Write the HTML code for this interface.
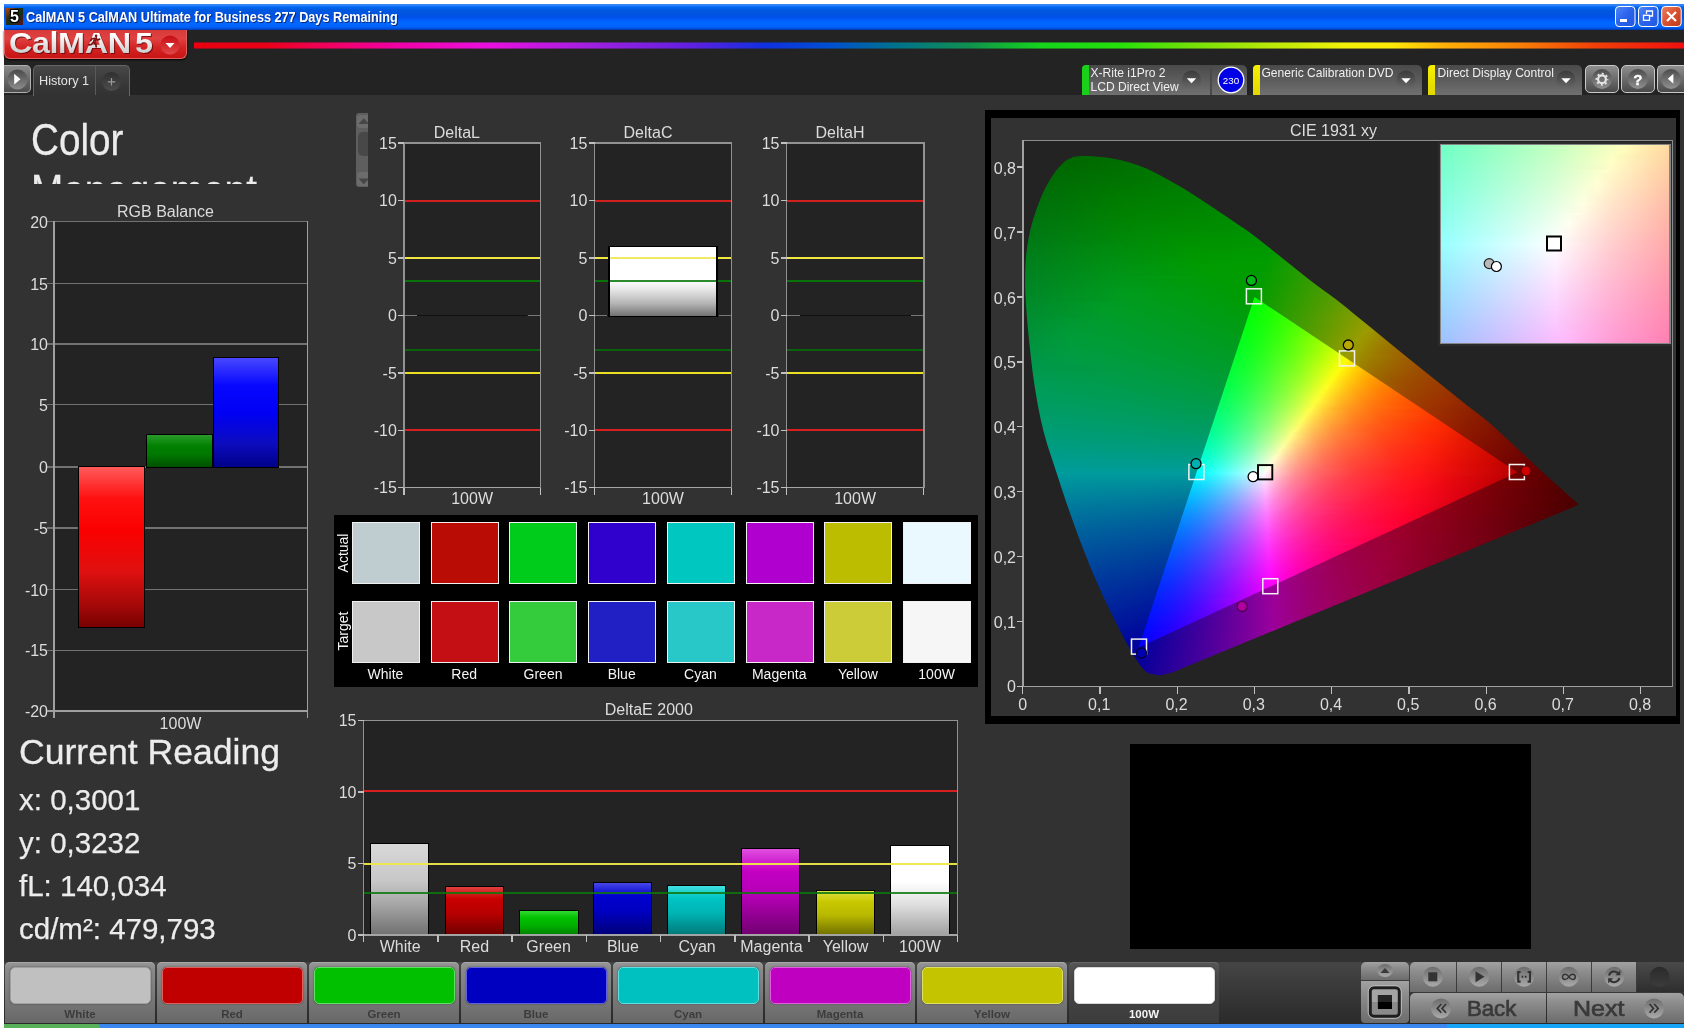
<!DOCTYPE html>
<html><head><meta charset="utf-8"><title>CalMAN 5</title>
<style>
*{box-sizing:border-box;margin:0;padding:0}
html,body{width:1688px;height:1028px;overflow:hidden;background:#fff}
body{font-family:"Liberation Sans",sans-serif;color:#e6e6e6;position:relative}
.a{position:absolute}
#win{position:absolute;left:4px;top:4px;width:1680px;height:1020px;background:#323232;overflow:hidden}
/* coordinates inside #page are page coordinates */
#page{position:absolute;left:0;top:0;width:1688px;height:1028px;overflow:hidden;will-change:transform}
#titlebar{left:4px;top:4px;width:1680px;height:26.3px;background:linear-gradient(180deg,#3a88f0 0,#2a80f8 1.5px,#0068f0 3px,#0058e0 6px,#0054e0 10px,#0050e8 13px,#005cf8 16px,#0068ff 19px,#0062f8 23px,#0048d0 25.2px,#0c2c80 26.3px)}
#titletext{left:25.5px;top:9px;font-weight:bold;font-size:14px;transform:scaleX(0.905);color:#fff;white-space:nowrap;text-shadow:1px 1px 0 #0a2a80;transform-origin:0 0;letter-spacing:0}
#hdr{left:4px;top:30px;width:1680px;height:65px;background:#232323}
#rainbow{left:194px;top:41.5px;width:1490px;height:7px;background:linear-gradient(90deg,#e80010 0,#e80018 4.8%,#f00050 8.1%,#f000a0 13.2%,#e810e0 19.9%,#a020e0 26.6%,#6020e0 33.3%,#1030e0 38.3%,#0050d0 42.7%,#007090 46.8%,#109050 51.9%,#14d41c 56.8%,#26e00a 62.1%,#76e008 67.1%,#b8e808 72.1%,#f0f008 77.2%,#ffe808 80.5%,#ffb008 83.9%,#f88008 88.9%,#f04008 94%,#f01010 100%)}
#rainbow:after{content:"";position:absolute;left:0;top:0;right:0;bottom:0;background:linear-gradient(180deg,rgba(35,35,35,.75) 0,rgba(35,35,35,0) 1.3px,rgba(35,35,35,0) 5.7px,rgba(35,35,35,.75) 7px)}
.tabr{top:65px;height:30px;border-radius:5px 5px 0 0;background:linear-gradient(180deg,#4a4a4a 0,#5c5c5c 50%,#707070 100%)}
.tabt{font-size:12.05px;color:#f0f0f0;white-space:nowrap;line-height:14px}
.tbtn{top:65px;height:28px;width:33.5px;border-radius:5px;border:1px solid #c8c8c8;background:linear-gradient(180deg,#8e8e8e 0,#6c6c6c 50%,#4a4a4a 100%)}
.t16{font-size:16px;color:#dcdcdc;white-space:nowrap}
.ctr{transform:translateX(-50%)}
.rt{transform:translateX(-100%)}
.plot{background:#232323;border:1.5px solid #8a8a8a}
.hl{position:absolute;height:2px}
.cie i{position:absolute;display:block;height:2px}
</style></head>
<body>
<div id="page">
<div class="a" id="win" style="left:4px;top:4px"></div>
<div class="a" id="titlebar"></div>
<div class="a" style="left:6px;top:8px;width:17px;height:17px;background:linear-gradient(135deg,#c04010 0,#303010 35%,#103018 60%,#601020 100%)"></div>
<div class="a" style="left:6px;top:6.5px;width:17px;height:19px;font-weight:bold;font-size:16px;line-height:20px;text-align:center;color:#fff;text-shadow:0 0 1px #000,1px 1px 0 #000,-1px -1px 0 #000,1px -1px 0 #000,-1px 1px 0 #000">5</div>
<div class="a" id="titletext">CalMAN 5 CalMAN Ultimate for Business 277 Days Remaining</div>
<svg class="a" style="left:1610px;top:4px" width="78" height="26" viewBox="0 0 78 26">
<defs>
<linearGradient id="wb" x1="0" y1="0" x2="1" y2="1"><stop offset="0" stop-color="#5088f8"/><stop offset=".5" stop-color="#2a62ec"/><stop offset="1" stop-color="#2458e0"/></linearGradient>
<linearGradient id="wr" x1="0" y1="0" x2="1" y2="1"><stop offset="0" stop-color="#f08060"/><stop offset=".5" stop-color="#d85030"/><stop offset="1" stop-color="#c03c18"/></linearGradient>
</defs>
<rect x="5.5" y="2.5" width="19.5" height="20" rx="3.5" fill="url(#wb)" stroke="#fff" stroke-width="1"/>
<rect x="10" y="15" width="7" height="3" fill="#fff"/>
<rect x="28.5" y="2.5" width="19.5" height="20" rx="3.5" fill="url(#wb)" stroke="#fff" stroke-width="1"/>
<path d="M36.5 10v-3h6v5h-2.5" fill="none" stroke="#fff" stroke-width="1.3"/><rect x="33.5" y="11.3" width="6" height="5" fill="none" stroke="#fff" stroke-width="1.3"/>
<rect x="51.7" y="2.5" width="19.5" height="20" rx="3.5" fill="url(#wr)" stroke="#fff" stroke-width="1"/>
<path d="M57 8l9 9M66 8l-9 9" stroke="#fff" stroke-width="2.2"/>
</svg>

<div class="a" id="hdr"></div>
<div class="a" id="rainbow"></div>
<!-- logo -->
<div class="a" style="left:4px;top:30px;width:183px;height:28.5px;border-radius:0 0 6px 6px;background:linear-gradient(180deg,#d83a3a 0,#e04242 30%,#d42626 60%,#c81414 100%);border:1px solid #e06060;border-top:0;box-shadow:0 1px 2px #000"></div>
<div class="a" style="left:8.8px;top:25.8px;filter:drop-shadow(1px 1px 0.6px rgba(90,0,0,.7))"><div id="logotext" style="font-size:30px;font-weight:bold;white-space:nowrap;line-height:34px;transform:scaleX(1.08);transform-origin:0 0;letter-spacing:-0.4px;background:linear-gradient(180deg,#ffffff 25%,#e4e4e4 55%,#c4c4c4 90%);-webkit-background-clip:text;background-clip:text;color:transparent">CalMAN<span style="margin-left:4px">5</span></div></div>
<svg class="a" style="left:85.5px;top:33px" width="17.5" height="17.5" viewBox="0 0 16 16"><g fill="none" stroke="#7c1414" stroke-width="1.6" stroke-linecap="round"><circle cx="9.2" cy="2.6" r="1.2" fill="#7c1414" stroke="none"/><path d="M8.3 4.6L6.8 8.4M8.3 4.8L5.4 5.2L4.3 7M8.5 4.9L10.8 6.4L12.4 5.6M6.8 8.4L9 10L9.3 12.6M6.8 8.4L5 10.4L2.6 10.8"/></g></svg>
<svg class="a" style="left:158px;top:32.6px" width="24" height="24" viewBox="0 0 24 24"><defs><linearGradient id="lg1" x1="0" y1="0" x2="0" y2="1"><stop offset="0" stop-color="#c80c14"/><stop offset="1" stop-color="#e04848"/></linearGradient></defs><circle cx="12" cy="12" r="9.5" fill="url(#lg1)"/><path d="M7.5 10h9l-4.5 5z" fill="#fff"/></svg>
<!-- play button -->
<div class="a" style="left:4px;top:65px;width:27px;height:28px;border-radius:0 5px 5px 0;background:linear-gradient(180deg,#8a8a8a 0,#6a6a6a 50%,#4e4e4e 100%);border:1px solid #b0b0b0;border-left:0"></div>
<svg class="a" style="left:7px;top:69px" width="22" height="22" viewBox="0 0 22 22"><defs><linearGradient id="lg2" x1="0" y1="0" x2="0" y2="1"><stop offset="0" stop-color="#4a4a4a"/><stop offset="1" stop-color="#8c8c8c"/></linearGradient></defs><circle cx="10.5" cy="10.5" r="10" fill="url(#lg2)"/><path d="M7.2 4.8l6.3 5.4-6.3 5.4z" fill="#fff"/></svg>
<!-- history tab -->
<div class="a" style="left:33px;top:65px;width:97px;height:31px;border-radius:5px 5px 0 0;background:linear-gradient(180deg,#484848 0,#383838 60%,#323232 100%);border:1px solid #666;border-bottom:0"></div>
<div class="a" style="left:95px;top:66px;width:1px;height:29px;background:#5a5a5a"></div>
<div class="a" style="left:39px;top:74.3px;font-size:12.7px;color:#e4e4e4;white-space:nowrap">History 1</div>
<svg class="a" style="left:101px;top:71px" width="22" height="22" viewBox="0 0 22 22"><defs><linearGradient id="lg3" x1="0" y1="0" x2="0" y2="1"><stop offset="0" stop-color="#303030"/><stop offset="1" stop-color="#4c4c4c"/></linearGradient></defs><circle cx="10.5" cy="10.5" r="9.5" fill="url(#lg3)"/><path d="M10.5 7v7.5M6.8 10.8h7.5" stroke="#9a9a9a" stroke-width="1.2"/></svg>
<!-- right tabs -->
<div class="a tabr" style="left:1082px;width:165px"></div>
<div class="a" style="left:1082px;top:65px;width:6.5px;height:30px;background:#1ad01a;border-radius:4px 0 0 0"></div>
<div class="a tabt" style="left:1090.5px;top:66px;line-height:14px">X-Rite i1Pro 2<br>LCD Direct View</div>
<div class="a" style="left:1210px;top:67px;width:1.5px;height:28px;background:#4a4a4a"></div>
<svg class="a" style="left:1217px;top:66px" width="28" height="28"><circle cx="14" cy="14" r="12.8" fill="#0000e6" stroke="#fff" stroke-width="1.3"/><text x="14" y="17.5" font-family="Liberation Sans, sans-serif" font-size="9.8" fill="#fff" text-anchor="middle">230</text></svg>
<div class="a tabr" style="left:1253px;width:169px"></div>
<div class="a" style="left:1253px;top:65px;width:6.5px;height:30px;background:linear-gradient(180deg,#f8f000,#e0d800);border-radius:4px 0 0 0"></div>
<div class="a tabt" style="left:1261.5px;top:66px">Generic Calibration DVD</div>
<div class="a tabr" style="left:1428px;width:154px"></div>
<div class="a" style="left:1428px;top:65px;width:6.5px;height:30px;background:linear-gradient(180deg,#f8f000,#e0d800);border-radius:4px 0 0 0"></div>
<div class="a tabt" style="left:1437.5px;top:66px">Direct Display Control</div>
<div class="a tbtn" style="left:1585px"></div><div class="a tbtn" style="left:1621px"></div><div class="a tbtn" style="left:1657px;width:27px;border-right:0;border-radius:5px 0 0 5px"></div>
<svg class="a" style="left:0;top:0" width="1688" height="100" viewBox="0 0 1688 100">
<defs><linearGradient id="dd" x1="0" y1="0" x2="0" y2="1"><stop offset="0" stop-color="#3a3a3a"/><stop offset="1" stop-color="#6a6a6a"/></linearGradient>
<linearGradient id="bb" x1="0" y1="0" x2="0" y2="1"><stop offset="0" stop-color="#4c4c4c"/><stop offset="1" stop-color="#909090"/></linearGradient></defs>
<g id="ddb"><circle cx="1191.5" cy="80" r="9.5" fill="url(#dd)"/><path d="M1186.8 78.2h9.4l-4.7 5z" fill="#fff"/></g>
<use href="#ddb" x="214.5"/><use href="#ddb" x="374.5"/>
<circle cx="1602" cy="79" r="10" fill="url(#bb)"/><circle cx="1637.8" cy="79" r="10" fill="url(#bb)"/><circle cx="1671" cy="79" r="10" fill="url(#bb)"/>
<g fill="none" stroke="#e6e6e6"><circle cx="1602" cy="79.3" r="3.9" stroke-width="2.2"/><circle cx="1602" cy="79.3" r="5.6" stroke-width="1.7" stroke-dasharray="2 2.398" stroke-dashoffset="1"/></g>
<text x="1637.8" y="85" font-family="Liberation Sans, sans-serif" font-weight="bold" font-size="15" fill="#fff" stroke="#fff" stroke-width="0.4" text-anchor="middle">?</text>
<path d="M1673.4 73.8v10l-5.6-5z" fill="#fff"/>
</svg>

<div class="a" style="left:20px;top:108px;width:320px;height:75.6px;overflow:hidden"><div id="cm" style="position:absolute;left:11px;top:5.5px;font-size:45px;line-height:51px;color:#ececec;-webkit-text-stroke:0.3px #ececec;transform-origin:0 0;transform:scaleX(0.86);white-space:nowrap">Color<br>Management</div></div>
<div class="a t16 ctr" style="left:165.5px;top:202.7px">RGB Balance</div>
<div class="a" style="left:54px;top:222px;width:254px;height:490px;background:#232323"></div>
<div class="a" style="left:47px;top:221.0px;width:261px;height:1.3px;background:#727272"></div>
<div class="a t16 rt" style="left:48px;top:213.8px">20</div>
<div class="a" style="left:47px;top:283.1px;width:261px;height:1.3px;background:#727272"></div>
<div class="a t16 rt" style="left:48px;top:275.9px">15</div>
<div class="a" style="left:47px;top:343.4px;width:261px;height:1.3px;background:#727272"></div>
<div class="a t16 rt" style="left:48px;top:336.2px">10</div>
<div class="a" style="left:47px;top:404.2px;width:261px;height:1.3px;background:#727272"></div>
<div class="a t16 rt" style="left:48px;top:397.0px">5</div>
<div class="a" style="left:47px;top:466.3px;width:261px;height:1.3px;background:#727272"></div>
<div class="a t16 rt" style="left:48px;top:459.1px">0</div>
<div class="a" style="left:47px;top:527.3px;width:261px;height:1.3px;background:#727272"></div>
<div class="a t16 rt" style="left:48px;top:520.1px">-5</div>
<div class="a" style="left:47px;top:588.7px;width:261px;height:1.3px;background:#727272"></div>
<div class="a t16 rt" style="left:48px;top:581.5px">-10</div>
<div class="a" style="left:47px;top:649.6px;width:261px;height:1.3px;background:#727272"></div>
<div class="a t16 rt" style="left:48px;top:642.4px">-15</div>
<div class="a" style="left:47px;top:710.2px;width:261px;height:1.3px;background:#727272"></div>
<div class="a t16 rt" style="left:48px;top:703.0px">-20</div>
<div class="a" style="left:53.2px;top:221px;width:1.6px;height:497px;background:#a0a0a0"></div>
<div class="a" style="left:306.8px;top:221px;width:1.6px;height:497px;background:#a0a0a0"></div>
<div class="a" style="left:47px;top:710.2px;width:261px;height:1.6px;background:#a0a0a0"></div>
<div class="a t16 ctr" style="left:180.5px;top:714.7px">100W</div>
<div class="a" style="left:78px;top:466.4px;width:67px;height:161.6px;border:1.3px solid #000;background:linear-gradient(180deg,#ff5a5a 0,#ff1010 20%,#fa0000 40%,#e01010 65%,#a00808 88%,#780000 100%)"></div>
<div class="a" style="left:145.5px;top:433.5px;width:67px;height:34px;border:1.3px solid #000;background:linear-gradient(180deg,#2a9a2a 0,#008000 35%,#007800 60%,#005000 100%)"></div>
<div class="a" style="left:212.5px;top:356.8px;width:66.4px;height:111px;border:1.3px solid #000;background:linear-gradient(180deg,#4848ff 0,#0808ff 25%,#0000f4 50%,#0c0cc0 78%,#000088 100%)"></div>
<div class="a" style="left:19px;top:732px;font-size:35.6px;line-height:40px;color:#ececec;-webkit-text-stroke:0.3px #ececec;white-space:nowrap" id="cr">Current Reading</div>
<div class="a rd" style="left:19px;top:783.0px;font-size:29.5px;line-height:34px;color:#ececec;-webkit-text-stroke:0.25px #ececec;white-space:nowrap">x: 0,3001</div>
<div class="a rd" style="left:19px;top:826.0px;font-size:29.5px;line-height:34px;color:#ececec;-webkit-text-stroke:0.25px #ececec;white-space:nowrap">y: 0,3232</div>
<div class="a rd" style="left:19px;top:869.0px;font-size:29.5px;line-height:34px;color:#ececec;-webkit-text-stroke:0.25px #ececec;white-space:nowrap">fL: 140,034</div>
<div class="a rd" style="left:19px;top:912.0px;font-size:29.5px;line-height:34px;color:#ececec;-webkit-text-stroke:0.25px #ececec;white-space:nowrap">cd/m²: 479,793</div>
<div class="a" style="left:356px;top:112.6px;width:12px;height:74.4px;border-radius:3px 0 0 3px;background:#5e5e5e"></div>
<div class="a" style="left:357px;top:114.6px;width:11px;height:13.6px;border-radius:3px 0 0 3px;background:#6c6c6c"></div>
<div class="a" style="left:357px;top:171.5px;width:11px;height:14px;border-radius:3px 0 0 3px;background:#6c6c6c"></div>
<div class="a" style="left:357.5px;top:132px;width:10.5px;height:24px;border-radius:5px 0 0 5px;background:#484848"></div>
<svg class="a" style="left:356px;top:112px" width="12" height="76"><path d="M2.5 12L7.8 6.3L12 10.8V12z" fill="#464646"/><path d="M2.5 66.5L7.8 72.2L12 67.7V66.5z" fill="#464646"/></svg>
<div class="a t16 ctr" style="left:456.8px;top:123.5px">DeltaL</div>
<div class="a" style="left:403.8px;top:143.1px;width:136.7px;height:344.5px;background:#232323"></div>
<div class="a" style="left:403.8px;top:199.5px;width:136.7px;height:2.0px;background:#d02020"></div>
<div class="a" style="left:403.8px;top:256.9px;width:136.7px;height:2.0px;background:#f0e840"></div>
<div class="a" style="left:403.8px;top:279.9px;width:136.7px;height:2.0px;background:#0a720a"></div>
<div class="a" style="left:403.8px;top:348.8px;width:136.7px;height:2.0px;background:#0a620a"></div>
<div class="a" style="left:403.8px;top:371.8px;width:136.7px;height:2.0px;background:#e8e020"></div>
<div class="a" style="left:403.8px;top:429.2px;width:136.7px;height:2.0px;background:#d82020"></div>
<div class="a" style="left:403.8px;top:314.7px;width:13px;height:1.4px;background:#787878"></div>
<div class="a" style="left:527.5px;top:314.7px;width:13px;height:1.4px;background:#787878"></div>
<div class="a" style="left:416.8px;top:314.7px;width:110.7px;height:1.4px;background:#111"></div>
<div class="a" style="left:403.1px;top:142.3px;width:138.2px;height:1.5px;background:#929292"></div>
<div class="a" style="left:403.1px;top:486.9px;width:138.2px;height:1.5px;background:#a4a4a4"></div>
<div class="a" style="left:403.1px;top:142.3px;width:1.5px;height:346.0px;background:#929292"></div>
<div class="a" style="left:539.8px;top:142.3px;width:1.5px;height:346.0px;background:#929292"></div>
<div class="a" style="left:403.1px;top:487.6px;width:1.5px;height:7px;background:#c0c0c0"></div>
<div class="a" style="left:539.7px;top:487.6px;width:1.5px;height:7px;background:#c0c0c0"></div>
<div class="a" style="left:398.3px;top:142.4px;width:6px;height:1.5px;background:#c0c0c0"></div>
<div class="a t16 rt" style="left:396.8px;top:134.8px">15</div>
<div class="a" style="left:398.3px;top:199.8px;width:6px;height:1.5px;background:#c0c0c0"></div>
<div class="a t16 rt" style="left:396.8px;top:192.2px">10</div>
<div class="a" style="left:398.3px;top:257.2px;width:6px;height:1.5px;background:#c0c0c0"></div>
<div class="a t16 rt" style="left:396.8px;top:249.6px">5</div>
<div class="a" style="left:398.3px;top:314.7px;width:6px;height:1.5px;background:#c0c0c0"></div>
<div class="a t16 rt" style="left:396.8px;top:307.1px">0</div>
<div class="a" style="left:398.3px;top:372.1px;width:6px;height:1.5px;background:#c0c0c0"></div>
<div class="a t16 rt" style="left:396.8px;top:364.5px">-5</div>
<div class="a" style="left:398.3px;top:429.5px;width:6px;height:1.5px;background:#c0c0c0"></div>
<div class="a t16 rt" style="left:396.8px;top:421.9px">-10</div>
<div class="a" style="left:398.3px;top:486.9px;width:6px;height:1.5px;background:#c0c0c0"></div>
<div class="a t16 rt" style="left:396.8px;top:479.3px">-15</div>
<div class="a t16 ctr" style="left:472.1px;top:490px">100W</div>
<div class="a t16 ctr" style="left:648.0px;top:123.5px">DeltaC</div>
<div class="a" style="left:594.4px;top:143.1px;width:137.1px;height:344.5px;background:#232323"></div>
<div class="a" style="left:594.4px;top:199.5px;width:137.1px;height:2.0px;background:#d02020"></div>
<div class="a" style="left:594.4px;top:256.9px;width:137.1px;height:2.0px;background:#f0e840"></div>
<div class="a" style="left:594.4px;top:279.9px;width:137.1px;height:2.0px;background:#0a720a"></div>
<div class="a" style="left:594.4px;top:348.8px;width:137.1px;height:2.0px;background:#0a620a"></div>
<div class="a" style="left:594.4px;top:371.8px;width:137.1px;height:2.0px;background:#e8e020"></div>
<div class="a" style="left:594.4px;top:429.2px;width:137.1px;height:2.0px;background:#d82020"></div>
<div class="a" style="left:594.4px;top:314.7px;width:13px;height:1.4px;background:#787878"></div>
<div class="a" style="left:718.5px;top:314.7px;width:13px;height:1.4px;background:#787878"></div>
<div class="a" style="left:607.4px;top:314.7px;width:111.1px;height:1.4px;background:#111"></div>
<div class="a" style="left:593.6px;top:142.3px;width:138.6px;height:1.5px;background:#929292"></div>
<div class="a" style="left:593.6px;top:486.9px;width:138.6px;height:1.5px;background:#a4a4a4"></div>
<div class="a" style="left:593.6px;top:142.3px;width:1.5px;height:346.0px;background:#929292"></div>
<div class="a" style="left:730.8px;top:142.3px;width:1.5px;height:346.0px;background:#929292"></div>
<div class="a" style="left:593.7px;top:487.6px;width:1.5px;height:7px;background:#c0c0c0"></div>
<div class="a" style="left:730.7px;top:487.6px;width:1.5px;height:7px;background:#c0c0c0"></div>
<div class="a" style="left:588.9px;top:142.4px;width:6px;height:1.5px;background:#c0c0c0"></div>
<div class="a t16 rt" style="left:587.4px;top:134.8px">15</div>
<div class="a" style="left:588.9px;top:199.8px;width:6px;height:1.5px;background:#c0c0c0"></div>
<div class="a t16 rt" style="left:587.4px;top:192.2px">10</div>
<div class="a" style="left:588.9px;top:257.2px;width:6px;height:1.5px;background:#c0c0c0"></div>
<div class="a t16 rt" style="left:587.4px;top:249.6px">5</div>
<div class="a" style="left:588.9px;top:314.7px;width:6px;height:1.5px;background:#c0c0c0"></div>
<div class="a t16 rt" style="left:587.4px;top:307.1px">0</div>
<div class="a" style="left:588.9px;top:372.1px;width:6px;height:1.5px;background:#c0c0c0"></div>
<div class="a t16 rt" style="left:587.4px;top:364.5px">-5</div>
<div class="a" style="left:588.9px;top:429.5px;width:6px;height:1.5px;background:#c0c0c0"></div>
<div class="a t16 rt" style="left:587.4px;top:421.9px">-10</div>
<div class="a" style="left:588.9px;top:486.9px;width:6px;height:1.5px;background:#c0c0c0"></div>
<div class="a t16 rt" style="left:587.4px;top:479.3px">-15</div>
<div class="a t16 ctr" style="left:663.0px;top:490px">100W</div>
<div class="a" style="left:607.8px;top:246px;width:110.4px;height:70.6px;border:solid #000;border-width:1.2px 2px 1.5px;background:linear-gradient(180deg,#fff 0,#fff 48%,#e6e6e6 62%,#b4b4b4 82%,#727272 100%)"></div>
<div class="a" style="left:609.8px;top:256.9px;width:106.4px;height:2px;background:rgba(238,228,60,.8)"></div>
<div class="a" style="left:609.8px;top:279.9px;width:106.4px;height:2px;background:rgba(20,125,20,.9)"></div>
<div class="a t16 ctr" style="left:840.0px;top:123.5px">DeltaH</div>
<div class="a" style="left:786.5px;top:143.1px;width:137.2px;height:344.5px;background:#232323"></div>
<div class="a" style="left:786.5px;top:199.5px;width:137.2px;height:2.0px;background:#d02020"></div>
<div class="a" style="left:786.5px;top:256.9px;width:137.2px;height:2.0px;background:#f0e840"></div>
<div class="a" style="left:786.5px;top:279.9px;width:137.2px;height:2.0px;background:#0a720a"></div>
<div class="a" style="left:786.5px;top:348.8px;width:137.2px;height:2.0px;background:#0a620a"></div>
<div class="a" style="left:786.5px;top:371.8px;width:137.2px;height:2.0px;background:#e8e020"></div>
<div class="a" style="left:786.5px;top:429.2px;width:137.2px;height:2.0px;background:#d82020"></div>
<div class="a" style="left:786.5px;top:314.7px;width:13px;height:1.4px;background:#787878"></div>
<div class="a" style="left:910.7px;top:314.7px;width:13px;height:1.4px;background:#787878"></div>
<div class="a" style="left:799.5px;top:314.7px;width:111.2px;height:1.4px;background:#111"></div>
<div class="a" style="left:785.8px;top:142.3px;width:138.7px;height:1.5px;background:#929292"></div>
<div class="a" style="left:785.8px;top:486.9px;width:138.7px;height:1.5px;background:#a4a4a4"></div>
<div class="a" style="left:785.8px;top:142.3px;width:1.5px;height:346.0px;background:#929292"></div>
<div class="a" style="left:923.0px;top:142.3px;width:1.5px;height:346.0px;background:#929292"></div>
<div class="a" style="left:785.8px;top:487.6px;width:1.5px;height:7px;background:#c0c0c0"></div>
<div class="a" style="left:922.9px;top:487.6px;width:1.5px;height:7px;background:#c0c0c0"></div>
<div class="a" style="left:781.0px;top:142.4px;width:6px;height:1.5px;background:#c0c0c0"></div>
<div class="a t16 rt" style="left:779.5px;top:134.8px">15</div>
<div class="a" style="left:781.0px;top:199.8px;width:6px;height:1.5px;background:#c0c0c0"></div>
<div class="a t16 rt" style="left:779.5px;top:192.2px">10</div>
<div class="a" style="left:781.0px;top:257.2px;width:6px;height:1.5px;background:#c0c0c0"></div>
<div class="a t16 rt" style="left:779.5px;top:249.6px">5</div>
<div class="a" style="left:781.0px;top:314.7px;width:6px;height:1.5px;background:#c0c0c0"></div>
<div class="a t16 rt" style="left:779.5px;top:307.1px">0</div>
<div class="a" style="left:781.0px;top:372.1px;width:6px;height:1.5px;background:#c0c0c0"></div>
<div class="a t16 rt" style="left:779.5px;top:364.5px">-5</div>
<div class="a" style="left:781.0px;top:429.5px;width:6px;height:1.5px;background:#c0c0c0"></div>
<div class="a t16 rt" style="left:779.5px;top:421.9px">-10</div>
<div class="a" style="left:781.0px;top:486.9px;width:6px;height:1.5px;background:#c0c0c0"></div>
<div class="a t16 rt" style="left:779.5px;top:479.3px">-15</div>
<div class="a t16 ctr" style="left:855.1px;top:490px">100W</div>
<div class="a" style="left:334px;top:514.5px;width:644.2px;height:172.8px;background:#000"></div>
<div class="a" style="left:351.8px;top:522px;width:68px;height:61.5px;background:#bfccd0;border:1.3px solid #f0f0f0"></div>
<div class="a" style="left:351.8px;top:601px;width:68px;height:61.5px;background:#c8c8c8;border:1.3px solid #f0f0f0"></div>
<div class="a ctr" style="left:385.5px;top:666px;font-size:14px;color:#f4f4f4;white-space:nowrap">White</div>
<div class="a" style="left:430.5px;top:522px;width:68px;height:61.5px;background:#b80c04;border:1.3px solid #f0f0f0"></div>
<div class="a" style="left:430.5px;top:601px;width:68px;height:61.5px;background:#c41014;border:1.3px solid #f0f0f0"></div>
<div class="a ctr" style="left:464.2px;top:666px;font-size:14px;color:#f4f4f4;white-space:nowrap">Red</div>
<div class="a" style="left:509.3px;top:522px;width:68px;height:61.5px;background:#00cc1c;border:1.3px solid #f0f0f0"></div>
<div class="a" style="left:509.3px;top:601px;width:68px;height:61.5px;background:#34cc3c;border:1.3px solid #f0f0f0"></div>
<div class="a ctr" style="left:543.0px;top:666px;font-size:14px;color:#f4f4f4;white-space:nowrap">Green</div>
<div class="a" style="left:588.0px;top:522px;width:68px;height:61.5px;background:#3000cc;border:1.3px solid #f0f0f0"></div>
<div class="a" style="left:588.0px;top:601px;width:68px;height:61.5px;background:#2020c4;border:1.3px solid #f0f0f0"></div>
<div class="a ctr" style="left:621.7px;top:666px;font-size:14px;color:#f4f4f4;white-space:nowrap">Blue</div>
<div class="a" style="left:666.7px;top:522px;width:68px;height:61.5px;background:#00c8c0;border:1.3px solid #f0f0f0"></div>
<div class="a" style="left:666.7px;top:601px;width:68px;height:61.5px;background:#28c8c8;border:1.3px solid #f0f0f0"></div>
<div class="a ctr" style="left:700.4px;top:666px;font-size:14px;color:#f4f4f4;white-space:nowrap">Cyan</div>
<div class="a" style="left:745.5px;top:522px;width:68px;height:61.5px;background:#b000d0;border:1.3px solid #f0f0f0"></div>
<div class="a" style="left:745.5px;top:601px;width:68px;height:61.5px;background:#c828c8;border:1.3px solid #f0f0f0"></div>
<div class="a ctr" style="left:779.2px;top:666px;font-size:14px;color:#f4f4f4;white-space:nowrap">Magenta</div>
<div class="a" style="left:824.2px;top:522px;width:68px;height:61.5px;background:#bcbc00;border:1.3px solid #f0f0f0"></div>
<div class="a" style="left:824.2px;top:601px;width:68px;height:61.5px;background:#cccc38;border:1.3px solid #f0f0f0"></div>
<div class="a ctr" style="left:857.9px;top:666px;font-size:14px;color:#f4f4f4;white-space:nowrap">Yellow</div>
<div class="a" style="left:902.9px;top:522px;width:68px;height:61.5px;background:#eaf8ff;border:1.3px solid #f0f0f0"></div>
<div class="a" style="left:902.9px;top:601px;width:68px;height:61.5px;background:#f6f6f6;border:1.3px solid #f0f0f0"></div>
<div class="a ctr" style="left:936.6px;top:666px;font-size:14px;color:#f4f4f4;white-space:nowrap">100W</div>
<div class="a" style="left:342.5px;top:552.5px;font-size:14px;color:#f4f4f4;white-space:nowrap;transform:translate(-50%,-50%) rotate(-90deg)">Actual</div>
<div class="a" style="left:342.5px;top:631px;font-size:14px;color:#f4f4f4;white-space:nowrap;transform:translate(-50%,-50%) rotate(-90deg)">Target</div>
<div class="a t16 ctr" style="left:648.8px;top:700.8px">DeltaE 2000</div>
<div class="a" style="left:363.5px;top:720.4px;width:594.0px;height:214.5px;background:#232323"></div>
<div class="a" style="left:369.6px;top:843.0px;width:59.4px;height:91.9px;border:1.6px solid #000;border-bottom:0;background:linear-gradient(180deg,#d8d8d8 0,#c8c8c8 40%,#a8a8a8 65%,#707070 100%)"></div>
<div class="a" style="left:444.7px;top:886.4px;width:59.4px;height:48.5px;border:1.6px solid #000;border-bottom:0;background:linear-gradient(180deg,#e04040 0,#c80000 25%,#b80000 55%,#700000 100%)"></div>
<div class="a" style="left:519.4px;top:909.6px;width:59.4px;height:25.3px;border:1.6px solid #000;border-bottom:0;background:linear-gradient(180deg,#30d830 0,#00c000 30%,#00b000 60%,#008000 100%)"></div>
<div class="a" style="left:593.0px;top:881.9px;width:59.4px;height:53.0px;border:1.6px solid #000;border-bottom:0;background:linear-gradient(180deg,#4848e8 0,#0000d0 25%,#0000c0 55%,#000078 100%)"></div>
<div class="a" style="left:666.9px;top:885.4px;width:59.4px;height:49.5px;border:1.6px solid #000;border-bottom:0;background:linear-gradient(180deg,#40e0e0 0,#00c4c4 25%,#00b4b4 55%,#007878 100%)"></div>
<div class="a" style="left:740.8px;top:847.7px;width:59.4px;height:87.2px;border:1.6px solid #000;border-bottom:0;background:linear-gradient(180deg,#e050e0 0,#c400c4 25%,#b400b4 55%,#700070 100%)"></div>
<div class="a" style="left:815.9px;top:890.0px;width:59.4px;height:44.9px;border:1.6px solid #000;border-bottom:0;background:linear-gradient(180deg,#e0e040 0,#c8c800 25%,#b8b800 55%,#707000 100%)"></div>
<div class="a" style="left:890.2px;top:844.6px;width:59.4px;height:90.3px;border:1.6px solid #000;border-bottom:0;background:linear-gradient(180deg,#fff 0,#fff 40%,#e0e0e0 65%,#a0a0a0 100%)"></div>
<div class="a" style="left:363.5px;top:790.0px;width:594.0px;height:2.1px;background:#d82020"></div>
<div class="a" style="left:363.5px;top:862.8px;width:594.0px;height:2.1px;background:rgba(240,232,70,.95)"></div>
<div class="a" style="left:363.5px;top:891.6px;width:594.0px;height:2.1px;background:rgba(10,120,10,.85)"></div>
<div class="a" style="left:362.8px;top:719.6px;width:595.5px;height:1.5px;background:#929292"></div>
<div class="a" style="left:362.8px;top:934.1px;width:595.5px;height:1.5px;background:#a4a4a4"></div>
<div class="a" style="left:362.8px;top:719.6px;width:1.5px;height:216.0px;background:#929292"></div>
<div class="a" style="left:956.8px;top:719.6px;width:1.5px;height:216.0px;background:#929292"></div>
<div class="a" style="left:358.0px;top:719.7px;width:6px;height:1.5px;background:#c0c0c0"></div>
<div class="a t16 rt" style="left:356.5px;top:712.1px">15</div>
<div class="a" style="left:358.0px;top:791.2px;width:6px;height:1.5px;background:#c0c0c0"></div>
<div class="a t16 rt" style="left:356.5px;top:783.6px">10</div>
<div class="a" style="left:358.0px;top:862.7px;width:6px;height:1.5px;background:#c0c0c0"></div>
<div class="a t16 rt" style="left:356.5px;top:855.1px">5</div>
<div class="a" style="left:358.0px;top:934.2px;width:6px;height:1.5px;background:#c0c0c0"></div>
<div class="a t16 rt" style="left:356.5px;top:926.6px">0</div>
<div class="a" style="left:362.8px;top:934.9px;width:1.5px;height:7px;background:#c0c0c0"></div>
<div class="a t16 ctr" style="left:400.1px;top:937.5px">White</div>
<div class="a" style="left:437.1px;top:934.9px;width:1.5px;height:7px;background:#c0c0c0"></div>
<div class="a t16 ctr" style="left:474.4px;top:937.5px">Red</div>
<div class="a" style="left:511.3px;top:934.9px;width:1.5px;height:7px;background:#c0c0c0"></div>
<div class="a t16 ctr" style="left:548.6px;top:937.5px">Green</div>
<div class="a" style="left:585.5px;top:934.9px;width:1.5px;height:7px;background:#c0c0c0"></div>
<div class="a t16 ctr" style="left:622.9px;top:937.5px">Blue</div>
<div class="a" style="left:659.8px;top:934.9px;width:1.5px;height:7px;background:#c0c0c0"></div>
<div class="a t16 ctr" style="left:697.1px;top:937.5px">Cyan</div>
<div class="a" style="left:734.0px;top:934.9px;width:1.5px;height:7px;background:#c0c0c0"></div>
<div class="a t16 ctr" style="left:771.4px;top:937.5px">Magenta</div>
<div class="a" style="left:808.3px;top:934.9px;width:1.5px;height:7px;background:#c0c0c0"></div>
<div class="a t16 ctr" style="left:845.6px;top:937.5px">Yellow</div>
<div class="a" style="left:882.5px;top:934.9px;width:1.5px;height:7px;background:#c0c0c0"></div>
<div class="a t16 ctr" style="left:919.9px;top:937.5px">100W</div>
<div class="a" style="left:956.8px;top:934.9px;width:1.5px;height:7px;background:#c0c0c0"></div>
<div class="a" style="left:1130px;top:744px;width:401px;height:205px;background:#000"></div>
<div class="a" style="left:984.5px;top:110.4px;width:695.5px;height:613.3px;background:#000"></div>
<div class="a" style="left:991.3px;top:117.6px;width:684.6px;height:598.8px;background:#323232"></div>
<div class="a t16 ctr" style="left:1333.5px;top:121.8px">CIE 1931 xy</div>
<div class="a" style="left:1022px;top:140px;width:651px;height:547px;background:#232323"></div>
<div class="a" style="left:1021.9px;top:139.8px;width:651.2px;height:1.7px;background:#8c8c8c"></div>
<div class="a" style="left:1021.9px;top:685.8px;width:651.2px;height:1.7px;background:#a0a0a0"></div>
<div class="a" style="left:1021.9px;top:139.8px;width:1.7px;height:547.6px;background:#a0a0a0"></div>
<div class="a" style="left:1671.5px;top:139.8px;width:1.7px;height:547.6px;background:#8c8c8c"></div>
<div class="a cie" style="left:1022px;top:140px;width:651px;height:548px;clip-path:polygon(137.9px 535.5px,135.0px 535.1px,130.8px 534.3px,127.2px 533.4px,124.8px 532.2px,123.0px 530.7px,121.3px 529.0px,119.9px 527.6px,118.7px 526.0px,116.5px 522.7px,113.1px 517.5px,108.8px 510.6px,103.6px 501.3px,97.0px 488.6px,89.5px 473.5px,82.2px 458.5px,75.8px 444.2px,69.6px 429.9px,63.8px 415.6px,58.2px 401.2px,52.9px 386.7px,47.9px 372.8px,43.5px 360.0px,39.4px 347.8px,35.3px 334.9px,30.6px 320.7px,25.7px 306.0px,21.5px 291.3px,18.2px 277.0px,15.4px 262.8px,13.0px 248.5px,10.9px 234.2px,9.2px 219.9px,7.6px 205.6px,6.1px 190.7px,4.8px 175.8px,3.9px 162.8px,3.3px 153.0px,3.1px 145.2px,3.1px 137.5px,3.3px 129.5px,3.6px 121.6px,4.3px 113.8px,5.3px 106.1px,6.6px 98.5px,8.1px 91.0px,9.9px 83.8px,12.0px 76.7px,14.4px 69.5px,17.1px 62.2px,20.1px 54.8px,23.3px 48.0px,26.6px 41.9px,30.1px 36.4px,33.4px 31.6px,36.5px 27.7px,39.5px 24.6px,42.2px 22.1px,44.4px 20.3px,46.3px 19.3px,48.3px 18.4px,50.0px 17.5px,51.7px 16.8px,54.9px 16.4px,60.1px 16.1px,66.6px 16.0px,73.9px 16.4px,81.8px 17.2px,90.5px 18.4px,99.1px 20.2px,107.6px 22.4px,116.0px 25.2px,124.4px 28.4px,132.8px 32.4px,141.2px 36.9px,149.7px 41.7px,157.8px 46.3px,166.0px 51.2px,175.0px 56.9px,185.7px 63.9px,197.2px 71.7px,208.0px 79.0px,216.0px 84.4px,223.3px 89.3px,233.8px 97.1px,251.1px 110.7px,271.7px 127.3px,289.0px 141.1px,299.7px 149.1px,307.1px 154.2px,314.8px 160.0px,323.7px 167.1px,333.0px 174.7px,343.9px 183.6px,356.7px 194.0px,371.0px 205.7px,387.0px 218.7px,406.6px 234.4px,427.8px 251.5px,445.1px 265.4px,454.4px 272.5px,459.8px 276.5px,468.7px 284.0px,485.6px 299.4px,505.9px 318.4px,523.2px 334.4px,535.2px 345.2px,544.1px 353.2px,550.5px 358.9px,553.8px 361.8px,554.7px 362.4px,555.1px 362.8px,555.7px 363.5px,556.0px 363.9px,555.9px 364.4px,555.4px 365.0px,554.5px 365.6px,553.9px 366.0px,434.4px 415.3px,270.1px 483.0px,150.7px 532.3px,146.9px 533.2px,141.7px 534.6px)"><i style="left:47px;top:16px;width:42px;background:linear-gradient(90deg,#006700 0px,#006c00 42px)"></i>
<i style="left:43px;top:18px;width:57px;background:linear-gradient(90deg,#006700 0px,#006e00 57px)"></i>
<i style="left:40px;top:20px;width:68px;background:linear-gradient(90deg,#006700 0px,#007000 68px)"></i>
<i style="left:38px;top:22px;width:76px;background:linear-gradient(90deg,#006700 0px,#007100 76px)"></i>
<i style="left:36px;top:24px;width:84px;background:linear-gradient(90deg,#006800 0px,#007200 84px)"></i>
<i style="left:34px;top:26px;width:91px;background:linear-gradient(90deg,#006801 0px,#007400 91px)"></i>
<i style="left:33px;top:28px;width:97px;background:linear-gradient(90deg,#006801 0px,#007500 97px)"></i>
<i style="left:31px;top:30px;width:103px;background:linear-gradient(90deg,#006902 0px,#007600 103px)"></i>
<i style="left:30px;top:32px;width:108px;background:linear-gradient(90deg,#006902 0px,#007700 108px)"></i>
<i style="left:28px;top:34px;width:113px;background:linear-gradient(90deg,#006a03 0px,#007800 113px)"></i>
<i style="left:27px;top:36px;width:118px;background:linear-gradient(90deg,#006a04 0px,#007900 118px)"></i>
<i style="left:26px;top:38px;width:123px;background:linear-gradient(90deg,#006b04 0px,#007a00 123px)"></i>
<i style="left:25px;top:40px;width:127px;background:linear-gradient(90deg,#006b05 0px,#007400 63.5px,#007b00 127px)"></i>
<i style="left:23px;top:42px;width:133px;background:linear-gradient(90deg,#006b05 0px,#007c00 133px)"></i>
<i style="left:22px;top:44px;width:137px;background:linear-gradient(90deg,#006c06 0px,#007600 68.5px,#007d00 137px)"></i>
<i style="left:21px;top:46px;width:142px;background:linear-gradient(90deg,#006c06 0px,#007e00 142px)"></i>
<i style="left:20px;top:48px;width:146px;background:linear-gradient(90deg,#006d07 0px,#007800 73px,#007f00 146px)"></i>
<i style="left:19px;top:50px;width:150px;background:linear-gradient(90deg,#006d07 0px,#007800 75px,#008000 150px)"></i>
<i style="left:18px;top:52px;width:154px;background:linear-gradient(90deg,#006e08 0px,#007900 77px,#008100 154px)"></i>
<i style="left:18px;top:54px;width:158px;background:linear-gradient(90deg,#006e08 0px,#007a00 79px,#008200 158px)"></i>
<i style="left:17px;top:56px;width:162px;background:linear-gradient(90deg,#006f09 0px,#007b00 81px,#008300 162px)"></i>
<i style="left:16px;top:58px;width:166px;background:linear-gradient(90deg,#006f09 0px,#007c00 83px,#008400 166px)"></i>
<i style="left:15px;top:60px;width:170px;background:linear-gradient(90deg,#006f0a 0px,#007d00 85px,#008400 170px)"></i>
<i style="left:14px;top:62px;width:174px;background:linear-gradient(90deg,#00700b 0px,#007d00 87px,#008500 174px)"></i>
<i style="left:14px;top:64px;width:177px;background:linear-gradient(90deg,#00710b 0px,#007e00 88.5px,#008600 177px)"></i>
<i style="left:13px;top:66px;width:181px;background:linear-gradient(90deg,#00710c 0px,#007f00 90.5px,#008700 181px)"></i>
<i style="left:12px;top:68px;width:185px;background:linear-gradient(90deg,#00710c 0px,#008000 92.5px,#008800 185px)"></i>
<i style="left:12px;top:70px;width:188px;background:linear-gradient(90deg,#00720d 0px,#008100 94px,#008900 188px)"></i>
<i style="left:11px;top:72px;width:192px;background:linear-gradient(90deg,#00720d 0px,#008200 96px,#008a00 192px)"></i>
<i style="left:10px;top:74px;width:196px;background:linear-gradient(90deg,#00730e 0px,#008200 98px,#008b00 196px)"></i>
<i style="left:10px;top:76px;width:198px;background:linear-gradient(90deg,#00730e 0px,#008301 99px,#008b00 198px)"></i>
<i style="left:9px;top:78px;width:202px;background:linear-gradient(90deg,#00740f 0px,#008401 101px,#008c00 202px)"></i>
<i style="left:8px;top:80px;width:206px;background:linear-gradient(90deg,#00740f 0px,#008502 103px,#008d00 206px)"></i>
<i style="left:8px;top:82px;width:209px;background:linear-gradient(90deg,#007510 0px,#008602 104.5px,#008e00 209px)"></i>
<i style="left:7px;top:84px;width:213px;background:linear-gradient(90deg,#007511 0px,#008703 106.5px,#008f00 213px)"></i>
<i style="left:7px;top:86px;width:216px;background:linear-gradient(90deg,#007611 0px,#008703 108px,#009000 216px)"></i>
<i style="left:6px;top:88px;width:220px;background:linear-gradient(90deg,#007612 0px,#008803 110px,#009000 220px)"></i>
<i style="left:6px;top:90px;width:223px;background:linear-gradient(90deg,#007712 0px,#008904 111.5px,#009100 223px)"></i>
<i style="left:6px;top:92px;width:226px;background:linear-gradient(90deg,#007713 0px,#008a04 113px,#009200 226px)"></i>
<i style="left:5px;top:94px;width:229px;background:linear-gradient(90deg,#007813 0px,#008b05 114.5px,#009000 171.8px,#009300 229px)"></i>
<i style="left:5px;top:96px;width:232px;background:linear-gradient(90deg,#007814 0px,#008c05 116px,#009100 174px,#009300 232px)"></i>
<i style="left:4px;top:98px;width:235px;background:linear-gradient(90deg,#007915 0px,#008c05 117.5px,#009200 176.2px,#009400 235px)"></i>
<i style="left:4px;top:100px;width:238px;background:linear-gradient(90deg,#007915 0px,#008d06 119px,#009300 178.5px,#009500 238px)"></i>
<i style="left:4px;top:102px;width:241px;background:linear-gradient(90deg,#007a16 0px,#00880d 80.3px,#009200 160.7px,#009600 241px)"></i>
<i style="left:3px;top:104px;width:244px;background:linear-gradient(90deg,#007a17 0px,#00890e 81.3px,#009300 162.7px,#009600 244px)"></i>
<i style="left:3px;top:106px;width:247px;background:linear-gradient(90deg,#007b17 0px,#008a0e 82.3px,#009400 164.7px,#019700 247px)"></i>
<i style="left:3px;top:108px;width:249px;background:linear-gradient(90deg,#007b18 0px,#008b0f 83px,#009500 166px,#049800 249px)"></i>
<i style="left:3px;top:110px;width:252px;background:linear-gradient(90deg,#007c18 0px,#008b0f 84px,#009600 168px,#009800 210px,#009900 231px,#009900 241.5px,#089900 252px)"></i>
<i style="left:2px;top:112px;width:255px;background:linear-gradient(90deg,#007c19 0px,#008c10 85px,#009700 170px,#009900 212.5px,#009900 233.8px,#009900 244.4px,#0b9900 255px)"></i>
<i style="left:2px;top:114px;width:258px;background:linear-gradient(90deg,#007d1a 0px,#008d10 86px,#009700 172px,#009a00 215px,#009a00 236.5px,#039a00 247.2px,#0e9a00 258px)"></i>
<i style="left:2px;top:116px;width:260px;background:linear-gradient(90deg,#007d1a 0px,#008e11 86.7px,#009800 173.3px,#009b00 216.7px,#009b00 238.3px,#069b00 249.2px,#119b00 260px)"></i>
<i style="left:2px;top:118px;width:263px;background:linear-gradient(90deg,#007e1b 0px,#008e12 87.7px,#009900 175.3px,#009b00 219.2px,#009c00 241.1px,#159b00 263px)"></i>
<i style="left:2px;top:120px;width:265px;background:linear-gradient(90deg,#007e1c 0px,#008f12 88.3px,#009a00 176.7px,#009c00 220.8px,#019c00 242.9px,#179c00 265px)"></i>
<i style="left:2px;top:122px;width:268px;background:linear-gradient(90deg,#007f1c 0px,#009013 89.3px,#009b00 178.7px,#009c00 223.3px,#009c00 234.5px,#059c00 245.7px,#1b9c00 268px)"></i>
<i style="left:1px;top:124px;width:271px;background:linear-gradient(90deg,#007f1d 0px,#009114 90.3px,#009c01 180.7px,#009c00 225.8px,#009c00 237.1px,#079c00 248.4px,#1e9c00 271px)"></i>
<i style="left:1px;top:126px;width:274px;background:linear-gradient(90deg,#00801e 0px,#009114 91.3px,#009c01 182.7px,#009c00 228.3px,#009c00 239.8px,#0b9c00 251.2px,#219c00 274px)"></i>
<i style="left:1px;top:128px;width:276px;background:linear-gradient(90deg,#00801e 0px,#009215 92px,#009c02 184px,#009c00 230px,#019c00 241.5px,#0e9c00 253px,#249c00 276px)"></i>
<i style="left:1px;top:130px;width:279px;background:linear-gradient(90deg,#00811f 0px,#009315 93px,#009c02 186px,#009c00 232.5px,#059c00 244.1px,#119c00 255.8px,#289c00 279px)"></i>
<i style="left:1px;top:132px;width:281px;background:linear-gradient(90deg,#008120 0px,#009416 93.7px,#009c03 187.3px,#009c00 234.2px,#2b9c00 281px)"></i>
<i style="left:1px;top:134px;width:284px;background:linear-gradient(90deg,#008220 0px,#009417 94.7px,#009c03 189.3px,#009c00 236.7px,#2f9c00 284px)"></i>
<i style="left:1px;top:136px;width:286px;background:linear-gradient(90deg,#008221 0px,#009518 95.3px,#009c0f 143px,#009c04 190.7px,#009c00 238.3px,#329c00 286px)"></i>
<i style="left:1px;top:138px;width:289px;background:linear-gradient(90deg,#008322 0px,#009618 96.3px,#009c04 192.7px,#049c00 240.8px,#369c00 289px)"></i>
<i style="left:1px;top:140px;width:291px;background:linear-gradient(90deg,#008323 0px,#009719 97px,#009c04 194px,#009c00 218.2px,#009c00 230.4px,#009c00 236.4px,#079c00 242.5px,#399c00 291px)"></i>
<i style="left:1px;top:142px;width:294px;background:linear-gradient(90deg,#008423 0px,#00981a 98px,#009c05 196px,#009c00 220.5px,#009c00 232.8px,#0a9c00 245px,#3d9c00 294px)"></i>
<i style="left:1px;top:144px;width:297px;background:linear-gradient(90deg,#008424 0px,#00981a 99px,#009c05 198px,#009c00 222.8px,#009c00 235.1px,#0e9c00 247.5px,#419c00 297px)"></i>
<i style="left:1px;top:146px;width:299px;background:linear-gradient(90deg,#008525 0px,#00991b 99.7px,#009c06 199.3px,#009c00 224.2px,#039c00 236.7px,#109c00 249.2px,#449c00 299px)"></i>
<i style="left:1px;top:148px;width:302px;background:linear-gradient(90deg,#008526 0px,#009a1c 100.7px,#009c06 201.3px,#009c00 226.5px,#069c00 239.1px,#149c00 251.7px,#489c00 302px)"></i>
<i style="left:1px;top:150px;width:305px;background:linear-gradient(90deg,#008626 0px,#009b1d 101.7px,#009c06 203.3px,#009c00 228.8px,#0a9c00 241.5px,#179c00 254.2px,#4d9c00 305px)"></i>
<i style="left:1px;top:152px;width:308px;background:linear-gradient(90deg,#008627 0px,#009c1d 102.7px,#009c07 205.3px,#009c00 231px,#1b9c00 256.7px,#519c00 308px)"></i>
<i style="left:1px;top:154px;width:310px;background:linear-gradient(90deg,#008728 0px,#009c1e 103.3px,#009c07 206.7px,#009c00 232.5px,#1d9c00 258.3px,#549c00 310px)"></i>
<i style="left:2px;top:156px;width:312px;background:linear-gradient(90deg,#008829 0px,#009c1e 104px,#009c07 208px,#009c03 221px,#009c01 227.5px,#059c00 234px,#219c00 260px,#599c00 312px)"></i>
<i style="left:2px;top:158px;width:315px;background:linear-gradient(90deg,#008829 0px,#009c1f 105px,#009c08 210px,#009c04 223.1px,#009c02 229.7px,#089c00 236.2px,#249c00 262.5px,#5e9c00 315px)"></i>
<i style="left:2px;top:160px;width:317px;background:linear-gradient(90deg,#00892a 0px,#009c20 105.7px,#009c08 211.3px,#009c04 224.5px,#0b9c00 237.8px,#279c00 264.2px,#619c00 317px)"></i>
<i style="left:2px;top:162px;width:320px;background:linear-gradient(90deg,#00892b 0px,#009b25 80px,#009c16 160px,#009c0c 200px,#009c07 220px,#029c04 230px,#0e9c00 240px,#669c00 320px)"></i>
<i style="left:2px;top:164px;width:322px;background:linear-gradient(90deg,#00892c 0px,#009b26 80.5px,#009c16 161px,#009c0d 201.2px,#009c07 221.4px,#059c04 231.4px,#109c01 241.5px,#6a9c00 322px)"></i>
<i style="left:2px;top:166px;width:325px;background:linear-gradient(90deg,#008a2d 0px,#009c26 81.2px,#009c17 162.5px,#009c0d 203.1px,#009c08 223.4px,#149c01 243.8px,#6f9c00 325px)"></i>
<i style="left:2px;top:168px;width:327px;background:linear-gradient(90deg,#008a2e 0px,#009c27 81.8px,#009c18 163.5px,#009c0e 204.4px,#009c08 224.8px,#169c01 245.2px,#739c00 327px)"></i>
<i style="left:2px;top:170px;width:330px;background:linear-gradient(90deg,#008b2e 0px,#009c28 82.5px,#009c18 165px,#009c0e 206.2px,#029c09 226.9px,#1a9c02 247.5px,#789c00 330px)"></i>
<i style="left:3px;top:172px;width:331px;background:linear-gradient(90deg,#008c2f 0px,#009c29 82.8px,#009c19 165.5px,#009c0f 206.9px,#009c0c 217.2px,#059c09 227.6px,#1c9c02 248.2px,#7d9c00 331px)"></i>
<i style="left:3px;top:174px;width:334px;background:linear-gradient(90deg,#008c30 0px,#009c29 83.5px,#009c19 167px,#009c0f 208.8px,#009c0c 219.2px,#089c09 229.6px,#209c03 250.5px,#829c00 334px)"></i>
<i style="left:3px;top:176px;width:336px;background:linear-gradient(90deg,#008d31 0px,#009c2a 84px,#009c1a 168px,#009c10 210px,#009c0d 220.5px,#0a9c0a 231px,#229c03 252px,#879c00 336px)"></i>
<i style="left:3px;top:178px;width:338px;background:linear-gradient(90deg,#008d32 0px,#009730 42.2px,#009c2b 84.5px,#009c1b 169px,#009c11 211.2px,#009c0e 221.8px,#0d9c0b 232.4px,#259c04 253.5px,#8b9c00 338px)"></i>
<i style="left:3px;top:180px;width:341px;background:linear-gradient(90deg,#008d33 0px,#009831 42.6px,#009c2c 85.2px,#009c1b 170.5px,#009c11 213.1px,#039c0e 223.8px,#109c0b 234.4px,#299c04 255.8px,#919c00 341px)"></i>
<i style="left:3px;top:182px;width:343px;background:linear-gradient(90deg,#008e34 0px,#009832 42.9px,#009c2c 85.8px,#009c1c 171.5px,#009c12 214.4px,#069c0f 225.1px,#139c0c 235.8px,#2b9c05 257.2px,#449c00 278.7px,#5e9c00 300.1px,#969c00 343px)"></i>
<i style="left:4px;top:184px;width:345px;background:linear-gradient(90deg,#008f35 0px,#009933 43.1px,#009c2d 86.2px,#009c1d 172.5px,#009c12 215.6px,#2f9c05 258.8px,#639c00 301.9px,#9c9b00 345px)"></i>
<i style="left:4px;top:186px;width:347px;background:linear-gradient(90deg,#008f36 0px,#009a34 43.4px,#009c2e 86.8px,#009c1d 173.5px,#009c13 216.9px,#329c05 260.2px,#669c00 303.6px,#839c00 325.3px,#919c00 336.2px,#9c9700 347px)"></i>
<i style="left:4px;top:188px;width:350px;background:linear-gradient(90deg,#008f37 0px,#009a35 43.8px,#009c2f 87.5px,#009c1e 175px,#019c13 218.8px,#369c06 262.5px,#6b9c00 306.2px,#889c00 328.1px,#979c00 339.1px,#9c9100 350px)"></i>
<i style="left:4px;top:190px;width:352px;background:linear-gradient(90deg,#009038 0px,#009b36 44px,#009c30 88px,#009c1f 176px,#049c14 220px,#389c06 264px,#6f9c00 308px,#8d9c00 330px,#9c9b00 341px,#9c8c00 352px)"></i>
<i style="left:4px;top:192px;width:355px;background:linear-gradient(90deg,#009039 0px,#009b37 44.4px,#009c30 88.8px,#009c1f 177.5px,#009c1a 199.7px,#009c17 210.8px,#009c16 216.3px,#079c15 221.9px,#3c9c07 266.2px,#579c00 288.4px,#749c00 310.6px,#939c00 332.8px,#9b9c00 338.4px,#9c9500 343.9px,#9c8700 355px)"></i>
<i style="left:4px;top:194px;width:357px;background:linear-gradient(90deg,#00913a 0px,#009c38 44.6px,#009c31 89.2px,#009c20 178.5px,#009c1b 200.8px,#009c18 212px,#0a9c15 223.1px,#3f9c07 267.8px,#5b9c00 290.1px,#789c00 312.4px,#979c00 334.7px,#9c9000 345.8px,#9c8300 357px)"></i>
<i style="left:5px;top:196px;width:359px;background:linear-gradient(90deg,#00913b 0px,#009c39 44.9px,#009c32 89.8px,#009c21 179.5px,#009c1c 201.9px,#009c19 213.2px,#0e9c16 224.4px,#449c08 269.2px,#609c00 291.7px,#7e9c00 314.1px,#9c9a00 336.6px,#9c7e00 359px)"></i>
<i style="left:5px;top:198px;width:361px;background:linear-gradient(90deg,#00923c 0px,#009c3a 45.1px,#009c33 90.2px,#009c22 180.5px,#009c1c 203.1px,#019c19 214.3px,#109c16 225.6px,#479c08 270.8px,#639c00 293.3px,#829c00 315.9px,#929c00 327.2px,#9a9c00 332.8px,#9c9500 338.4px,#9c7a00 361px)"></i>
<i style="left:5px;top:200px;width:363px;background:linear-gradient(90deg,#00923d 0px,#009c3b 45.4px,#009c34 90.8px,#009c22 181.5px,#009c1d 204.2px,#049c1a 215.5px,#129c17 226.9px,#4a9c09 272.2px,#679c00 294.9px,#869c00 317.6px,#979c00 329px,#9c9000 340.3px,#9c7700 363px)"></i>
<i style="left:5px;top:202px;width:366px;background:linear-gradient(90deg,#00933e 0px,#009c3b 45.8px,#009c35 91.5px,#009c23 183px,#009c1e 205.9px,#009c1c 211.6px,#079c1b 217.3px,#169c18 228.8px,#4e9c09 274.5px,#6c9c00 297.4px,#8c9c00 320.2px,#9c9a00 331.7px,#9c8b00 343.1px,#9c7200 366px)"></i>
<i style="left:5px;top:204px;width:368px;background:linear-gradient(90deg,#00933f 0px,#009c3c 46px,#009c35 92px,#009c24 184px,#009c1f 207px,#0a9c1c 218.5px,#189c19 230px,#519c0a 276px,#709c00 299px,#909c00 322px,#9c9600 333.5px,#9c8700 345px,#9c6f00 368px)"></i>
<i style="left:6px;top:206px;width:370px;background:linear-gradient(90deg,#009440 0px,#009c3d 46.2px,#009c36 92.5px,#009c25 185px,#009c1f 208.1px,#1c9c19 231.2px,#569c0a 277.5px,#759c01 300.6px,#979c00 323.8px,#9c9000 335.3px,#9c8100 346.9px,#9c6b00 370px)"></i>
<i style="left:6px;top:208px;width:372px;background:linear-gradient(90deg,#009441 0px,#009c3e 46.5px,#009c37 93px,#009c26 186px,#009c20 209.2px,#1f9c1a 232.5px,#599c0b 279px,#799c01 302.2px,#9b9c00 325.5px,#9c7e00 348.8px,#9c6800 372px)"></i>
<i style="left:6px;top:210px;width:375px;background:linear-gradient(90deg,#009542 0px,#009c3f 46.9px,#009c38 93.8px,#009c26 187.5px,#049c21 210.9px,#229c1b 234.4px,#5e9c0c 281.2px,#7f9c02 304.7px,#909c00 316.4px,#9c9600 328.1px,#9c7900 351.6px,#9c6400 375px)"></i>
<i style="left:6px;top:212px;width:377px;background:linear-gradient(90deg,#009543 0px,#009c40 47.1px,#009c39 94.2px,#009c27 188.5px,#009c25 200.3px,#069c22 212.1px,#249c1b 235.6px,#629c0c 282.8px,#839c02 306.3px,#949c00 318.1px,#9c9a00 324px,#9c9100 329.9px,#9c7500 353.4px,#9c6100 377px)"></i>
<i style="left:7px;top:214px;width:379px;background:linear-gradient(90deg,#009644 0px,#009c41 47.4px,#009c3a 94.8px,#009c28 189.5px,#009c25 201.3px,#0a9c22 213.2px,#289c1c 236.9px,#679c0d 284.2px,#899c03 307.9px,#9b9c00 319.8px,#9c8b00 331.6px,#9c5d00 379px)"></i>
<i style="left:7px;top:216px;width:381px;background:linear-gradient(90deg,#009645 0px,#009c42 47.6px,#009c3b 95.2px,#009c29 190.5px,#009c26 202.4px,#049c25 208.4px,#0d9c23 214.3px,#2b9c1d 238.1px,#6a9c0d 285.8px,#8d9c03 309.6px,#969c00 315.5px,#9c9700 321.5px,#9c8700 333.4px,#9c5b00 381px)"></i>
<i style="left:7px;top:218px;width:384px;background:linear-gradient(90deg,#009646 0px,#009c43 48px,#009c3c 96px,#009c2a 192px,#009c27 204px,#109c24 216px,#2f9c1e 240px,#6f9c0e 288px,#939c04 312px,#9c9b00 318px,#9c9200 324px,#9c8200 336px,#9c5700 384px)"></i>
<i style="left:7px;top:220px;width:386px;background:linear-gradient(90deg,#009748 0px,#009c44 48.2px,#009c3d 96.5px,#009c2b 193px,#019c28 205.1px,#129c25 217.1px,#319c1e 241.2px,#739c0f 289.5px,#989c04 313.6px,#9c7e00 337.8px,#9c5500 386px)"></i>
<i style="left:7px;top:222px;width:389px;background:linear-gradient(90deg,#009749 0px,#009c45 48.6px,#009c3e 97.2px,#009c2c 194.5px,#009c2a 200.6px,#059c29 206.7px,#159c26 218.8px,#359c1f 243.1px,#789c0f 291.8px,#9c9905 316.1px,#9c7900 340.4px,#9c5200 389px)"></i>
<i style="left:8px;top:224px;width:390px;background:linear-gradient(90deg,#00984a 0px,#009c3f 97.5px,#009c2c 195px,#009c2b 201.1px,#089c2a 207.2px,#189c27 219.4px,#389c20 243.8px,#7d9c10 292.5px,#909c0b 304.7px,#9a9c08 310.8px,#9c9405 316.9px,#9c7600 341.2px,#9c4f00 390px)"></i>
<i style="left:8px;top:226px;width:393px;background:linear-gradient(90deg,#00984b 0px,#009c40 98.2px,#009c2d 196.5px,#029c2c 202.6px,#0b9c2a 208.8px,#1c9c27 221.1px,#3c9c21 245.6px,#829c10 294.8px,#969c0b 307px,#9c9708 313.2px,#9c8e05 319.3px,#9c7100 343.9px,#9c4c00 393px)"></i>
<i style="left:8px;top:228px;width:395px;background:linear-gradient(90deg,#00984c 0px,#009c41 98.8px,#009c2e 197.5px,#3f9c22 246.9px,#879c11 296.2px,#9b9c0c 308.6px,#9c8a06 320.9px,#9c6e00 345.6px,#9c4a00 395px)"></i>
<i style="left:8px;top:230px;width:398px;background:linear-gradient(90deg,#00994e 0px,#009c42 99.5px,#009c2f 199px,#439c23 248.8px,#8d9c12 298.5px,#979c0f 304.7px,#9c960c 310.9px,#9c8506 323.4px,#9c6a00 348.2px,#9c4700 398px)"></i>
<i style="left:9px;top:232px;width:399px;background:linear-gradient(90deg,#00994f 0px,#009c43 99.8px,#029c30 199.5px,#929c13 299.2px,#9c9b10 305.5px,#9c910d 311.7px,#9c8106 324.2px,#9c6700 349.1px,#9c4500 399px)"></i>
<i style="left:9px;top:234px;width:402px;background:linear-gradient(90deg,#009a50 0px,#009c47 80.4px,#009c3a 160.8px,#009c36 180.9px,#009c34 191px,#059c31 201px,#3d9c27 241.2px,#779c1b 281.4px,#989c13 301.5px,#9c8209 321.6px,#9c6c00 341.7px,#9c5b00 361.8px,#9c4300 402px)"></i>
<i style="left:9px;top:236px;width:404px;background:linear-gradient(90deg,#009a51 0px,#009c48 80.8px,#009c3b 161.6px,#009c37 181.8px,#009c35 191.9px,#009c34 197px,#089c32 202px,#409c28 242.4px,#7c9c1c 282.8px,#9c9b14 303px,#9c7e09 323.2px,#9c6900 343.4px,#9c5800 363.6px,#9c4100 404px)"></i>
<i style="left:9px;top:238px;width:407px;background:linear-gradient(90deg,#009a53 0px,#009c49 81.4px,#009c3c 162.8px,#009c38 183.2px,#009c36 193.3px,#0b9c33 203.5px,#449c29 244.2px,#819c1c 284.9px,#929c19 295.1px,#9a9c17 300.2px,#9c9514 305.2px,#9c7909 325.6px,#9c6500 345.9px,#9c5500 366.3px,#9c3e00 407px)"></i>
<i style="left:10px;top:240px;width:408px;background:linear-gradient(90deg,#009b54 0px,#009c4a 81.6px,#009c3d 163.2px,#009c39 183.6px,#009c37 193.8px,#0e9c35 204px,#489c2a 244.8px,#869c1d 285.6px,#979c1a 295.8px,#9c9014 306px,#9c750a 326.4px,#9c6201 346.8px,#9c5200 367.2px,#9c3c00 408px)"></i>
<i style="left:10px;top:242px;width:410px;background:linear-gradient(90deg,#009b55 0px,#009c4c 82px,#009c3e 164px,#009c3a 184.5px,#019c38 194.8px,#119c36 205px,#4b9c2b 246px,#8a9c1e 287px,#9c9b1b 297.2px,#9c8b14 307.5px,#9c720a 328px,#9c5f01 348.5px,#9c5000 369px,#9c3a00 410px)"></i>
<i style="left:10px;top:244px;width:413px;background:linear-gradient(90deg,#009c57 0px,#009c4d 82.6px,#009c3f 165.2px,#009c3b 185.8px,#009c3a 191px,#059c39 196.2px,#149c37 206.5px,#4f9c2c 247.8px,#909c1f 289.1px,#999c1d 294.3px,#9c951a 299.4px,#9c8614 309.8px,#9c6e0a 330.4px,#9c4d00 371.7px,#9c3800 413px)"></i>
<i style="left:11px;top:246px;width:414px;background:linear-gradient(90deg,#009c58 0px,#009c4e 82.8px,#009c41 165.6px,#009c3c 186.3px,#009c3b 191.5px,#089c3a 196.7px,#179c38 207px,#539c2d 248.4px,#969c20 289.8px,#9c901a 300.2px,#9c8114 310.5px,#9c6a0a 331.2px,#9c4b00 372.6px,#9c3600 414px)"></i>
<i style="left:11px;top:248px;width:417px;background:linear-gradient(90deg,#009c59 0px,#009c4f 83.4px,#009c42 166.8px,#009c3e 187.7px,#0b9c3b 198.1px,#1b9c39 208.5px,#589c2f 250.2px,#9c9b21 291.9px,#9c7d14 312.8px,#9c660a 333.6px,#9c4800 375.3px,#9b3400 417px)"></i>
<i style="left:11px;top:250px;width:419px;background:linear-gradient(90deg,#009c5a 0px,#009c50 83.8px,#009c43 167.6px,#009c3f 188.5px,#1d9c3a 209.5px,#5b9c30 251.4px,#7d9c2a 272.4px,#8e9c26 282.8px,#989c24 288.1px,#9c9621 293.3px,#9c7914 314.2px,#9c630b 335.2px,#9c4600 377.1px,#9a3200 419px)"></i>
<i style="left:12px;top:252px;width:421px;background:linear-gradient(90deg,#009c5b 0px,#009c51 84.2px,#009c44 168.4px,#019c40 189.5px,#219c3b 210.5px,#609c31 252.6px,#839c2a 273.6px,#959c27 284.2px,#9c9924 289.4px,#9c9021 294.7px,#9c7414 315.8px,#9c5f0a 336.8px,#9c4300 378.9px,#982f00 421px)"></i>
<i style="left:12px;top:254px;width:423px;background:linear-gradient(90deg,#009c5c 0px,#009c53 84.6px,#009c45 169.2px,#049c41 190.3px,#249c3d 211.5px,#649c32 253.8px,#879c2c 274.9px,#9a9c28 285.5px,#9c8c21 296.1px,#9c7014 317.2px,#9c5c0b 338.4px,#9c4100 380.7px,#9c3700 401.8px,#972d00 423px)"></i>
<i style="left:12px;top:256px;width:426px;background:linear-gradient(90deg,#009c5e 0px,#009c54 85.2px,#009c47 170.4px,#009c45 181.1px,#009c44 186.4px,#079c43 191.7px,#279c3e 213px,#699c33 255.6px,#8d9c2d 276.9px,#969c2b 282.2px,#9c9728 287.5px,#9c8620 298.2px,#9c6c14 319.5px,#9c590b 340.8px,#9c3e00 383.4px,#9c3500 404.7px,#952b00 426px)"></i>
<i style="left:13px;top:258px;width:427px;background:linear-gradient(90deg,#009c5f 0px,#009c55 85.4px,#009c48 170.8px,#009c46 181.5px,#029c45 186.8px,#0b9c44 192.2px,#2b9c3f 213.5px,#6e9c35 256.2px,#929c2e 277.6px,#9c9b2c 282.9px,#9c9228 288.2px,#9c8220 298.9px,#9c560b 341.6px,#9c3c00 384.3px,#9c3300 405.7px,#942900 427px)"></i>
<i style="left:13px;top:260px;width:430px;background:linear-gradient(90deg,#009c60 0px,#009c57 86px,#009c49 172px,#009c47 182.8px,#0e9c45 193.5px,#2f9c41 215px,#739c36 258px,#999c2f 279.5px,#9c7d20 301px,#9c530b 344px,#9c3a00 387px,#9c3100 408.5px,#922700 430px)"></i>
<i style="left:13px;top:262px;width:432px;background:linear-gradient(90deg,#009c61 0px,#009c58 86.4px,#009c4b 172.8px,#009c49 183.6px,#119c47 194.4px,#319c42 216px,#779c37 259.2px,#9c9a30 280.8px,#9c7920 302.4px,#9c500b 345.6px,#9c3800 388.8px,#9b2f00 410.4px,#912500 432px)"></i>
<i style="left:14px;top:264px;width:434px;background:linear-gradient(90deg,#009c62 0px,#009c59 86.8px,#009c4c 173.6px,#039c4a 184.4px,#159c48 195.3px,#369c43 217px,#7d9c39 260.4px,#909c35 271.2px,#9a9c34 276.7px,#9c932f 282.1px,#9c7420 303.8px,#9c4d0b 347.2px,#9c3600 390.6px,#992c00 412.3px,#8f2300 434px)"></i>
<i style="left:14px;top:266px;width:437px;background:linear-gradient(90deg,#009c64 0px,#009c5b 87.4px,#009c4e 174.8px,#009c4d 180.3px,#079c4c 185.7px,#189c4a 196.7px,#3a9c45 218.5px,#829c3a 262.2px,#969c37 273.1px,#9c9633 278.6px,#9c8d2e 284.1px,#9c701f 305.9px,#9c4a0b 349.6px,#9c3400 393.3px,#982a00 415.2px,#8e2100 437px)"></i>
<i style="left:14px;top:268px;width:439px;background:linear-gradient(90deg,#009c65 0px,#009c5c 87.8px,#009c4f 175.6px,#009c4e 181.1px,#099c4d 186.6px,#1b9c4b 197.5px,#3d9c47 219.5px,#879c3c 263.4px,#9c9c38 274.4px,#9c892e 285.4px,#9c6c1f 307.3px,#9c480c 351.2px,#9c3200 395.1px,#8d1f00 439px)"></i>
<i style="left:15px;top:270px;width:441px;background:linear-gradient(90deg,#009c66 0px,#009c5d 88.2px,#009c51 176.4px,#049c50 181.9px,#0d9c4f 187.4px,#1f9c4c 198.5px,#429c48 220.5px,#8e9c3d 264.6px,#989c3b 270.1px,#9c9537 275.6px,#9c832e 286.6px,#9c681f 308.7px,#9c450b 352.8px,#9c3000 396.9px,#8b1d00 441px)"></i>
<i style="left:15px;top:272px;width:443px;background:linear-gradient(90deg,#009c68 0px,#009c5f 88.6px,#009c52 177.2px,#459c4a 221.5px,#929c3f 265.8px,#9c9a3c 271.3px,#9c9037 276.9px,#9c7f2d 287.9px,#9c651f 310.1px,#9c430c 354.4px,#9c2e00 398.7px,#8a1c00 443px)"></i>
<i style="left:16px;top:274px;width:445px;background:linear-gradient(90deg,#009c69 0px,#009c60 89px,#019c54 178px,#999c40 267px,#9c792d 289.2px,#9c601f 311.5px,#9c400c 356px,#9c2c00 400.5px,#881a00 445px)"></i>
<i style="left:16px;top:276px;width:448px;background:linear-gradient(90deg,#009c6a 0px,#009c62 89.6px,#009c5c 134.4px,#009c59 156.8px,#009c57 168px,#009c56 173.6px,#059c55 179.2px,#4e9c4d 224px,#759c48 246.4px,#8a9c45 257.6px,#959c43 263.2px,#9c9740 268.8px,#9c752c 291.2px,#9c5d1e 313.6px,#9c3e0c 358.4px,#9b2a00 403.2px,#861800 448px)"></i>
<i style="left:16px;top:278px;width:450px;background:linear-gradient(90deg,#009c6c 0px,#009c63 90px,#009c5e 135px,#009c5b 157.5px,#009c59 168.8px,#009c58 174.4px,#079c57 180px,#529c4f 225px,#7a9c49 247.5px,#8f9c47 258.8px,#9a9c45 264.4px,#9c923f 270px,#9c712c 292.5px,#9c5a1e 315px,#9c3c0c 360px,#9a2800 405px,#851700 450px)"></i>
<i style="left:17px;top:280px;width:451px;background:linear-gradient(90deg,#009c6d 0px,#009c65 90.2px,#009c5f 135.3px,#009c5c 157.9px,#009c5b 169.1px,#019c5a 174.8px,#0b9c59 180.4px,#569c50 225.5px,#7f9c4b 248px,#959c48 259.3px,#9c9745 265px,#9c8d3f 270.6px,#9c6d2c 293.1px,#9c571e 315.7px,#9c3a0c 360.8px,#982600 405.9px,#841600 451px)"></i>
<i style="left:17px;top:282px;width:454px;background:linear-gradient(90deg,#009c6f 0px,#009c67 90.8px,#009c61 136.2px,#009c5e 158.9px,#009c5c 170.2px,#049c5b 175.9px,#0e9c5a 181.6px,#5b9c52 227px,#859c4d 249.7px,#9b9c4a 261.1px,#9c873e 272.4px,#9c692b 295.1px,#9c541e 317.8px,#9c370c 363.2px,#9c2d05 385.9px,#972400 408.6px,#821400 454px)"></i>
<i style="left:18px;top:284px;width:455px;background:linear-gradient(90deg,#009c70 0px,#009c68 91px,#009c63 136.5px,#009c60 159.2px,#009c5e 170.6px,#129c5c 182px,#5f9c54 227.5px,#8a9c4f 250.2px,#969c4d 255.9px,#9c9649 261.6px,#9c823d 273px,#9c652b 295.8px,#9c511e 318.5px,#9c350c 364px,#9c2b06 386.8px,#962200 409.5px,#811300 455px)"></i>
<i style="left:18px;top:286px;width:457px;background:linear-gradient(90deg,#009c72 0px,#009c6a 91.4px,#009c65 137.1px,#009c62 159.9px,#009c60 171.4px,#159c5e 182.8px,#639c56 228.5px,#8f9c51 251.3px,#9b9c50 257.1px,#9c9149 262.8px,#9c7e3d 274.2px,#9c622b 297.1px,#9c4e1e 319.9px,#9c330c 365.6px,#9c2a06 388.4px,#952000 411.3px,#801200 457px)"></i>
<i style="left:19px;top:288px;width:458px;background:linear-gradient(90deg,#009c73 0px,#009c6b 91.6px,#009c66 137.4px,#009c63 160.3px,#049c62 171.8px,#189c60 183.2px,#689c58 229px,#959c53 251.9px,#9c964f 257.6px,#9c8c48 263.3px,#9c7a3c 274.8px,#9c5f2b 297.7px,#9c4b1e 320.6px,#9c310d 366.4px,#9c2806 389.3px,#931f00 412.2px,#7f1100 458px)"></i>
<i style="left:19px;top:290px;width:460px;background:linear-gradient(90deg,#009c75 0px,#009c6d 92px,#009c68 138px,#009c65 161px,#009c65 166.8px,#079c64 172.5px,#1b9c62 184px,#6c9c5a 230px,#9a9c55 253px,#9c763c 276px,#9c5c2b 299px,#9c491e 322px,#9c300d 368px,#9c2706 391px,#921d00 414px,#7e1000 460px)"></i>
<i style="left:20px;top:292px;width:462px;background:linear-gradient(90deg,#009c76 0px,#009c6f 92.4px,#009c6a 138.6px,#009c67 161.7px,#009c66 167.5px,#0b9c66 173.2px,#209c64 184.8px,#739c5c 231px,#8a9c5a 242.5px,#969c58 248.3px,#9c9554 254.1px,#9c703b 277.2px,#9c461e 323.4px,#9c2d0d 369.6px,#9b2506 392.7px,#911b00 415.8px,#7c0e00 462px)"></i>
<i style="left:20px;top:294px;width:464px;background:linear-gradient(90deg,#009c78 0px,#009c71 92.8px,#009c6c 139.2px,#009c69 162.4px,#039c68 168.2px,#0e9c68 174px,#229c66 185.6px,#779c5e 232px,#8f9c5c 243.6px,#9b9c5b 249.4px,#9c9053 255.2px,#9c6d3b 278.4px,#9c431e 324.8px,#9c2c0d 371.2px,#9a2306 394.4px,#901a01 417.6px,#7b0d00 464px)"></i>
<i style="left:21px;top:296px;width:465px;background:linear-gradient(90deg,#009c79 0px,#009c72 93px,#009c6e 139.5px,#009c6b 162.8px,#269c68 186px,#7d9c61 232.5px,#959c5e 244.1px,#9c965a 249.9px,#9c8b52 255.8px,#9c693a 279px,#9c411e 325.5px,#9c2a0d 372px,#992107 395.2px,#8e1801 418.5px,#790c00 465px)"></i>
<i style="left:21px;top:298px;width:467px;background:linear-gradient(90deg,#009c7b 0px,#009c74 93.4px,#009c70 140.1px,#009c6d 163.4px,#299c6a 186.8px,#819c63 233.5px,#9a9c61 245.2px,#9c8651 256.8px,#9c653a 280.2px,#9c3f1e 326.9px,#9c280d 373.6px,#981f07 396.9px,#8d1701 420.3px,#780b00 467px)"></i>
<i style="left:22px;top:300px;width:468px;background:linear-gradient(90deg,#009c7d 0px,#009c76 93.6px,#009c72 140.4px,#029c6f 163.8px,#2d9c6d 187.2px,#879c65 234px,#949c64 239.8px,#9c9660 245.7px,#9c8150 257.4px,#9c6239 280.8px,#9c3c1e 327.6px,#9c270d 374.4px,#971e07 397.8px,#8c1601 421.2px,#770a00 468px)"></i>
<i style="left:23px;top:302px;width:469px;background:linear-gradient(90deg,#009c7e 0px,#009c78 93.8px,#009c74 140.7px,#009c73 152.4px,#009c72 158.3px,#069c72 164.1px,#319c6f 187.6px,#8d9c68 234.5px,#9a9c67 240.4px,#9c905e 246.2px,#9c7c4f 258px,#9c5e39 281.4px,#9c3a1e 328.3px,#9c250e 375.2px,#961c07 398.7px,#8b1401 422.1px,#760900 469px)"></i>
<i style="left:23px;top:304px;width:472px;background:linear-gradient(90deg,#009c80 0px,#009c7a 94.4px,#009c76 141.6px,#009c75 153.4px,#009c74 159.3px,#0a9c74 165.2px,#359c71 188.8px,#949c6a 236px,#9c9666 241.9px,#9c8a5d 247.8px,#9c774e 259.6px,#9c5a38 283.2px,#9c381e 330.4px,#9c230e 377.6px,#8a1302 424.8px,#740800 472px)"></i>
<i style="left:24px;top:306px;width:473px;background:linear-gradient(90deg,#009c82 0px,#009c7c 94.6px,#009c78 141.9px,#009c77 153.7px,#029c77 159.6px,#0e9c76 165.6px,#3a9c74 189.2px,#9a9c6d 236.5px,#9c724d 260.2px,#9c5738 283.8px,#9c361e 331.1px,#9c220e 378.4px,#881102 425.7px,#730700 473px)"></i>
<i style="left:24px;top:308px;width:475px;background:linear-gradient(90deg,#009c83 0px,#009c7e 95px,#009c7b 142.5px,#009c7a 154.4px,#059c79 160.3px,#119c79 166.2px,#3d9c76 190px,#6c9c73 213.8px,#859c72 225.6px,#929c71 231.6px,#9c976d 237.5px,#9c6e4d 261.2px,#9c5438 285px,#9c341e 332.5px,#9c200e 380px,#871002 427.5px,#710600 475px)"></i>
<i style="left:25px;top:310px;width:476px;background:linear-gradient(90deg,#009c85 0px,#009c80 95.2px,#009c7d 142.8px,#009c7c 154.7px,#159c7b 166.6px,#429c79 190.4px,#729c76 214.2px,#8b9c74 226.1px,#999c74 232px,#9c916b 238px,#9c6a4c 261.8px,#9c5137 285.6px,#9c311e 333.2px,#9c1e0e 380.8px,#860f02 428.4px,#6f0500 476px)"></i>
<i style="left:26px;top:312px;width:477px;background:linear-gradient(90deg,#009c87 0px,#009c82 95.4px,#009c7f 143.1px,#009c7e 155px,#199c7d 166.9px,#469c7b 190.8px,#779c79 214.7px,#929c77 226.6px,#9c9773 232.5px,#9c8b69 238.5px,#9c664b 262.3px,#9c4e37 286.2px,#9c2f1e 333.9px,#9b1d0e 381.6px,#850e02 429.3px,#6e0400 477px)"></i>
<i style="left:26px;top:314px;width:479px;background:linear-gradient(90deg,#009c89 0px,#009c85 95.8px,#009c82 143.7px,#039c81 155.7px,#1b9c80 167.6px,#4a9c7e 191.6px,#7c9c7c 215.5px,#979c7a 227.5px,#9c9272 233.5px,#9c8668 239.5px,#9c634b 263.5px,#9c4b37 287.4px,#9c2e1e 335.3px,#9a1b0e 383.2px,#840d02 431.1px,#6c0400 479px)"></i>
<i style="left:27px;top:316px;width:481px;background:linear-gradient(90deg,#009c8b 0px,#009c88 80.2px,#009c86 120.2px,#009c85 140.3px,#009c84 150.3px,#069c84 155.3px,#119c83 160.3px,#609c80 200.4px,#8d9c7e 220.5px,#989c7e 225.5px,#9c9377 230.5px,#9c8066 240.5px,#9c634d 260.5px,#9c4e3c 280.6px,#9c3324 320.7px,#9c2215 360.8px,#9a1b0f 380.8px,#911409 400.8px,#7f0a01 440.9px,#6a0300 481px)"></i>
<i style="left:28px;top:318px;width:482px;background:linear-gradient(90deg,#009c8d 0px,#009c8a 80.3px,#009c88 120.5px,#009c87 140.6px,#009c87 150.6px,#159c86 160.7px,#669c83 200.8px,#939c82 220.9px,#9c987e 225.9px,#9c8d74 231px,#9c7a64 241px,#9c5f4c 261.1px,#9c4b3b 281.2px,#9c3124 321.3px,#9c2015 361.5px,#901209 401.7px,#7d0901 441.8px,#680200 482px)"></i>
<i style="left:28px;top:320px;width:484px;background:linear-gradient(90deg,#009c8f 0px,#009c8c 80.7px,#009c8b 121px,#009c8a 141.2px,#029c89 151.2px,#189c89 161.3px,#6a9c86 201.7px,#999c85 221.8px,#9c7664 242px,#9c5b4c 262.2px,#9c493b 282.3px,#9c2f24 322.7px,#9c1e15 363px,#98180f 383.2px,#8f110a 403.3px,#7c0801 443.7px,#670100 484px)"></i>
<i style="left:29px;top:322px;width:485px;background:linear-gradient(90deg,#009c91 0px,#009c8f 80.8px,#009c8d 121.2px,#009c8d 141.5px,#009c8c 146.5px,#079c8c 151.6px,#1c9c8c 161.7px,#709c8a 202.1px,#879c89 212.2px,#949c89 217.2px,#9c9785 222.3px,#9c7162 242.5px,#9c584b 262.7px,#9c463b 282.9px,#9c2d24 323.3px,#9c1d15 363.8px,#8d100a 404.2px,#7b0701 444.6px,#650000 485px)"></i>
<i style="left:30px;top:324px;width:486px;background:linear-gradient(90deg,#009c93 0px,#009c91 81px,#009c90 121.5px,#009c8f 141.8px,#009c8f 146.8px,#0b9c8f 151.9px,#209c8f 162px,#769c8d 202.5px,#8e9c8c 212.6px,#9b9c8c 217.7px,#9c9182 222.8px,#9c6c61 243px,#9c544a 263.2px,#9c433a 283.5px,#9c2b24 324px,#9c1b15 364.5px,#8c0e0a 405px,#640000 486px)"></i>
<i style="left:30px;top:326px;width:488px;background:linear-gradient(90deg,#009c95 0px,#009c93 81.3px,#009c93 122px,#009c92 142.3px,#039c92 147.4px,#0e9c92 152.5px,#239c92 162.7px,#7b9c90 203.3px,#949c90 213.5px,#9c978b 218.6px,#9c8b81 223.7px,#9c6960 244px,#9c514a 264.3px,#9c403a 284.7px,#9c2924 325.3px,#9c1a16 366px,#8b0d0a 406.7px,#790502 447.3px,#620000 488px)"></i>
<i style="left:31px;top:328px;width:489px;background:linear-gradient(90deg,#009c97 0px,#009c96 81.5px,#009c95 122.2px,#009c95 142.6px,#289c95 163px,#829c94 203.8px,#9b9c94 213.9px,#9c857e 224.1px,#9c645f 244.5px,#9c4e49 264.9px,#9c3e3a 285.2px,#9c2724 326px,#9c1816 366.8px,#8a0c0a 407.5px,#610000 489px)"></i>
<i style="left:32px;top:330px;width:491px;background:linear-gradient(90deg,#009c99 0px,#009c99 81.8px,#009c98 122.8px,#019c98 143.2px,#2d9c98 163.7px,#899c98 204.6px,#969c98 209.7px,#9c9490 214.8px,#9c7e7b 225px,#9c605d 245.5px,#9c4a48 266px,#9c3b39 286.4px,#9c2524 327.3px,#9b1715 368.2px,#890a0a 409.2px,#760302 450.1px,#5e0000 491px)"></i>
<i style="left:32px;top:332px;width:493px;background:linear-gradient(90deg,#009c9b 0px,#009c9b 82.2px,#009c9b 123.2px,#049c9b 143.8px,#309c9c 164.3px,#8f9b9c 205.4px,#9c9b9b 210.6px,#9c8e8f 215.7px,#9c7a7a 226px,#9c5c5c 246.5px,#9c3839 287.6px,#9c2324 328.7px,#9a1515 369.8px,#88090a 410.8px,#5d0000 493px)"></i>
<i style="left:33px;top:334px;width:494px;background:linear-gradient(90deg,#009a9c 0px,#00999c 82.3px,#00999c 123.5px,#00999c 133.8px,#00999c 138.9px,#08989c 144.1px,#34989c 164.7px,#92979c 205.8px,#9c9498 211px,#9c888c 216.1px,#9c7478 226.4px,#9c585b 247px,#9c3638 288.2px,#9c2224 329.3px,#991315 370.5px,#86080a 411.7px,#740102 452.8px,#5b0000 494px)"></i>
<i style="left:34px;top:336px;width:495px;background:linear-gradient(90deg,#00989c 0px,#00979c 82.5px,#00969c 123.8px,#00969c 134.1px,#01959c 139.2px,#0d959c 144.4px,#38959c 165px,#96949c 206.2px,#9c8d95 211.4px,#9c8289 216.6px,#9c6f76 226.9px,#9c545a 247.5px,#9c3438 288.8px,#9c2024 330px,#981215 371.2px,#85070a 412.5px,#730002 453.8px,#5a0000 495px)"></i>
<i style="left:34px;top:338px;width:497px;background:linear-gradient(90deg,#00959c 0px,#00949c 82.8px,#00939c 124.2px,#00929c 134.6px,#04929c 139.8px,#0f929c 145px,#3a919c 165.7px,#97909c 207.1px,#9c8793 212.3px,#9c7d88 217.4px,#9c6b75 227.8px,#9c515a 248.5px,#9c3138 289.9px,#9c1e24 331.3px,#9c171c 352px,#971015 372.8px,#84060a 414.2px,#720002 455.6px,#580000 497px)"></i>
<i style="left:35px;top:340px;width:499px;background:linear-gradient(90deg,#00939c 0px,#00919c 83.2px,#00909c 124.8px,#008f9c 135.1px,#148f9c 145.5px,#3e8e9c 166.3px,#9c8c9b 207.9px,#9c6673 228.7px,#9c4d58 249.5px,#9c2f37 291.1px,#9c1c23 332.7px,#960f15 374.2px,#83050a 415.8px,#700002 457.4px,#560000 499px)"></i>
<i style="left:36px;top:342px;width:500px;background:linear-gradient(90deg,#00919c 0px,#008f9c 83.3px,#008d9c 125px,#018c9c 135.4px,#178c9c 145.8px,#418b9c 166.7px,#9c8598 208.3px,#9c6171 229.2px,#9c4a57 250px,#9c2d37 291.7px,#9c1b23 333.3px,#9c141c 354.2px,#950d15 375px,#82040a 416.7px,#6f0002 458.3px,#550000 500px)"></i>
<i style="left:36px;top:344px;width:502px;background:linear-gradient(90deg,#008f9c 0px,#008c9c 83.7px,#008a9c 125.5px,#048a9c 136px,#1a899c 146.4px,#43889c 167.3px,#70869c 188.2px,#88859c 198.7px,#94859c 203.9px,#9c8097 209.2px,#9c5e70 230.1px,#9c4757 251px,#9c2b37 292.8px,#9c1923 334.7px,#9c121c 355.6px,#940c15 376.5px,#81030a 418.3px,#6e0002 460.2px,#530000 502px)"></i>
<i style="left:37px;top:346px;width:503px;background:linear-gradient(90deg,#008d9c 0px,#008a9c 83.8px,#00879c 125.8px,#00879c 131px,#08879c 136.2px,#1d869c 146.7px,#47849c 167.7px,#73839c 188.6px,#8b829c 199.1px,#97819c 204.3px,#9c7a94 209.6px,#9c5a6f 230.5px,#9c4456 251.5px,#9c2836 293.4px,#9c1723 335.3px,#9c111c 356.3px,#920b15 377.2px,#7f010a 419.2px,#6c0003 461.1px,#520000 503px)"></i>
<i style="left:38px;top:348px;width:505px;background:linear-gradient(90deg,#008b9c 0px,#00879c 84.2px,#00849c 126.2px,#01849c 131.5px,#0d849c 136.8px,#21839c 147.3px,#4b819c 168.3px,#777f9c 189.4px,#8f7e9c 199.9px,#9b7d9c 205.2px,#9c7390 210.4px,#9c556c 231.5px,#9c4054 252.5px,#9c2636 294.6px,#9c1623 336.7px,#9b0f1c 357.7px,#910914 378.8px,#7e000a 420.8px,#500000 505px)"></i>
<i style="left:38px;top:350px;width:507px;background:linear-gradient(90deg,#00899c 0px,#00849c 84.5px,#00829c 126.8px,#04819c 132px,#0f819c 137.3px,#23809c 147.9px,#4d7e9c 169px,#797c9c 190.1px,#917a9c 200.7px,#9c799a 206px,#9c6f8f 211.2px,#9c526c 232.4px,#9c3e54 253.5px,#9c2436 295.8px,#9c1423 338px,#9a0e1b 359.1px,#900814 380.2px,#7d000a 422.5px,#4e0000 507px)"></i>
<i style="left:39px;top:352px;width:508px;background:linear-gradient(90deg,#00879c 0px,#00829c 84.7px,#007f9c 127px,#507b9c 169.3px,#7c789c 190.5px,#94779c 201.1px,#9c7397 206.4px,#9c6a8c 211.7px,#9c4e6a 232.8px,#9c3b53 254px,#9c2235 296.3px,#9c1223 338.7px,#990c1b 359.8px,#8f0714 381px,#7c000a 423.3px,#4d0000 508px)"></i>
<i style="left:40px;top:354px;width:509px;background:linear-gradient(90deg,#00859c 0px,#00809c 84.8px,#007c9c 127.2px,#53789c 169.7px,#7f759c 190.9px,#97739c 201.5px,#9c6d94 206.8px,#9c658a 212.1px,#9c4a69 233.3px,#9c3852 254.5px,#9c2035 296.9px,#9c1123 339.3px,#970b1b 360.5px,#8e0514 381.8px,#7b000a 424.2px,#4d0000 509px)"></i>
<i style="left:40px;top:356px;width:512px;background:linear-gradient(90deg,#00839c 0px,#007d9c 85.3px,#04799c 128px,#55759c 170.7px,#81729c 192px,#99709c 202.7px,#9c6088 213.3px,#9c4768 234.7px,#9c3552 256px,#9c1e35 298.7px,#9c0f23 341.3px,#8d0414 384px,#790009 426.7px,#4c0000 512px)"></i>
<i style="left:41px;top:358px;width:513px;background:linear-gradient(90deg,#00819c 0px,#007b9c 85.5px,#00799c 106.9px,#00789c 117.6px,#00779c 122.9px,#08779c 128.2px,#58719c 171px,#846e9c 192.4px,#9c6c9b 203.1px,#9c5c86 213.8px,#9c4366 235.1px,#9c3351 256.5px,#9c1c35 299.2px,#9c0e23 342px,#8b0314 384.8px,#780009 427.5px,#4c0000 513px)"></i>
<i style="left:41px;top:360px;width:515px;background:linear-gradient(90deg,#007f9c 0px,#00789c 85.8px,#00769c 107.3px,#00759c 118px,#00759c 123.4px,#0a749c 128.8px,#5a6e9c 171.7px,#866b9c 193.1px,#9c689a 203.9px,#9c5885 214.6px,#9c4166 236px,#9c3051 257.5px,#9c1b34 300.4px,#9c0c23 343.3px,#8a0114 386.2px,#770009 429.2px,#4b0000 515px)"></i>
<i style="left:42px;top:362px;width:516px;background:linear-gradient(90deg,#007d9c 0px,#00769c 86px,#00749c 107.5px,#00739c 118.2px,#03729c 123.6px,#0d719c 129px,#5d6b9c 172px,#89689c 193.5px,#95679c 198.9px,#9c6397 204.2px,#9c5482 215px,#9c3d65 236.5px,#9c2e50 258px,#9c1934 301px,#9c0b23 344px,#890013 387px,#760009 430px,#5e0003 473px,#510000 494.5px,#4b0000 516px)"></i>
<i style="left:43px;top:364px;width:515px;background:linear-gradient(90deg,#007b9c 0px,#00749c 85.8px,#00719c 107.3px,#00709c 118px,#066f9c 123.4px,#106f9c 128.8px,#5f689c 171.7px,#8a659c 193.1px,#96649c 198.5px,#9c5f96 203.9px,#9c5182 214.6px,#9c3b65 236px,#9c2c50 257.5px,#9c1735 300.4px,#9c0a23 343.3px,#890014 386.2px,#76000a 429.2px,#5e0003 472.1px,#510001 493.5px,#4b0000 515px)"></i>
<i style="left:44px;top:366px;width:512px;background:linear-gradient(90deg,#00799c 0px,#00719c 85.3px,#006f9c 106.7px,#006e9c 117.3px,#116c9c 128px,#5f669c 170.7px,#8a629c 192px,#95619c 197.3px,#9c5d96 202.7px,#9c4e83 213.3px,#9c3a66 234.7px,#9c2b51 256px,#9c1735 298.7px,#9c0924 341.3px,#890014 384px,#76000a 426.7px,#5f0004 469.3px,#4b0000 512px)"></i>
<i style="left:44px;top:368px;width:507px;background:linear-gradient(90deg,#00779c 0px,#006f9c 84.5px,#006d9c 105.6px,#006b9c 116.2px,#106a9c 126.8px,#5c639c 169px,#865f9c 190.1px,#9c5d9b 200.7px,#9c4f87 211.2px,#9c3a69 232.4px,#9c2b54 253.5px,#9c1637 295.8px,#9c0925 338px,#8b0016 380.2px,#77000b 422.5px,#4c0000 507px)"></i>
<i style="left:45px;top:370px;width:501px;background:linear-gradient(90deg,#00759c 0px,#006d9c 83.5px,#006a9c 104.4px,#00699c 114.8px,#10689c 125.2px,#5b619c 167px,#835d9c 187.9px,#995b9c 198.3px,#9c4e8a 208.8px,#9c396b 229.6px,#9c2a56 250.5px,#9c1639 292.2px,#9c0927 334px,#8c0017 375.8px,#79000d 417.5px,#4d0001 501px)"></i>
<i style="left:46px;top:372px;width:495px;background:linear-gradient(90deg,#00739c 0px,#006b9c 82.5px,#00689c 103.1px,#00679c 113.4px,#11659c 123.8px,#595e9c 165px,#815a9c 185.6px,#96589c 195.9px,#9c5496 201.1px,#9c4d8d 206.2px,#9c396e 226.9px,#9c2a58 247.5px,#9c163b 288.8px,#9c0829 330px,#8d0019 371.2px,#7b000e 412.5px,#4e0001 495px)"></i>
<i style="left:46px;top:374px;width:491px;background:linear-gradient(90deg,#00719c 0px,#00699c 81.8px,#00669c 102.3px,#00659c 112.5px,#10639c 122.8px,#575c9c 163.7px,#7e589c 184.1px,#92569c 194.4px,#9c539a 199.5px,#9c4d90 204.6px,#9c3871 225px,#9c295a 245.5px,#9c163d 286.4px,#9c082a 327.3px,#980322 347.8px,#8e001a 368.2px,#7c000f 409.2px,#4f0002 491px)"></i>
<i style="left:47px;top:376px;width:485px;background:linear-gradient(90deg,#006f9c 0px,#00679c 80.8px,#00649c 101px,#00629c 111.1px,#10619c 121.2px,#565a9c 161.7px,#7b559c 181.9px,#8f539c 192px,#9a529c 197px,#9c4c93 202.1px,#9c3873 222.3px,#9c295d 242.5px,#9c153f 282.9px,#9c082c 323.3px,#90001c 363.8px,#7d0010 404.2px,#6b0008 444.6px,#520003 485px)"></i>
<i style="left:48px;top:378px;width:479px;background:linear-gradient(90deg,#006d9c 0px,#00629c 95.8px,#00609c 107.8px,#05609c 113.8px,#105f9c 119.8px,#395a9c 143.7px,#91509c 191.6px,#9c4e9a 197.6px,#9c478f 203.6px,#9c3b7c 215.5px,#9c295f 239.5px,#9c123c 287.4px,#9c0327 335.3px,#860016 383.2px,#540003 479px)"></i>
<i style="left:48px;top:380px;width:474px;background:linear-gradient(90deg,#006c9c 0px,#00609c 94.8px,#005e9c 106.7px,#045d9c 112.6px,#0f5d9c 118.5px,#37589c 142.2px,#8d4e9c 189.6px,#984d9c 195.5px,#9c4793 201.4px,#9c3b7f 213.3px,#9c2962 237px,#9c123f 284.4px,#9c0329 331.8px,#870017 379.2px,#570004 474px)"></i>
<i style="left:49px;top:382px;width:468px;background:linear-gradient(90deg,#006a9c 0px,#005e9c 93.6px,#005c9c 105.3px,#055b9c 111.2px,#0f5a9c 117px,#36569c 140.4px,#8a4c9c 187.2px,#954a9c 193.1px,#9c4696 198.9px,#9c3a82 210.6px,#9c2865 234px,#9c1141 280.8px,#9c032b 327.6px,#890019 374.4px,#5a0005 468px)"></i>
<i style="left:50px;top:384px;width:462px;background:linear-gradient(90deg,#00689c 0px,#005c9c 92.4px,#005a9c 104px,#05599c 109.7px,#0f589c 115.5px,#35549c 138.6px,#874a9c 184.8px,#9c4699 196.3px,#9c3a85 207.9px,#9c2867 231px,#9c1143 277.2px,#9c022c 323.4px,#8a001a 369.6px,#75000e 415.8px,#5c0006 462px)"></i>
<i style="left:51px;top:386px;width:456px;background:linear-gradient(90deg,#00669c 0px,#005a9c 91.2px,#00589c 102.6px,#06579c 108.3px,#0f569c 114px,#35529c 136.8px,#84489c 182.4px,#9a449c 193.8px,#9c3988 205.2px,#9c276a 228px,#9c1145 273.6px,#9c022e 319.2px,#8c001c 364.8px,#5f0007 456px)"></i>
<i style="left:51px;top:388px;width:452px;background:linear-gradient(90deg,#00649c 0px,#00589c 90.4px,#00569c 101.7px,#05559c 107.3px,#0f549c 113px,#33509c 135.6px,#81459c 180.8px,#97429c 192.1px,#9c3e95 197.8px,#9c398b 203.4px,#9c276d 226px,#9c1047 271.2px,#9c0230 316.4px,#970026 339px,#8d001d 361.6px,#610008 452px)"></i>
<i style="left:52px;top:390px;width:446px;background:linear-gradient(90deg,#00629c 0px,#00569c 89.2px,#00549c 100.3px,#05539c 105.9px,#0f529c 111.5px,#334e9c 133.8px,#7f439c 178.4px,#94409c 189.6px,#9c3d99 195.1px,#9c388f 200.7px,#9c266f 223px,#9c1049 267.6px,#9c0132 312.2px,#980028 334.5px,#8e001f 356.8px,#640009 446px)"></i>
<i style="left:53px;top:392px;width:440px;background:linear-gradient(90deg,#00619c 0px,#00549c 88px,#00529c 99px,#0f509c 110px,#324c9c 132px,#7c419c 176px,#913e9c 187px,#9b3d9c 192.5px,#9c3792 198px,#9c2672 220px,#9c104b 264px,#9c0133 308px,#9a002a 330px,#900021 352px,#67000a 440px)"></i>
<i style="left:54px;top:394px;width:434px;background:linear-gradient(90deg,#005f9c 0px,#00529c 86.8px,#00509c 97.7px,#0f4e9c 108.5px,#314a9c 130.2px,#7a3f9c 173.6px,#8e3c9c 184.4px,#983b9c 189.9px,#9c3795 195.3px,#9c2575 217px,#9c0f4d 260.4px,#9c0135 303.8px,#9b002c 325.5px,#910023 347.2px,#6a000b 434px)"></i>
<i style="left:54px;top:396px;width:429px;background:linear-gradient(90deg,#005d9c 0px,#00519c 85.8px,#004f9c 96.5px,#054e9c 101.9px,#0e4d9c 107.2px,#30489c 128.7px,#763e9c 171.6px,#9c3799 193px,#9c2578 214.5px,#9c0f50 257.4px,#9c0037 300.3px,#9c002e 321.8px,#930025 343.2px,#6c000c 429px)"></i>
<i style="left:55px;top:398px;width:423px;background:linear-gradient(90deg,#005b9c 0px,#004f9c 84.6px,#004d9c 95.2px,#0e4b9c 105.8px,#2f469c 126.9px,#743c9c 169.2px,#9a359c 190.3px,#9c257b 211.5px,#9c0f52 253.8px,#9c0039 296.1px,#9c0030 317.2px,#940027 338.4px,#6e000d 423px)"></i>
<i style="left:56px;top:400px;width:417px;background:linear-gradient(90deg,#005a9c 0px,#004d9c 83.4px,#004b9c 93.8px,#0e499c 104.2px,#2f449c 125.1px,#723a9c 166.8px,#97349c 187.7px,#9c3097 192.9px,#9c2c8e 198.1px,#9c247e 208.5px,#9c0e54 250.2px,#9c003b 291.9px,#960029 333.6px,#70000f 417px)"></i>
<i style="left:56px;top:402px;width:413px;background:linear-gradient(90deg,#00589c 0px,#004b9c 82.6px,#00499c 92.9px,#0e479c 103.2px,#2d439c 123.9px,#6f389c 165.2px,#93329c 185.8px,#9c309a 191px,#9c2b91 196.2px,#9c2481 206.5px,#9c0e57 247.8px,#9c003d 289.1px,#97002a 330.4px,#710010 413px)"></i>
<i style="left:57px;top:404px;width:407px;background:linear-gradient(90deg,#00569c 0px,#00499c 81.4px,#00479c 91.6px,#0e459c 101.8px,#2d419c 122.1px,#6d369c 162.8px,#90309c 183.2px,#992e9c 188.2px,#9c2b95 193.3px,#9c2385 203.5px,#9c0e59 244.2px,#9c003f 284.9px,#98002d 325.6px,#730011 407px)"></i>
<i style="left:58px;top:406px;width:401px;background:linear-gradient(90deg,#00549c 0px,#00479c 80.2px,#00459c 90.2px,#0e439c 100.2px,#2c3f9c 120.3px,#6b359c 160.4px,#8d2e9c 180.5px,#9c2a98 190.5px,#9c2288 200.5px,#9c0d5c 240.6px,#9c0041 280.7px,#9a002f 320.8px,#750012 401px)"></i>
<i style="left:59px;top:408px;width:395px;background:linear-gradient(90deg,#00539c 0px,#004b9c 49.4px,#00479c 74.1px,#00449c 86.4px,#04439c 92.6px,#0e429c 98.8px,#59369c 148.1px,#812e9c 172.8px,#972a9c 185.2px,#9c2695 191.3px,#9c228b 197.5px,#9c136c 222.2px,#9c0956 246.9px,#9c0046 271.6px,#9c003a 296.2px,#99002f 320.9px,#8e0024 345.6px,#770014 395px)"></i>
<i style="left:60px;top:410px;width:389px;background:linear-gradient(90deg,#00519c 0px,#00499c 48.6px,#00459c 72.9px,#00429c 85.1px,#05419c 91.2px,#0e409c 97.2px,#57349c 145.9px,#7f2d9c 170.2px,#94299c 182.3px,#9c2699 188.4px,#9c218e 194.5px,#9c136f 218.8px,#9c0859 243.1px,#9c0048 267.4px,#9c003c 291.8px,#9a0031 316.1px,#8f0026 340.4px,#790015 389px)"></i>
<i style="left:60px;top:412px;width:384px;background:linear-gradient(90deg,#004f9c 0px,#00489c 48px,#00439c 72px,#00419c 84px,#04409c 90px,#0d3e9c 96px,#55329c 144px,#7b2b9c 168px,#8f279c 180px,#9a259c 186px,#9c2193 192px,#9c1372 216px,#9c085c 240px,#9c004b 264px,#9c003e 288px,#9c0033 312px,#910028 336px,#7b0017 384px)"></i>
<i style="left:61px;top:414px;width:379px;background:linear-gradient(90deg,#004e9c 0px,#00469c 47.4px,#00419c 71.1px,#003f9c 82.9px,#053e9c 88.8px,#0e3d9c 94.8px,#54319c 142.1px,#792a9c 165.8px,#8d269c 177.7px,#97249c 183.6px,#9c2095 189.5px,#9c1275 213.2px,#9c075e 236.9px,#9c004d 260.6px,#9c0040 284.2px,#9c0035 307.9px,#92002a 331.6px,#7d0018 379px)"></i>
<i style="left:62px;top:416px;width:373px;background:linear-gradient(90deg,#004c9c 0px,#00449c 46.6px,#00409c 69.9px,#003d9c 81.6px,#053c9c 87.4px,#0e3b9c 93.2px,#9c1f99 186.5px,#9c1178 209.8px,#9c0761 233.1px,#9c004f 256.4px,#9c0042 279.8px,#9c0037 303.1px,#94002c 326.4px,#7f001a 373px)"></i>
<i style="left:63px;top:418px;width:367px;background:linear-gradient(90deg,#004a9c 0px,#00439c 45.9px,#003e9c 68.8px,#003c9c 80.3px,#053a9c 86px,#0e399c 91.8px,#502d9c 137.6px,#9a1f9c 183.5px,#9c117b 206.4px,#9c0663 229.4px,#9c0044 275.2px,#9c0039 298.2px,#95002e 321.1px,#81001c 367px)"></i>
<i style="left:64px;top:420px;width:361px;background:linear-gradient(90deg,#00499c 0px,#00419c 45.1px,#003c9c 67.7px,#003a9c 79px,#0e379c 90.2px,#4f2c9c 135.4px,#971d9c 180.5px,#9c1a97 186.1px,#9c178e 191.8px,#9c107e 203.1px,#9c0666 225.6px,#9c0054 248.2px,#9c0046 270.8px,#9c003b 293.3px,#970031 315.9px,#83001e 361px)"></i>
<i style="left:64px;top:422px;width:356px;background:linear-gradient(90deg,#00479c 0px,#003f9c 44.5px,#003b9c 66.8px,#00399c 77.9px,#05379c 83.4px,#0d369c 89px,#921c9c 178px,#9c1a9b 183.6px,#9c1692 189.1px,#9c1082 200.2px,#9c066a 222.5px,#9c0057 244.8px,#9c0049 267px,#990033 311.5px,#840020 356px)"></i>
<i style="left:65px;top:424px;width:350px;background:linear-gradient(90deg,#00459c 0px,#003e9c 43.8px,#00399c 65.6px,#00379c 76.6px,#0e349c 87.5px,#4b299c 131.2px,#8f1b9c 175px,#98199c 180.5px,#9c1696 185.9px,#9c0f86 196.9px,#9c056d 218.8px,#9c005a 240.6px,#9c004b 262.5px,#9a0036 306.2px,#860022 350px)"></i>
<i style="left:66px;top:426px;width:344px;background:linear-gradient(90deg,#00449c 0px,#003c9c 43px,#00389c 64.5px,#00359c 75.2px,#0e339c 86px,#8b199c 172px,#9c159a 182.8px,#9c0f89 193.5px,#9c0470 215px,#9c004e 258px,#9c0038 301px,#880024 344px)"></i>
<i style="left:67px;top:428px;width:339px;background:linear-gradient(90deg,#00429c 0px,#003a9c 42.4px,#00369c 63.6px,#00349c 74.2px,#0e319c 84.8px,#89189c 169.5px,#9a149c 180.1px,#9c0e8c 190.7px,#9c0472 211.9px,#9c0050 254.2px,#9c003a 296.6px,#8a0026 339px)"></i>
<i style="left:68px;top:430px;width:333px;background:linear-gradient(90deg,#00409c 0px,#00399c 41.6px,#00349c 62.4px,#00329c 72.8px,#0e309c 83.2px,#86179c 166.5px,#97139c 176.9px,#9c0d90 187.3px,#9c0376 208.1px,#9c0053 249.8px,#9c003c 291.4px,#8c0028 333px)"></i>
<i style="left:69px;top:432px;width:327px;background:linear-gradient(90deg,#003f9c 0px,#00379c 40.9px,#00339c 61.3px,#00309c 71.5px,#0e2e9c 81.8px,#83159c 163.5px,#93119c 173.7px,#9b0f9c 178.8px,#9c0c94 183.9px,#9c0279 204.4px,#9c0055 245.2px,#9c003f 286.1px,#970035 306.6px,#8e002b 327px)"></i>
<i style="left:69px;top:434px;width:322px;background:linear-gradient(90deg,#003d9c 0px,#00369c 40.2px,#00319c 60.4px,#002f9c 70.4px,#0d2d9c 80.5px,#7f149c 161px,#9c0c98 181.1px,#9c027d 201.2px,#9c0058 241.5px,#9c0041 281.8px,#90002d 322px)"></i>
<i style="left:70px;top:436px;width:316px;background:linear-gradient(90deg,#003c9c 0px,#00319c 52.7px,#002e9c 65.8px,#042d9c 72.4px,#0e2b9c 79px,#31249c 105.3px,#7c139c 158px,#900e9c 171.2px,#9b0b9c 177.8px,#9c0892 184.3px,#9c0072 210.7px,#9c005b 237px,#9c004b 263.3px,#9c003d 289.7px,#920030 316px)"></i>
<i style="left:71px;top:438px;width:310px;background:linear-gradient(90deg,#003a9c 0px,#00309c 51.7px,#002d9c 64.6px,#052b9c 71px,#0e2a9c 77.5px,#30239c 103.3px,#79129c 155px,#8d0d9c 167.9px,#970a9c 174.4px,#9c0796 180.8px,#9c0084 193.8px,#9c0075 206.7px,#9c004d 258.3px,#9c0040 284.2px,#940033 310px)"></i>
<i style="left:72px;top:440px;width:304px;background:linear-gradient(90deg,#00389c 0px,#002e9c 50.7px,#002b9c 63.3px,#052a9c 69.7px,#0e289c 76px,#2f219c 101.3px,#76119c 152px,#9c069a 177.3px,#9c0079 202.7px,#9c0061 228px,#9c0050 253.3px,#9c0042 278.7px,#960035 304px)"></i>
<i style="left:73px;top:442px;width:299px;background:linear-gradient(90deg,#00379c 0px,#002d9c 49.8px,#002a9c 62.3px,#0e279c 74.8px,#2f209c 99.7px,#74109c 149.5px,#9a059c 174.4px,#9c007c 199.3px,#9c0052 249.2px,#9c0045 274.1px,#970038 299px)"></i>
<i style="left:74px;top:444px;width:293px;background:linear-gradient(90deg,#00359c 0px,#002b9c 48.8px,#00289c 61px,#0e259c 73.2px,#2e1f9c 97.7px,#710e9c 146.5px,#96049c 170.9px,#9c0198 177px,#9c008f 183.1px,#9c007f 195.3px,#9c0055 244.2px,#99003b 293px)"></i>
<i style="left:75px;top:446px;width:287px;background:linear-gradient(90deg,#00349c 0px,#002a9c 47.8px,#00279c 59.8px,#0f249c 71.8px,#2e1d9c 95.7px,#6e0d9c 143.5px,#92039c 167.4px,#9b009c 173.4px,#9c0093 179.4px,#9c0083 191.3px,#9c0058 239.2px,#9b003e 287px)"></i>
<i style="left:75px;top:448px;width:282px;background:linear-gradient(90deg,#00329c 0px,#00289c 47px,#00259c 58.8px,#0e239c 70.5px,#2c1c9c 94px,#6b0c9c 141px,#8d029c 164.5px,#9c0098 176.2px,#9c0088 188px,#9c006e 211.5px,#9c005b 235px,#9c0041 282px)"></i>
<i style="left:76px;top:450px;width:276px;background:linear-gradient(90deg,#00319c 0px,#00279c 46px,#00249c 57.5px,#0e219c 69px,#2b1b9c 92px,#680b9c 138px,#89019c 161px,#9b009c 172.5px,#9c008c 184px,#9c0072 207px,#9c005f 230px,#9c0044 276px)"></i>
<i style="left:77px;top:452px;width:270px;background:linear-gradient(90deg,#002f9c 0px,#00259c 45px,#00239c 56.2px,#0e209c 67.5px,#2b199c 90px,#650a9c 135px,#85009c 157.5px,#96009c 168.8px,#9c0098 174.4px,#9c0090 180px,#9c0062 225px,#9c0047 270px)"></i>
<i style="left:78px;top:454px;width:265px;background:linear-gradient(90deg,#002e9c 0px,#00249c 44.2px,#00219c 55.2px,#0e1e9c 66.2px,#2a189c 88.3px,#64099c 132.5px,#83009c 154.6px,#93009c 165.6px,#9b009c 171.1px,#9c0093 176.7px,#9c0065 220.8px,#9c0049 265px)"></i>
<i style="left:79px;top:456px;width:259px;background:linear-gradient(90deg,#002c9c 0px,#00229c 43.2px,#00209c 54px,#0f1d9c 64.8px,#2a179c 86.3px,#61089c 129.5px,#7f009c 151.1px,#9c0098 172.7px,#9c0068 215.8px,#9c004c 259px)"></i>
<i style="left:80px;top:458px;width:253px;background:linear-gradient(90deg,#002a9c 0px,#00219c 42.2px,#001e9c 52.7px,#0f1b9c 63.2px,#29159c 84.3px,#5f079c 126.5px,#7c009c 147.6px,#9a009c 168.7px,#9c006c 210.8px,#9c004f 253px)"></i>
<i style="left:81px;top:460px;width:247px;background:linear-gradient(90deg,#00299c 0px,#001f9c 41.2px,#011d9c 51.5px,#0f1a9c 61.8px,#28149c 82.3px,#5c069c 123.5px,#78009c 144.1px,#96009c 164.7px,#9c0092 175px,#9c0085 185.2px,#9c0070 205.8px,#9c0052 247px)"></i>
<i style="left:82px;top:462px;width:241px;background:linear-gradient(90deg,#00279c 0px,#001e9c 40.2px,#011b9c 50.2px,#0f199c 60.2px,#28139c 80.3px,#5a059c 120.5px,#75009c 140.6px,#91009c 160.7px,#9c0097 170.7px,#9c008a 180.8px,#9c0074 200.8px,#9c0056 241px)"></i>
<i style="left:83px;top:464px;width:235px;background:linear-gradient(90deg,#00269c 0px,#001f9c 29.4px,#001b9c 44.1px,#06199c 51.4px,#0f179c 58.8px,#58049c 117.5px,#7f009c 146.9px,#94009c 161.6px,#9c0098 168.9px,#9c008e 176.2px,#9c006f 205.6px,#9c0059 235px)"></i>
<i style="left:84px;top:466px;width:229px;background:linear-gradient(90deg,#00249c 0px,#001e9c 28.6px,#001a9c 42.9px,#0f169c 57.2px,#55039c 114.5px,#7b009c 143.1px,#8f009c 157.4px,#9a009c 164.6px,#9c0093 171.8px,#9c0073 200.4px,#9c005d 229px)"></i>
<i style="left:85px;top:468px;width:224px;background:linear-gradient(90deg,#00239c 0px,#001c9c 28px,#00199c 42px,#10159c 56px,#54029c 112px,#78009c 140px,#8c009c 154px,#96009c 161px,#9c0097 168px,#9c0077 196px,#9c0060 224px)"></i>
<i style="left:86px;top:470px;width:218px;background:linear-gradient(90deg,#00219c 0px,#001b9c 27.2px,#00179c 40.9px,#10139c 54.5px,#51009c 109px,#9b009c 163.5px,#9c007b 190.8px,#9c0064 218px)"></i>
<i style="left:87px;top:472px;width:212px;background:linear-gradient(90deg,#00209c 0px,#00199c 26.5px,#00169c 39.8px,#10129c 53px,#4f009c 106px,#95009c 159px,#9c0098 165.6px,#9c008f 172.2px,#9c0080 185.5px,#9c0068 212px)"></i>
<i style="left:88px;top:474px;width:206px;background:linear-gradient(90deg,#001e9c 0px,#00189c 25.8px,#00149c 38.6px,#10119c 51.5px,#4d009c 103px,#90009c 154.5px,#9a009c 160.9px,#9c0094 167.4px,#9c0085 180.2px,#9c006c 206px)"></i>
<i style="left:89px;top:476px;width:200px;background:linear-gradient(90deg,#001c9c 0px,#00169c 25px,#00139c 37.5px,#100f9c 50px,#4b009c 100px,#8b009c 150px,#9c009a 162.5px,#9c008a 175px,#9c0071 200px)"></i>
<i style="left:90px;top:478px;width:194px;background:linear-gradient(90deg,#001b9c 0px,#00159c 24.2px,#00129c 36.4px,#100e9c 48.5px,#49009c 97px,#87009c 145.5px,#97009c 157.6px,#9c0097 163.7px,#9c008f 169.8px,#9c0075 194px)"></i>
<i style="left:91px;top:480px;width:188px;background:linear-gradient(90deg,#00199c 0px,#00139c 23.5px,#01109c 35.2px,#100d9c 47px,#2b059c 70.5px,#47009c 94px,#82009c 141px,#92009c 152.8px,#9a009c 158.6px,#9c0095 164.5px,#9c007a 188px)"></i>
<i style="left:92px;top:482px;width:183px;background:linear-gradient(90deg,#00189c 0px,#00129c 22.9px,#020f9c 34.3px,#110b9c 45.8px,#45009c 91.5px,#7e009c 137.2px,#9c009a 160.1px,#9c007f 183px)"></i>
<i style="left:93px;top:484px;width:177px;background:linear-gradient(90deg,#00169c 0px,#00119c 22.1px,#030d9c 33.2px,#110a9c 44.2px,#43009c 88.5px,#7a009c 132.8px,#97009c 154.9px,#9c0091 165.9px,#9c0084 177px)"></i>
<i style="left:94px;top:486px;width:171px;background:linear-gradient(90deg,#00159c 0px,#000f9c 21.4px,#040c9c 32.1px,#11099c 42.8px,#29019c 64.1px,#41009c 85.5px,#75009c 128.2px,#91009c 149.6px,#9c0097 160.3px,#9c008a 171px)"></i>
<i style="left:95px;top:488px;width:165px;background:linear-gradient(90deg,#00139c 0px,#000e9c 20.6px,#040b9c 30.9px,#11089c 41.2px,#28009c 61.9px,#40009c 82.5px,#71009c 123.8px,#8c009c 144.4px,#9a009c 154.7px,#9c0090 165px)"></i>
<i style="left:96px;top:490px;width:159px;background:linear-gradient(90deg,#00129c 0px,#000c9c 19.9px,#05099c 29.8px,#11069c 39.8px,#3e009c 79.5px,#6d009c 119.2px,#86009c 139.1px,#93009c 149.1px,#9c0096 159px)"></i>
<i style="left:97px;top:492px;width:153px;background:linear-gradient(90deg,#00109c 0px,#000b9c 19.1px,#06089c 28.7px,#11059c 38.2px,#3c009c 76.5px,#9a009c 153px)"></i>
<i style="left:98px;top:494px;width:147px;background:linear-gradient(90deg,#000f9c 0px,#00099c 18.4px,#06079c 27.6px,#11049c 36.8px,#3a009c 73.5px,#93009c 147px)"></i>
<i style="left:99px;top:496px;width:142px;background:linear-gradient(90deg,#000d9c 0px,#00089c 17.8px,#11029c 35.5px,#39009c 71px,#8e009c 142px)"></i>
<i style="left:100px;top:498px;width:136px;background:linear-gradient(90deg,#000b9c 0px,#00069c 17px,#12019c 34px,#37009c 68px,#87009c 136px)"></i>
<i style="left:101px;top:500px;width:130px;background:linear-gradient(90deg,#000a9c 0px,#00059c 16.2px,#12009c 32.5px,#35009c 65px,#81009c 130px)"></i>
<i style="left:102px;top:502px;width:124px;background:linear-gradient(90deg,#00089c 0px,#00039c 15.5px,#12009c 31px,#33009c 62px,#7a009c 124px)"></i>
<i style="left:103px;top:504px;width:118px;background:linear-gradient(90deg,#00079c 0px,#00029c 14.8px,#12009c 29.5px,#32009c 59px,#74009c 118px)"></i>
<i style="left:104px;top:506px;width:112px;background:linear-gradient(90deg,#00059c 0px,#02009c 14px,#12009c 28px,#30009c 56px,#6f009c 112px)"></i>
<i style="left:105px;top:508px;width:107px;background:linear-gradient(90deg,#00039c 0px,#03009c 13.4px,#12009c 26.8px,#2f009c 53.5px,#6a009c 107px)"></i>
<i style="left:107px;top:510px;width:100px;background:linear-gradient(90deg,#00019c 0px,#05009c 12.5px,#13009c 25px,#2e009c 50px,#64009c 100px)"></i>
<i style="left:108px;top:512px;width:94px;background:linear-gradient(90deg,#00009c 0px,#06009c 11.8px,#13009c 23.5px,#2c009c 47px,#5f009c 94px)"></i>
<i style="left:109px;top:514px;width:88px;background:linear-gradient(90deg,#00009c 0px,#00009c 5.5px,#07009c 11px,#13009c 22px,#2a009c 44px,#59009c 88px)"></i>
<i style="left:110px;top:516px;width:82px;background:linear-gradient(90deg,#00009b 0px,#54009c 82px)"></i>
<i style="left:111px;top:518px;width:76px;background:linear-gradient(90deg,#00009b 0px,#4f009c 76px)"></i>
<i style="left:113px;top:520px;width:69px;background:linear-gradient(90deg,#01009a 0px,#4a009c 69px)"></i>
<i style="left:114px;top:522px;width:64px;background:linear-gradient(90deg,#03009a 0px,#46009c 64px)"></i>
<i style="left:115px;top:524px;width:58px;background:linear-gradient(90deg,#050099 0px,#41009c 58px)"></i>
<i style="left:117px;top:526px;width:51px;background:linear-gradient(90deg,#080099 0px,#3c009c 51px)"></i>
<i style="left:118px;top:528px;width:45px;background:linear-gradient(90deg,#0a0099 0px,#37009c 45px)"></i>
<i style="left:120px;top:530px;width:38px;background:linear-gradient(90deg,#0c0098 0px,#33009c 38px)"></i>
<i style="left:123px;top:532px;width:30px;background:linear-gradient(90deg,#100098 0px,#2e009c 30px)"></i>
<i style="left:128px;top:534px;width:18px;background:linear-gradient(90deg,#150098 0px,#27009a 18px)"></i></div>
<div class="a cie" style="left:1022px;top:140px;width:651px;height:548px;clip-path:polygon(495.2px 332.3px,232.5px 157.0px,116.7px 507.5px)"><i style="left:230px;top:156px;width:6px;background:linear-gradient(90deg,#00ff01 0px,#03ff00 6px)"></i>
<i style="left:230px;top:158px;width:9px;background:linear-gradient(90deg,#00ff01 0px,#07ff00 9px)"></i>
<i style="left:229px;top:160px;width:13px;background:linear-gradient(90deg,#00ff02 0px,#0cff00 13px)"></i>
<i style="left:228px;top:162px;width:17px;background:linear-gradient(90deg,#00ff03 0px,#10ff00 17px)"></i>
<i style="left:228px;top:164px;width:20px;background:linear-gradient(90deg,#00ff04 0px,#16ff00 20px)"></i>
<i style="left:227px;top:166px;width:24px;background:linear-gradient(90deg,#00ff06 0px,#1bff00 24px)"></i>
<i style="left:226px;top:168px;width:28px;background:linear-gradient(90deg,#00ff07 0px,#20ff00 28px)"></i>
<i style="left:226px;top:170px;width:31px;background:linear-gradient(90deg,#00ff08 0px,#26ff00 31px)"></i>
<i style="left:225px;top:172px;width:35px;background:linear-gradient(90deg,#00ff09 0px,#2cff00 35px)"></i>
<i style="left:224px;top:174px;width:39px;background:linear-gradient(90deg,#00ff0a 0px,#15ff04 19.5px,#32ff00 39px)"></i>
<i style="left:224px;top:176px;width:42px;background:linear-gradient(90deg,#00ff0c 0px,#18ff05 21px,#39ff00 42px)"></i>
<i style="left:223px;top:178px;width:46px;background:linear-gradient(90deg,#00ff0d 0px,#1aff06 23px,#40ff00 46px)"></i>
<i style="left:222px;top:180px;width:50px;background:linear-gradient(90deg,#00ff0e 0px,#1dff06 25px,#47ff00 50px)"></i>
<i style="left:222px;top:182px;width:53px;background:linear-gradient(90deg,#00ff10 0px,#21ff07 26.5px,#4eff00 53px)"></i>
<i style="left:221px;top:184px;width:57px;background:linear-gradient(90deg,#00ff11 0px,#24ff08 28.5px,#56ff00 57px)"></i>
<i style="left:220px;top:186px;width:61px;background:linear-gradient(90deg,#00ff13 0px,#0fff0e 15.2px,#26ff08 30.5px,#5eff00 61px)"></i>
<i style="left:220px;top:188px;width:64px;background:linear-gradient(90deg,#00ff14 0px,#2aff09 32px,#66ff00 64px)"></i>
<i style="left:219px;top:190px;width:68px;background:linear-gradient(90deg,#00ff16 0px,#13ff10 17px,#2dff0a 34px,#6eff00 68px)"></i>
<i style="left:218px;top:192px;width:72px;background:linear-gradient(90deg,#00ff17 0px,#14ff11 18px,#31ff0b 36px,#77ff00 72px)"></i>
<i style="left:218px;top:194px;width:75px;background:linear-gradient(90deg,#00ff19 0px,#16ff12 18.8px,#35ff0c 37.5px,#80ff00 75px)"></i>
<i style="left:217px;top:196px;width:79px;background:linear-gradient(90deg,#00ff1a 0px,#17ff13 19.8px,#38ff0c 39.5px,#8aff00 79px)"></i>
<i style="left:216px;top:198px;width:83px;background:linear-gradient(90deg,#00ff1c 0px,#18ff15 20.8px,#3cff0d 41.5px,#94ff00 83px)"></i>
<i style="left:216px;top:200px;width:86px;background:linear-gradient(90deg,#00ff1d 0px,#1bff16 21.5px,#40ff0e 43px,#9eff00 86px)"></i>
<i style="left:215px;top:202px;width:90px;background:linear-gradient(90deg,#00ff1f 0px,#1cff17 22.5px,#44ff0f 45px,#a9ff00 90px)"></i>
<i style="left:214px;top:204px;width:94px;background:linear-gradient(90deg,#00ff21 0px,#0bff1d 11.8px,#1dff19 23.5px,#48ff10 47px,#b4ff00 94px)"></i>
<i style="left:214px;top:206px;width:97px;background:linear-gradient(90deg,#00ff23 0px,#20ff1a 24.2px,#4dff11 48.5px,#bfff00 97px)"></i>
<i style="left:213px;top:208px;width:101px;background:linear-gradient(90deg,#00ff24 0px,#0dff20 12.6px,#21ff1b 25.2px,#51ff12 50.5px,#89ff08 75.8px,#cbff00 101px)"></i>
<i style="left:212px;top:210px;width:105px;background:linear-gradient(90deg,#00ff26 0px,#0dff22 13.1px,#23ff1d 26.2px,#55ff13 52.5px,#91ff09 78.8px,#d7ff00 105px)"></i>
<i style="left:212px;top:212px;width:108px;background:linear-gradient(90deg,#00ff28 0px,#25ff1e 27px,#5aff14 54px,#99ff09 81px,#e4ff00 108px)"></i>
<i style="left:211px;top:214px;width:112px;background:linear-gradient(90deg,#00ff2a 0px,#10ff25 14px,#27ff20 28px,#5eff15 56px,#a2ff0a 84px,#f2ff00 112px)"></i>
<i style="left:210px;top:216px;width:116px;background:linear-gradient(90deg,#00ff2c 0px,#10ff27 14.5px,#28ff22 29px,#63ff16 58px,#aaff0a 87px,#fffe00 116px)"></i>
<i style="left:210px;top:218px;width:119px;background:linear-gradient(90deg,#00ff2e 0px,#2bff23 29.8px,#69ff17 59.5px,#b4ff0b 89.2px,#dfff04 104.1px,#f6ff01 111.6px,#fffc00 115.3px,#fff100 119px)"></i>
<i style="left:209px;top:220px;width:123px;background:linear-gradient(90deg,#00ff30 0px,#12ff2a 15.4px,#2dff25 30.8px,#6eff19 61.5px,#bdff0b 92.2px,#ebff05 107.6px,#fffb01 115.3px,#ffe400 123px)"></i>
<i style="left:208px;top:222px;width:127px;background:linear-gradient(90deg,#00ff32 0px,#12ff2c 15.9px,#2eff27 31.8px,#72ff1a 63.5px,#c7ff0c 95.2px,#f7ff05 111.1px,#fffa03 115.1px,#ffee01 119.1px,#ffd800 127px)"></i>
<i style="left:208px;top:224px;width:130px;background:linear-gradient(90deg,#00ff34 0px,#14ff2e 16.2px,#32ff28 32.5px,#79ff1b 65px,#d1ff0d 97.5px,#eaff09 105.6px,#f7ff07 109.7px,#fff905 113.8px,#ffcd00 130px)"></i>
<i style="left:207px;top:226px;width:134px;background:linear-gradient(90deg,#00ff36 0px,#15ff30 16.8px,#33ff2a 33.5px,#7eff1c 67px,#dbff0d 100.5px,#f6ff09 108.9px,#fffa07 113.1px,#ffed05 117.2px,#ffc200 134px)"></i>
<i style="left:206px;top:228px;width:138px;background:linear-gradient(90deg,#00ff38 0px,#15ff32 17.2px,#35ff2c 34.5px,#83ff1e 69px,#e6ff0e 103.5px,#fffc0a 112.1px,#ffe205 120.8px,#ffb800 138px)"></i>
<i style="left:206px;top:230px;width:141px;background:linear-gradient(90deg,#00ff3a 0px,#17ff34 17.6px,#38ff2d 35.2px,#8aff1f 70.5px,#f2ff0f 105.8px,#fffe0c 110.2px,#ffef0a 114.6px,#ffd705 123.4px,#ffaf00 141px)"></i>
<i style="left:205px;top:232px;width:145px;background:linear-gradient(90deg,#00ff3d 0px,#18ff36 18.1px,#3aff2f 36.2px,#90ff20 72.5px,#fdff0f 108.8px,#ffcc05 126.9px,#ffa600 145px)"></i>
<i style="left:204px;top:234px;width:149px;background:linear-gradient(90deg,#00ff3f 0px,#18ff38 18.6px,#3cff31 37.2px,#96ff22 74.5px,#ccff19 93.1px,#eaff15 102.4px,#f9ff13 107.1px,#fff510 111.8px,#ffc305 130.4px,#ff9e00 149px)"></i>
<i style="left:204px;top:236px;width:152px;background:linear-gradient(90deg,#00ff41 0px,#1aff3a 19px,#40ff33 38px,#9dff23 76px,#d6ff1a 95px,#f5ff16 104.5px,#fff913 109.2px,#ffea10 114px,#ffb905 133px,#ff9600 152px)"></i>
<i style="left:203px;top:238px;width:156px;background:linear-gradient(90deg,#00ff44 0px,#1bff3d 19.5px,#42ff35 39px,#a4ff25 78px,#dfff1c 97.5px,#fffe17 107.2px,#ffdf10 117px,#ffb105 136.5px,#ff8e00 156px)"></i>
<i style="left:202px;top:240px;width:160px;background:linear-gradient(90deg,#00ff46 0px,#1bff3f 20px,#44ff37 40px,#aaff26 80px,#e9ff1d 100px,#faff1a 105px,#fff317 110px,#ffd610 120px,#ffa805 140px,#ff8700 160px)"></i>
<i style="left:202px;top:242px;width:163px;background:linear-gradient(90deg,#00ff48 0px,#1dff41 20.4px,#47ff39 40.8px,#b2ff28 81.5px,#f4ff1e 101.9px,#fff91b 107px,#ffe817 112.1px,#ffcc10 122.2px,#ffa005 142.6px,#ff8100 163px)"></i>
<i style="left:201px;top:244px;width:167px;background:linear-gradient(90deg,#00ff4b 0px,#0bff47 10.4px,#1eff44 20.9px,#4aff3c 41.8px,#7dff33 62.6px,#b9ff2a 83.5px,#feff20 104.4px,#ffc310 125.2px,#ff9905 146.1px,#ff7a00 167px)"></i>
<i style="left:200px;top:246px;width:171px;background:linear-gradient(90deg,#00ff4e 0px,#0bff4a 10.7px,#1eff46 21.4px,#4cff3e 42.8px,#c0ff2b 85.5px,#e3ff26 96.2px,#f6ff24 101.5px,#ffff22 104.2px,#fff620 106.9px,#ffbb10 128.2px,#ff9205 149.6px,#ff7400 171px)"></i>
<i style="left:200px;top:248px;width:174px;background:linear-gradient(90deg,#00ff50 0px,#0dff4c 10.9px,#21ff48 21.8px,#50ff40 43.5px,#88ff37 65.2px,#c9ff2d 87px,#eeff28 97.9px,#fffd25 103.3px,#ffeb20 108.8px,#ffb210 130.5px,#ff8b05 152.2px,#ff6e00 174px)"></i>
<i style="left:199px;top:250px;width:178px;background:linear-gradient(90deg,#00ff53 0px,#0dff4f 11.1px,#21ff4b 22.2px,#52ff43 44.5px,#8cff39 66.8px,#d1ff2f 89px,#f7ff2a 100.1px,#fff325 105.7px,#ffe120 111.2px,#ffaa10 133.5px,#ff8406 155.8px,#ff6900 178px)"></i>
<i style="left:198px;top:252px;width:182px;background:linear-gradient(90deg,#00ff56 0px,#0dff52 11.4px,#22ff4e 22.8px,#55ff45 45.5px,#91ff3c 68.2px,#d9ff31 91px,#fffd2b 102.4px,#ffd920 113.8px,#ffa310 136.5px,#ff7e06 159.2px,#ff6400 182px)"></i>
<i style="left:198px;top:254px;width:185px;background:linear-gradient(90deg,#00ff58 0px,#24ff50 23.1px,#59ff47 46.2px,#98ff3e 69.4px,#e2ff33 92.5px,#f7ff30 98.3px,#fff22b 104.1px,#ffcf20 115.6px,#ff9c10 138.8px,#ff7806 161.9px,#ff5f00 185px)"></i>
<i style="left:197px;top:256px;width:189px;background:linear-gradient(90deg,#00ff5b 0px,#0eff57 11.8px,#25ff53 23.6px,#5bff4a 47.2px,#9dff40 70.9px,#ebff35 94.5px,#fffe32 100.4px,#ffe92b 106.3px,#ffc720 118.1px,#ff9510 141.8px,#ff7306 165.4px,#ff5a00 189px)"></i>
<i style="left:197px;top:258px;width:192px;background:linear-gradient(90deg,#00ff5e 0px,#28ff55 24px,#60ff4c 48px,#a4ff42 72px,#f5ff37 96px,#fffd35 99px,#fff331 102px,#ffdf2b 108px,#ffbe20 120px,#ff8e10 144px,#ff6d06 168px,#ff5500 192px)"></i>
<i style="left:196px;top:260px;width:196px;background:linear-gradient(90deg,#00ff61 0px,#28ff58 24.5px,#63ff4f 49px,#aaff45 73.5px,#feff39 98px,#ffb720 122.5px,#ff8810 147px,#ff6806 171.5px,#ff5100 196px)"></i>
<i style="left:195px;top:262px;width:200px;background:linear-gradient(90deg,#00ff64 0px,#10ff60 12.5px,#29ff5b 25px,#66ff52 50px,#afff47 75px,#daff42 87.5px,#f0ff3f 93.8px,#fcff3d 96.9px,#fff63a 100px,#ffb020 125px,#ff8210 150px,#ff6306 175px,#ff4d00 200px)"></i>
<i style="left:195px;top:264px;width:203px;background:linear-gradient(90deg,#00ff67 0px,#2cff5e 25.4px,#6aff55 50.8px,#b7ff4a 76.1px,#e3ff44 88.8px,#fbff41 95.2px,#ffec39 101.5px,#ffa820 126.9px,#ff7c10 152.2px,#ff5e06 177.6px,#ff4900 203px)"></i>
<i style="left:194px;top:266px;width:207px;background:linear-gradient(90deg,#00ff6a 0px,#12ff66 12.9px,#2dff61 25.9px,#6dff58 51.8px,#bdff4d 77.6px,#ebff47 90.6px,#fffa42 97px,#ffe439 103.5px,#ffbe2b 116.4px,#ffa120 129.4px,#ff7710 155.2px,#ff4500 207px)"></i>
<i style="left:193px;top:268px;width:211px;background:linear-gradient(90deg,#00ff6d 0px,#12ff69 13.2px,#2dff64 26.4px,#70ff5b 52.8px,#c3ff50 79.1px,#f3ff49 92.3px,#fffe48 95.6px,#fff243 98.9px,#ffdc3a 105.5px,#ffb72b 118.7px,#ff9b20 131.9px,#ff7210 158.2px,#ff4100 211px)"></i>
<i style="left:193px;top:270px;width:214px;background:linear-gradient(90deg,#00ff70 0px,#14ff6c 13.4px,#30ff67 26.8px,#76ff5d 53.5px,#ccff52 80.2px,#feff4c 93.6px,#ffd239 107px,#ff9420 133.8px,#ff6d10 160.5px,#ff5106 187.2px,#ff3e00 214px)"></i>
<i style="left:192px;top:272px;width:218px;background:linear-gradient(90deg,#00ff73 0px,#14ff6f 13.6px,#31ff6b 27.2px,#79ff61 54.5px,#d2ff55 81.8px,#ecff52 88.6px,#f9ff51 92px,#fff84d 95.4px,#ffcb39 109px,#ff8f20 136.2px,#ff6810 163.5px,#ff3a00 218px)"></i>
<i style="left:191px;top:274px;width:222px;background:linear-gradient(90deg,#00ff77 0px,#14ff73 13.9px,#32ff6e 27.8px,#7cff64 55.5px,#d9ff58 83.2px,#f4ff55 90.2px,#fffd53 93.7px,#ffef4d 97.1px,#ffc43a 111px,#ff8920 138.8px,#ff6310 166.5px,#ff3700 222px)"></i>
<i style="left:191px;top:276px;width:225px;background:linear-gradient(90deg,#00ff7a 0px,#16ff76 14.1px,#35ff71 28.1px,#82ff67 56.2px,#e3ff5b 84.4px,#feff58 91.4px,#ffe64c 98.4px,#ffbc39 112.5px,#ff8320 140.6px,#ff5f10 168.8px,#ff3400 225px)"></i>
<i style="left:190px;top:278px;width:229px;background:linear-gradient(90deg,#00ff7e 0px,#16ff79 14.3px,#36ff75 28.6px,#85ff6b 57.2px,#eaff5f 85.9px,#f8ff5d 89.5px,#fff859 93px,#ffde4d 100.2px,#ffb53a 114.5px,#ff7e20 143.1px,#ff5a10 171.8px,#fd3000 229px)"></i>
<i style="left:189px;top:280px;width:233px;background:linear-gradient(90deg,#00ff81 0px,#07ff7f 7.3px,#16ff7d 14.6px,#37ff78 29.1px,#89ff6e 58.2px,#f1ff62 87.4px,#fffe60 91px,#fff059 94.7px,#ffd64d 101.9px,#ffaf3a 116.5px,#ff7920 145.6px,#ff5610 174.8px,#fb2d00 233px)"></i>
<i style="left:189px;top:282px;width:236px;background:linear-gradient(90deg,#00ff85 0px,#18ff80 14.8px,#3aff7c 29.5px,#8fff72 59px,#fcff66 88.5px,#ffce4c 103.2px,#ffa739 118px,#ff7320 147.5px,#ff5210 177px,#ff3b06 206.5px,#f82a00 236px)"></i>
<i style="left:188px;top:284px;width:240px;background:linear-gradient(90deg,#00ff88 0px,#0dff86 10px,#23ff83 20px,#56ff7c 40px,#93ff75 60px,#dbff6e 80px,#fffa67 90px,#ffd655 100px,#ffa13a 120px,#ff7d27 140px,#ff621a 160px,#ff3f09 200px,#ff3203 220px,#f52700 240px)"></i>
<i style="left:187px;top:286px;width:244px;background:linear-gradient(90deg,#00ff8c 0px,#0dff8a 10.2px,#23ff87 20.3px,#58ff80 40.7px,#97ff79 61px,#e2ff71 81.3px,#f7ff6f 86.4px,#fffd6d 89px,#fff268 91.5px,#ffcf55 101.7px,#ff9b3a 122px,#ff7827 142.3px,#ff5e1a 162.7px,#ff3c09 203.3px,#ff2f03 223.7px,#f22400 244px)"></i>
<i style="left:187px;top:288px;width:247px;background:linear-gradient(90deg,#00ff90 0px,#0fff8d 10.3px,#26ff8a 20.6px,#5cff84 41.2px,#9eff7d 61.8px,#ecff75 82.3px,#fffd72 87.5px,#ffe967 92.6px,#ffc654 102.9px,#ff9539 123.5px,#ff7327 144.1px,#ff5a1a 164.7px,#ff3809 205.8px,#ff2d03 226.4px,#f02100 247px)"></i>
<i style="left:186px;top:290px;width:251px;background:linear-gradient(90deg,#00ff94 0px,#0fff91 10.5px,#26ff8e 20.9px,#5eff88 41.8px,#a2ff81 62.8px,#f3ff79 83.7px,#feff78 86.3px,#fff573 88.9px,#ffe167 94.1px,#ffc055 104.6px,#ff8f3a 125.5px,#ff6e27 146.4px,#ff561a 167.3px,#ff3509 209.2px,#fc2a03 230.1px,#ed1e00 251px)"></i>
<i style="left:185px;top:292px;width:255px;background:linear-gradient(90deg,#00ff98 0px,#0eff95 10.6px,#26ff93 21.2px,#60ff8c 42.5px,#a6ff85 63.8px,#faff7e 85px,#ffba55 106.2px,#ff8a3a 127.5px,#ff521a 170px,#ff3209 212.5px,#fa2703 233.8px,#ea1c00 255px)"></i>
<i style="left:185px;top:294px;width:258px;background:linear-gradient(90deg,#00ff9c 0px,#10ff99 10.8px,#29ff97 21.5px,#65ff91 43px,#aeff8a 64.5px,#d7ff86 75.2px,#eeff84 80.6px,#f9ff83 83.3px,#fff97f 86px,#ffd167 96.8px,#ffb254 107.5px,#ff8439 129px,#ff4e1a 172px,#ff2f09 215px,#f72403 236.5px,#e71a00 258px)"></i>
<i style="left:184px;top:296px;width:262px;background:linear-gradient(90deg,#00ffa0 0px,#10ff9e 10.9px,#2aff9b 21.8px,#67ff95 43.7px,#b2ff8e 65.5px,#deff8a 76.4px,#f5ff88 81.9px,#fffd87 84.6px,#fff27f 87.3px,#ffac55 109.2px,#ff7f3a 131px,#ff4b1a 174.7px,#ff2d09 218.3px,#f52103 240.2px,#e51700 262px)"></i>
<i style="left:183px;top:298px;width:266px;background:linear-gradient(90deg,#00ffa5 0px,#10ffa2 11.1px,#2aff9f 22.2px,#69ff9a 44.3px,#b7ff93 66.5px,#e4ff8f 77.6px,#fcff8d 83.1px,#ffeb80 88.7px,#ffc468 99.8px,#ffa655 110.8px,#ff7b3a 133px,#ff471a 177.3px,#ff2a09 221.7px,#e21500 266px)"></i>
<i style="left:183px;top:300px;width:269px;background:linear-gradient(90deg,#00ffa9 0px,#12ffa6 11.2px,#2dffa4 22.4px,#6eff9e 44.8px,#bfff97 67.2px,#eeff94 78.5px,#faff93 81.3px,#fff78e 84.1px,#ffe17f 89.7px,#ff9f54 112.1px,#ff7539 134.5px,#ff441a 179.3px,#ff2809 224.2px,#df1300 269px)"></i>
<i style="left:182px;top:302px;width:273px;background:linear-gradient(90deg,#00ffad 0px,#12ffab 11.4px,#2dffa9 22.8px,#71ffa3 45.5px,#c4ff9c 68.2px,#f5ff99 79.6px,#fffc96 82.5px,#fff08e 85.3px,#ffda7f 91px,#ff9a55 113.8px,#ff713a 136.5px,#ff401a 182px,#fe2509 227.5px,#dd1100 273px)"></i>
<i style="left:181px;top:304px;width:277px;background:linear-gradient(90deg,#00ffb2 0px,#05ffb1 5.8px,#11ffb0 11.5px,#2effad 23.1px,#73ffa8 46.2px,#caffa2 69.2px,#fcff9e 80.8px,#ffd380 92.3px,#ff9555 115.4px,#ff6d3a 138.5px,#ff3d1a 184.7px,#fc2209 230.8px,#da1000 277px)"></i>
<i style="left:181px;top:306px;width:280px;background:linear-gradient(90deg,#00ffb7 0px,#13ffb4 11.7px,#31ffb2 23.3px,#79ffad 46.7px,#d2ffa7 70px,#ecffa5 75.8px,#f9ffa4 78.8px,#fff89f 81.7px,#ffcb7f 93.3px,#ff8e54 116.7px,#ff683a 140px,#ff3a1a 186.7px,#fa2009 233.3px,#d70e00 280px)"></i>
<i style="left:180px;top:308px;width:284px;background:linear-gradient(90deg,#00ffbc 0px,#13ffb9 11.8px,#31ffb7 23.7px,#7cffb2 47.3px,#d8ffac 71px,#f3ffab 76.9px,#fffea9 79.9px,#fff09f 82.8px,#ffc57f 94.7px,#ff8955 118.3px,#ff643a 142px,#ff371a 189.3px,#ff2910 213px,#f81d09 236.7px,#d40c00 284px)"></i>
<i style="left:179px;top:310px;width:288px;background:linear-gradient(90deg,#00ffc0 0px,#06ffbf 6px,#13ffbe 12px,#32ffbc 24px,#7effb7 48px,#deffb2 72px,#faffb0 78px,#ffe9a0 84px,#ffbe80 96px,#ff8555 120px,#ff603a 144px,#ff341a 192px,#ff2710 216px,#f51b09 240px,#d20b00 288px)"></i>
<i style="left:179px;top:312px;width:291px;background:linear-gradient(90deg,#00ffc5 0px,#15ffc3 12.1px,#35ffc1 24.2px,#84ffbd 48.5px,#e8ffb8 72.8px,#fffab2 78.8px,#ffe09f 84.9px,#ffb77f 97px,#ff7f54 121.2px,#ff5b3a 145.5px,#ff311a 194px,#ff2410 218.2px,#f31908 242.5px,#cf0900 291px)"></i>
<i style="left:178px;top:314px;width:295px;background:linear-gradient(90deg,#00ffcb 0px,#07ffca 6.1px,#15ffc9 12.3px,#36ffc7 24.6px,#87ffc3 49.2px,#eeffbe 73.8px,#fdffbd 76.8px,#fff3b3 79.9px,#ffd99f 86px,#ffb17f 98.3px,#ff7a55 122.9px,#ff583a 147.5px,#ff2f1a 196.7px,#ff2210 221.2px,#f11708 245.8px,#cc0800 295px)"></i>
<i style="left:177px;top:316px;width:299px;background:linear-gradient(90deg,#00ffd0 0px,#07ffcf 6.2px,#15ffce 12.5px,#37ffcc 24.9px,#8affc9 49.8px,#f5ffc4 74.8px,#fffac0 77.9px,#ffecb4 81px,#ffd3a0 87.2px,#ffab80 99.7px,#ff7655 124.6px,#ff543a 149.5px,#ff2c1a 199.3px,#ff2010 224.2px,#ef1508 249.2px,#ca0700 299px)"></i>
<i style="left:177px;top:318px;width:302px;background:linear-gradient(90deg,#00ffd5 0px,#17ffd4 12.6px,#3affd2 25.2px,#91ffcf 50.3px,#fffeca 75.5px,#ffca9f 88.1px,#ffa47f 100.7px,#ff7155 125.8px,#ff503a 151px,#ff291a 201.3px,#ff1d10 226.5px,#ec1308 251.7px,#c70500 302px)"></i>
<i style="left:176px;top:320px;width:306px;background:linear-gradient(90deg,#00ffdb 0px,#08ffda 6.4px,#17ffd9 12.8px,#3bffd8 25.5px,#94ffd5 51px,#caffd3 63.8px,#e7ffd2 70.1px,#f7ffd2 73.3px,#fff7cb 76.5px,#ffc49f 89.2px,#ff9f7f 102px,#ff6d55 127.5px,#ff4d3a 153px,#ff271a 204px,#fd1b10 229.5px,#ea1108 255px,#c40400 306px)"></i>
<i style="left:175px;top:322px;width:310px;background:linear-gradient(90deg,#00ffe0 0px,#07ffe0 6.5px,#17ffdf 12.9px,#3bffde 25.8px,#97ffdb 51.7px,#cfffda 64.6px,#eeffd9 71px,#feffd9 74.3px,#fff1cc 77.5px,#ffbea0 90.4px,#ff9a80 103.3px,#ff6955 129.2px,#ff493a 155px,#ff251a 206.7px,#fb1910 232.5px,#e80f08 258.3px,#c10300 310px)"></i>
<i style="left:175px;top:324px;width:313px;background:linear-gradient(90deg,#00ffe6 0px,#09ffe6 6.5px,#19ffe5 13px,#3fffe4 26.1px,#9effe2 52.2px,#d8ffe1 65.2px,#f8ffe0 71.7px,#fff5d7 75px,#ffe6ca 78.2px,#ffb69f 91.3px,#ff937f 104.3px,#ff6455 130.4px,#ff463a 156.5px,#ff221a 208.7px,#f91710 234.8px,#e50d08 260.8px,#bf0200 313px)"></i>
<i style="left:174px;top:326px;width:317px;background:linear-gradient(90deg,#00ffec 0px,#09ffec 6.6px,#19ffeb 13.2px,#40ffeb 26.4px,#a2ffe9 52.8px,#deffe8 66px,#ffffe7 72.6px,#ffe0cb 79.2px,#ffb19f 92.5px,#ff8e7f 105.7px,#ff6055 132.1px,#ff433a 158.5px,#ff201a 211.3px,#f71510 237.8px,#e30c08 264.2px,#bc0200 317px)"></i>
<i style="left:173px;top:328px;width:321px;background:linear-gradient(90deg,#00fff2 0px,#10fff2 10px,#2cfff1 20.1px,#70fff1 40.1px,#c4fff0 60.2px,#f5ffef 70.2px,#fffced 72.7px,#fff0e1 75.2px,#ffdacc 80.2px,#ffb5a9 90.3px,#ff998f 100.3px,#ff7068 120.4px,#ff403a 160.5px,#ff2420 200.6px,#ff1b17 220.7px,#f51310 240.8px,#b90100 321px)"></i>
<i style="left:173px;top:330px;width:324px;background:linear-gradient(90deg,#00fff8 0px,#12fff8 10.1px,#2ffff8 20.2px,#75fff8 40.5px,#cdfff7 60.8px,#fffef7 70.9px,#ffd0ca 81px,#ff928e 101.2px,#ff6b67 121.5px,#ff3c3a 162px,#ff2220 202.5px,#ff1917 222.8px,#f31110 243px,#b80000 324px)"></i>
<i style="left:172px;top:332px;width:325px;background:linear-gradient(90deg,#00ffff 0px,#05ffff 5.1px,#12ffff 10.2px,#2fffff 20.3px,#76ffff 40.6px,#cfffff 60.9px,#fffbfb 71.1px,#ffcdce 81.2px,#ff9090 101.6px,#ff6969 121.9px,#ff3b3b 162.5px,#ff2121 203.1px,#ff1818 223.4px,#f21010 243.8px,#b80000 325px)"></i>
<i style="left:171px;top:334px;width:322px;background:linear-gradient(90deg,#00f9ff 0px,#10f9ff 10.1px,#2df8ff 20.1px,#72f8ff 40.2px,#c8f7ff 60.4px,#f9f7ff 70.4px,#ffeff7 73px,#ffe3eb 75.5px,#ffced5 80.5px,#ff9096 100.6px,#ff696e 120.8px,#ff3b3e 161px,#ff2123 201.2px,#ff181a 221.4px,#f41012 241.5px,#b90001 322px)"></i>
<i style="left:171px;top:336px;width:318px;background:linear-gradient(90deg,#00f3ff 0px,#09f2ff 6.6px,#1af2ff 13.2px,#42f1ff 26.5px,#a7f0ff 53px,#e4efff 66.2px,#f4efff 69.6px,#ffe8f8 72.9px,#ffccda 79.5px,#ffa0ac 92.8px,#ff808b 106px,#ff555d 132.5px,#ff3a41 159px,#ff1a1f 212px,#ff1519 225.2px,#f61014 238.5px,#e2080b 265px,#bb0001 318px)"></i>
<i style="left:170px;top:338px;width:315px;background:linear-gradient(90deg,#00edff 0px,#08ecff 6.6px,#19ecff 13.1px,#3febff 26.2px,#a1e9ff 52.5px,#dce7ff 65.6px,#fce7ff 72.2px,#ffcce3 78.8px,#ffa0b3 91.9px,#ff8090 105px,#ff5562 131.2px,#ff3a44 157.5px,#ff1a21 210px,#f81016 236.2px,#e4080d 262.5px,#be0002 315px)"></i>
<i style="left:169px;top:340px;width:311px;background:linear-gradient(90deg,#00e7ff 0px,#07e6ff 6.5px,#17e6ff 13px,#3ce4ff 25.9px,#9ae2ff 51.8px,#d3e0ff 64.8px,#f2e0ff 71.3px,#ffdcfc 74.5px,#ffceec 77.8px,#ffa2bb 90.7px,#ff8197 103.7px,#ff5666 129.6px,#ff3b48 155.5px,#ff1a24 207.3px,#fa1018 233.2px,#e7080e 259.2px,#c10003 311px)"></i>
<i style="left:169px;top:342px;width:307px;background:linear-gradient(90deg,#00e1ff 0px,#18e0ff 12.8px,#3ddeff 25.6px,#98dbff 51.2px,#cfd9ff 64px,#edd8ff 70.4px,#fdd8ff 73.6px,#ffccf1 76.8px,#ffa0bf 89.5px,#ff809b 102.3px,#ff556a 127.9px,#ff3a4b 153.5px,#ff1a26 204.7px,#fc101a 230.2px,#e90810 255.8px,#c30004 307px)"></i>
<i style="left:168px;top:344px;width:304px;background:linear-gradient(90deg,#00dbff 0px,#08daff 6.3px,#17daff 12.7px,#3ad8ff 25.3px,#92d5ff 50.7px,#ffcdfa 76px,#ffa1c7 88.7px,#ff80a1 101.3px,#ff556e 126.7px,#ff3a4e 152px,#ff1a28 202.7px,#fe101c 228px,#eb0812 253.3px,#c60005 304px)"></i>
<i style="left:167px;top:346px;width:301px;background:linear-gradient(90deg,#00d6ff 0px,#07d5ff 6.3px,#15d4ff 12.5px,#38d2ff 25.1px,#8dceff 50.2px,#fbcaff 75.2px,#ffa1ce 87.8px,#ff81a7 100.3px,#ff5573 125.4px,#ff3a52 150.5px,#ff1a2b 200.7px,#ff101e 225.8px,#ed0814 250.8px,#c80006 301px)"></i>
<i style="left:167px;top:348px;width:296px;background:linear-gradient(90deg,#00d0ff 0px,#16ceff 12.3px,#38cdff 24.7px,#8bc8ff 49.3px,#f4c3ff 74px,#ffc0fb 77.1px,#ffb4ed 80.2px,#ffa0d4 86.3px,#ff80ad 98.7px,#ff5577 123.3px,#ff3a55 148px,#ff1a2d 197.3px,#ff1021 222px,#f00816 246.7px,#cb0007 296px)"></i>
<i style="left:166px;top:350px;width:293px;background:linear-gradient(90deg,#00cbff 0px,#07caff 6.1px,#15c9ff 12.2px,#35c7ff 24.4px,#86c2ff 48.8px,#ebbdff 73.2px,#fabcff 76.3px,#ffb5f6 79.4px,#ffa1dc 85.5px,#ff81b3 97.7px,#ff557c 122.1px,#ff3a59 146.5px,#ff1a30 195.3px,#ff1023 219.8px,#f20818 244.2px,#ce0009 293px)"></i>
<i style="left:165px;top:352px;width:290px;background:linear-gradient(90deg,#00c6ff 0px,#06c5ff 6px,#13c4ff 12.1px,#33c2ff 24.2px,#81bdff 48.3px,#e3b7ff 72.5px,#ffb5ff 78.5px,#ffa1e4 84.6px,#ff81ba 96.7px,#ff5581 120.8px,#ff3a5d 145px,#ff1a33 193.3px,#ff1025 217.5px,#f4081a 241.7px,#d0000a 290px)"></i>
<i style="left:165px;top:354px;width:285px;background:linear-gradient(90deg,#00c1ff 0px,#14bfff 11.9px,#33bcff 23.8px,#7fb7ff 47.5px,#ddb1ff 71.2px,#f8b0ff 77.2px,#ffaaf8 80.2px,#ffa0eb 83.1px,#ff80c0 95px,#ff5586 118.8px,#ff3a61 142.5px,#ff1a36 190px,#ff1028 213.8px,#f7091c 237.5px,#d4000c 285px)"></i>
<i style="left:164px;top:356px;width:282px;background:linear-gradient(90deg,#00bcff 0px,#13baff 11.8px,#31b7ff 23.5px,#7ab2ff 47px,#d6acff 70.5px,#f0aaff 76.4px,#fda9ff 79.3px,#ffa1f4 82.2px,#ff81c7 94px,#ff558c 117.5px,#ff3a65 141px,#ff1a38 188px,#ff102a 211.5px,#f9091f 235px,#d6000d 282px)"></i>
<i style="left:163px;top:358px;width:279px;background:linear-gradient(90deg,#00b7ff 0px,#05b6ff 5.8px,#12b5ff 11.6px,#2fb2ff 23.2px,#76adff 46.5px,#cea6ff 69.8px,#ffa1fc 81.4px,#ff81cf 93px,#ff5691 116.2px,#ff3a6a 139.5px,#ff1a3b 186px,#fb0921 232.5px,#d9000f 279px)"></i>
<i style="left:163px;top:360px;width:274px;background:linear-gradient(90deg,#00b2ff 0px,#12b0ff 11.4px,#2fadff 22.8px,#74a8ff 45.7px,#c9a1ff 68.5px,#fa9dff 79.9px,#ff80d5 91.3px,#ff5596 114.2px,#ff3a6e 137px,#ff1a3f 182.7px,#fe0924 228.3px,#dc0011 274px)"></i>
<i style="left:162px;top:362px;width:271px;background:linear-gradient(90deg,#00aeff 0px,#05adff 5.6px,#11abff 11.3px,#2da9ff 22.6px,#6fa3ff 45.2px,#c29cff 67.8px,#f198ff 79px,#fe97ff 81.9px,#ff90f3 84.7px,#ff81dd 90.3px,#ff559c 112.9px,#ff3a73 135.5px,#ff2756 158.1px,#ff1a42 180.7px,#ff0926 225.8px,#de0012 271px)"></i>
<i style="left:161px;top:364px;width:268px;background:linear-gradient(90deg,#00a9ff 0px,#10a7ff 11.2px,#2ba4ff 22.3px,#6b9eff 44.7px,#bb97ff 67px,#e993ff 78.2px,#ff90fc 83.8px,#ff81e5 89.3px,#ff56a2 111.7px,#ff3a78 134px,#ff275a 156.3px,#ff1a45 178.7px,#ff0929 223.3px,#e10014 268px)"></i>
<i style="left:161px;top:366px;width:263px;background:linear-gradient(90deg,#00a5ff 0px,#11a2ff 11px,#2b9fff 21.9px,#6999ff 43.8px,#b692ff 65.8px,#e28fff 76.7px,#fa8dff 82.2px,#ff80ec 87.7px,#ff55a8 109.6px,#ff3a7d 131.5px,#ff1a49 175.3px,#ff092c 219.2px,#e40017 263px)"></i>
<i style="left:160px;top:368px;width:260px;background:linear-gradient(90deg,#00a1ff 0px,#109eff 10.8px,#299bff 21.7px,#6695ff 43.3px,#b08eff 65px,#db8aff 75.8px,#f188ff 81.2px,#fd87ff 84px,#ff81f5 86.7px,#ff55af 108.3px,#ff3a82 130px,#ff1a4c 173.3px,#ff092e 216.7px,#ff0628 227.5px,#f60322 238.3px,#e60019 260px)"></i>
<i style="left:159px;top:370px;width:257px;background:linear-gradient(90deg,#009cff 0px,#0e9aff 10.7px,#2797ff 21.4px,#6291ff 42.8px,#aa89ff 64.2px,#ff81fe 85.7px,#ff69d5 96.4px,#ff56b5 107.1px,#ff3a87 128.5px,#ff2767 149.9px,#ff1a50 171.3px,#ff0931 214.2px,#f90325 235.6px,#e9001b 257px)"></i>
<i style="left:159px;top:372px;width:252px;background:linear-gradient(90deg,#0098ff 0px,#0f95ff 10.5px,#2792ff 21px,#608cff 42px,#a585ff 63px,#f87dff 84px,#ff7afb 86.6px,#ff74f0 89.2px,#ff68dc 94.5px,#ff55bc 105px,#ff3a8c 126px,#ff1a54 168px,#ff0934 210px,#fc0328 231px,#ec001d 252px)"></i>
<i style="left:158px;top:374px;width:249px;background:linear-gradient(90deg,#0094ff 0px,#0e91ff 10.4px,#258eff 20.8px,#5d88ff 41.5px,#a081ff 62.2px,#ef79ff 83px,#ff74f9 88.2px,#ff68e5 93.4px,#ff56c3 103.8px,#ff3a92 124.5px,#ff2770 145.2px,#ff1a58 166px,#ff0937 207.5px,#fe032b 228.2px,#ef0020 249px)"></i>
<i style="left:157px;top:376px;width:246px;background:linear-gradient(90deg,#0090ff 0px,#0d8eff 10.2px,#238bff 20.5px,#5984ff 41px,#9a7dff 61.5px,#e775ff 82px,#fc73ff 87.1px,#ff69ed 92.2px,#ff56ca 102.5px,#ff3a98 123px,#ff2775 143.5px,#ff1a5c 164px,#ff093a 205px,#ff032e 225.5px,#f10022 246px)"></i>
<i style="left:157px;top:378px;width:241px;background:linear-gradient(90deg,#008cff 0px,#0e89ff 10px,#2486ff 20.1px,#5880ff 40.2px,#9679ff 60.2px,#e071ff 80.3px,#f46fff 85.4px,#ff6eff 87.9px,#ff68f5 90.4px,#ff55d2 100.4px,#ff3a9e 120.5px,#ff277a 140.6px,#ff1a60 160.7px,#ff093d 200.8px,#ff0331 220.9px,#f40025 241px)"></i>
<i style="left:156px;top:380px;width:238px;background:linear-gradient(90deg,#0089ff 0px,#1784ff 14.9px,#3a80ff 29.8px,#9175ff 59.5px,#ff69fe 89.2px,#ff4eca 104.1px,#ff3aa4 119px,#ff2071 148.8px,#ff1050 178.5px,#ff063a 208.2px,#f70028 238px)"></i>
<i style="left:156px;top:382px;width:234px;background:linear-gradient(90deg,#0085ff 0px,#1880ff 14.6px,#3a7cff 29.2px,#8e71ff 58.5px,#f965ff 87.8px,#ff60f6 91.4px,#ff59e8 95.1px,#ff4dd0 102.4px,#ff3aa9 117px,#ff2075 146.2px,#ff1054 175.5px,#ff063d 204.8px,#ff0234 219.4px,#f9002b 234px)"></i>
<i style="left:155px;top:384px;width:230px;background:linear-gradient(90deg,#0081ff 0px,#167dff 14.4px,#3778ff 28.8px,#886eff 57.5px,#ef62ff 86.2px,#fd60ff 89.8px,#ff5af3 93.4px,#ff4dd9 100.6px,#ff3ab1 115px,#ff207b 143.8px,#ff1058 172.5px,#fc002f 230px)"></i>
<i style="left:154px;top:386px;width:227px;background:linear-gradient(90deg,#007eff 0px,#077cff 7.1px,#1579ff 14.2px,#3575ff 28.4px,#836aff 56.8px,#e65eff 85.1px,#ff5afc 92.2px,#ff4ee2 99.3px,#ff3ab8 113.5px,#ff2080 141.9px,#ff105c 170.2px,#ff0032 227px)"></i>
<i style="left:154px;top:388px;width:223px;background:linear-gradient(90deg,#007aff 0px,#1576ff 13.9px,#3471ff 27.9px,#8167ff 55.8px,#e05bff 83.6px,#fb58ff 90.6px,#ff4de8 97.6px,#ff39be 111.5px,#ff2085 139.4px,#ff1060 167.2px,#ff0035 223px)"></i>
<i style="left:153px;top:390px;width:219px;background:linear-gradient(90deg,#0077ff 0px,#1472ff 13.7px,#326eff 27.4px,#7b64ff 54.8px,#d758ff 82.1px,#f155ff 89px,#fe53ff 92.4px,#ff4ef3 95.8px,#ff3ac7 109.5px,#ff208b 136.9px,#ff1066 164.2px,#ff0039 219px)"></i>
<i style="left:152px;top:392px;width:216px;background:linear-gradient(90deg,#0073ff 0px,#136fff 13.5px,#306bff 27px,#7760ff 54px,#cf55ff 81px,#ff4efc 94.5px,#ff3acf 108px,#ff2091 135px,#ff106a 162px,#ff003c 216px)"></i>
<i style="left:152px;top:394px;width:212px;background:linear-gradient(90deg,#0070ff 0px,#136cff 13.2px,#3067ff 26.5px,#745dff 53px,#c952ff 79.5px,#fb4bff 92.8px,#ff39d5 106px,#ff2097 132.5px,#ff106f 159px,#ff003f 212px)"></i>
<i style="left:151px;top:396px;width:209px;background:linear-gradient(90deg,#006dff 0px,#1269ff 13.1px,#2e64ff 26.1px,#705aff 52.2px,#c24fff 78.4px,#f149ff 91.4px,#fe47ff 94.7px,#ff42f4 98px,#ff39dd 104.5px,#ff209d 130.6px,#ff1073 156.8px,#ff0042 209px)"></i>
<i style="left:150px;top:398px;width:205px;background:linear-gradient(90deg,#006aff 0px,#1166ff 12.8px,#2b61ff 25.6px,#6b57ff 51.2px,#ba4cff 76.9px,#e746ff 89.7px,#ff43ff 96.1px,#ff3ae8 102.5px,#ff2bc2 115.3px,#ff20a5 128.1px,#ff107a 153.8px,#ff065c 179.4px,#ff0047 205px)"></i>
<i style="left:150px;top:400px;width:201px;background:linear-gradient(90deg,#0066ff 0px,#1162ff 12.6px,#2b5eff 25.1px,#6954ff 50.2px,#b549ff 75.4px,#e043ff 87.9px,#f840ff 94.2px,#ff3efb 97.4px,#ff39ef 100.5px,#ff20ab 125.6px,#ff107f 150.8px,#ff0660 175.9px,#ff004a 201px)"></i>
<i style="left:149px;top:402px;width:198px;background:linear-gradient(90deg,#0064ff 0px,#105fff 12.4px,#295bff 24.8px,#6551ff 49.5px,#ae47ff 74.2px,#d841ff 86.6px,#ee3eff 92.8px,#fa3cff 95.9px,#ff39f9 99px,#ff2bd1 111.4px,#ff20b2 123.8px,#ff1084 148.5px,#ff004e 198px)"></i>
<i style="left:148px;top:404px;width:194px;background:linear-gradient(90deg,#0061ff 0px,#0f5dff 12.1px,#2758ff 24.2px,#614fff 48.5px,#a644ff 72.8px,#fa39ff 97px,#ff20ba 121.2px,#ff108b 145.5px,#ff0053 194px)"></i>
<i style="left:148px;top:406px;width:190px;background:linear-gradient(90deg,#005eff 0px,#2755ff 23.8px,#5f4cff 47.5px,#a242ff 71.2px,#f236ff 95px,#fd35ff 98px,#ff32f6 100.9px,#ff2be2 106.9px,#ff20c1 118.8px,#ff1091 142.5px,#ff056f 166.2px,#ff0057 190px)"></i>
<i style="left:147px;top:408px;width:187px;background:linear-gradient(90deg,#005bff 0px,#0f57ff 11.7px,#2553ff 23.4px,#5b49ff 46.8px,#9c3fff 70.1px,#e934ff 93.5px,#fe31ff 99.3px,#ff2bec 105.2px,#ff20c9 116.9px,#ff1097 140.2px,#ff005b 187px)"></i>
<i style="left:146px;top:410px;width:183px;background:linear-gradient(90deg,#0058ff 0px,#0d54ff 11.4px,#2350ff 22.9px,#5747ff 45.8px,#953dff 68.6px,#de33ff 91.5px,#f230ff 97.2px,#fd2eff 100.1px,#ff2bf7 102.9px,#ff20d3 114.4px,#ff109f 137.2px,#ff067b 160.1px,#ff0061 183px)"></i>
<i style="left:146px;top:412px;width:179px;background:linear-gradient(90deg,#0055ff 0px,#234dff 22.4px,#5544ff 44.8px,#913bff 67.1px,#d730ff 89.5px,#fe2bff 100.7px,#ff20db 111.9px,#ff10a6 134.2px,#ff0581 156.6px,#ff0066 179px)"></i>
<i style="left:145px;top:414px;width:176px;background:linear-gradient(90deg,#0053ff 0px,#0d4fff 11px,#214bff 22px,#5242ff 44px,#8b39ff 66px,#cf2eff 88px,#f429ff 99px,#fe28ff 101.8px,#ff25f6 104.5px,#ff1fe4 110px,#ff10ad 132px,#ff0587 154px,#ff006b 176px)"></i>
<i style="left:144px;top:416px;width:172px;background:linear-gradient(90deg,#0050ff 0px,#1f48ff 21.5px,#4e40ff 43px,#8537ff 64.5px,#c52dff 86px,#e928ff 96.8px,#fc25ff 102.1px,#ff20f0 107.5px,#ff10b6 129px,#ff058e 150.5px,#ff0071 172px)"></i>
<i style="left:144px;top:418px;width:168px;background:linear-gradient(90deg,#004dff 0px,#2046ff 21px,#4c3dff 42px,#8134ff 63px,#bf2bff 84px,#e126ff 94.5px,#f323ff 99.8px,#ff20f9 105px,#ff10bd 126px,#ff0594 147px,#ff0077 168px)"></i>
<i style="left:143px;top:420px;width:165px;background:linear-gradient(90deg,#004bff 0px,#1e43ff 20.6px,#493bff 41.2px,#b729ff 82.5px,#fb1fff 103.1px,#ff10c6 123.8px,#ff059b 144.4px,#ff007c 165px)"></i>
<i style="left:142px;top:422px;width:161px;background:linear-gradient(90deg,#0048ff 0px,#1c41ff 20.1px,#4539ff 40.2px,#ae28ff 80.5px,#ee1eff 100.6px,#ff1bfe 105.7px,#ff17ed 110.7px,#ff10d0 120.8px,#ff05a4 140.9px,#ff0084 161px)"></i>
<i style="left:142px;top:424px;width:157px;background:linear-gradient(90deg,#0046ff 0px,#1c3eff 19.6px,#4437ff 39.2px,#a926ff 78.5px,#e61cff 98.1px,#f61aff 103px,#ff19ff 105.5px,#ff17f7 107.9px,#ff10d9 117.8px,#ff05ab 137.4px,#ff008a 157px)"></i>
<i style="left:141px;top:426px;width:154px;background:linear-gradient(90deg,#0043ff 0px,#1b3cff 19.2px,#4135ff 38.5px,#a224ff 77px,#dc1bff 96.2px,#fc16ff 105.9px,#ff0fe3 115.5px,#ff05b3 134.8px,#ff0091 154px)"></i>
<i style="left:140px;top:428px;width:150px;background:linear-gradient(90deg,#0041ff 0px,#093eff 9.4px,#193aff 18.8px,#3e33ff 37.5px,#9923ff 75px,#d11aff 93.8px,#ef15ff 103.1px,#ff13ff 107.8px,#ff10ef 112.5px,#ff05be 131.2px,#ff009a 150px)"></i>
<i style="left:140px;top:430px;width:146px;background:linear-gradient(90deg,#003eff 0px,#1938ff 18.2px,#3c31ff 36.5px,#9421ff 73px,#c919ff 91.2px,#e614ff 100.4px,#f512ff 104.9px,#ff0ff9 109.5px,#ff05c6 127.8px,#ff00a1 146px)"></i>
<i style="left:139px;top:432px;width:143px;background:linear-gradient(90deg,#003cff 0px,#1736ff 17.9px,#3a2fff 35.8px,#8e20ff 71.5px,#f90fff 107.2px,#ff0cf6 111.7px,#ff0ae8 116.2px,#ff05d0 125.1px,#ff00a9 143px)"></i>
<i style="left:138px;top:434px;width:139px;background:linear-gradient(90deg,#003aff 0px,#1634ff 17.4px,#362dff 34.8px,#871fff 69.5px,#ec0eff 104.2px,#fa0cff 108.6px,#ff0af6 112.9px,#ff05dc 121.6px,#ff00b4 139px)"></i>
<i style="left:138px;top:436px;width:135px;background:linear-gradient(90deg,#0038ff 0px,#1632ff 16.9px,#352bff 33.8px,#821dff 67.5px,#e20eff 101.2px,#fd0aff 109.7px,#ff05e6 118.1px,#ff00bc 135px)"></i>
<i style="left:137px;top:438px;width:132px;background:linear-gradient(90deg,#0036ff 0px,#1530ff 16.5px,#3329ff 33px,#7c1cff 66px,#d80dff 99px,#f209ff 107.2px,#ff07ff 111.4px,#ff05f2 115.5px,#ff00c6 132px)"></i>
<i style="left:136px;top:440px;width:129px;background:linear-gradient(90deg,#0034ff 0px,#132eff 16.1px,#3028ff 32.2px,#761aff 64.5px,#ce0cff 96.8px,#ff05fd 112.9px,#ff00d0 129px)"></i>
<i style="left:136px;top:442px;width:124px;background:linear-gradient(90deg,#0031ff 0px,#132cff 15.5px,#2f26ff 31px,#7119ff 62px,#c30cff 93px,#f205ff 108.5px,#ff03ff 112.4px,#ff01f3 116.2px,#ff00dd 124px)"></i>
<i style="left:135px;top:444px;width:121px;background:linear-gradient(90deg,#002fff 0px,#122aff 15.1px,#2c24ff 30.2px,#6c18ff 60.5px,#ba0bff 90.8px,#e604ff 105.9px,#fe01ff 113.4px,#ff00e9 121px)"></i>
<i style="left:134px;top:446px;width:118px;background:linear-gradient(90deg,#002eff 0px,#1128ff 14.8px,#2a23ff 29.5px,#6717ff 59px,#b10aff 88.5px,#db04ff 103.2px,#f201ff 110.6px,#fe00ff 114.3px,#ff00f5 118px)"></i>
<i style="left:134px;top:448px;width:113px;background:linear-gradient(90deg,#002bff 0px,#2821ff 28.2px,#6216ff 56.5px,#a70aff 84.8px,#f900ff 113px)"></i>
<i style="left:133px;top:450px;width:110px;background:linear-gradient(90deg,#002aff 0px,#0f25ff 13.8px,#261fff 27.5px,#5d15ff 55px,#9e09ff 82.5px,#ec00ff 110px)"></i>
<i style="left:132px;top:452px;width:107px;background:linear-gradient(90deg,#0028ff 0px,#241eff 26.8px,#5814ff 53.5px,#9609ff 80.2px,#e000ff 107px)"></i>
<i style="left:132px;top:454px;width:102px;background:linear-gradient(90deg,#0026ff 0px,#231cff 25.5px,#5312ff 51px,#8d08ff 76.5px,#d100ff 102px)"></i>
<i style="left:131px;top:456px;width:99px;background:linear-gradient(90deg,#0024ff 0px,#201bff 24.8px,#4f11ff 49.5px,#8608ff 74.2px,#c600ff 99px)"></i>
<i style="left:130px;top:458px;width:96px;background:linear-gradient(90deg,#0022ff 0px,#1e1aff 24px,#4b10ff 48px,#bb00ff 96px)"></i>
<i style="left:130px;top:460px;width:91px;background:linear-gradient(90deg,#0020ff 0px,#1d18ff 22.8px,#4610ff 45.5px,#ae00ff 91px)"></i>
<i style="left:129px;top:462px;width:88px;background:linear-gradient(90deg,#001fff 0px,#1b17ff 22px,#420fff 44px,#a400ff 88px)"></i>
<i style="left:128px;top:464px;width:85px;background:linear-gradient(90deg,#001dff 0px,#1915ff 21.2px,#3e0eff 42.5px,#9a00ff 85px)"></i>
<i style="left:128px;top:466px;width:80px;background:linear-gradient(90deg,#001bff 0px,#1814ff 20px,#3a0dff 40px,#8f00ff 80px)"></i>
<i style="left:127px;top:468px;width:77px;background:linear-gradient(90deg,#001aff 0px,#1613ff 19.2px,#360cff 38.5px,#8600ff 77px)"></i>
<i style="left:126px;top:470px;width:74px;background:linear-gradient(90deg,#0018ff 0px,#1412ff 18.5px,#330bff 37px,#7d00ff 74px)"></i>
<i style="left:126px;top:472px;width:69px;background:linear-gradient(90deg,#0016ff 0px,#1310ff 17.2px,#2f0aff 34.5px,#7200ff 69px)"></i>
<i style="left:125px;top:474px;width:66px;background:linear-gradient(90deg,#0015ff 0px,#120fff 16.5px,#2c0aff 33px,#6a00ff 66px)"></i>
<i style="left:124px;top:476px;width:63px;background:linear-gradient(90deg,#0013ff 0px,#2809ff 31.5px,#6300ff 63px)"></i>
<i style="left:124px;top:478px;width:58px;background:linear-gradient(90deg,#0012ff 0px,#2508ff 29px,#5900ff 58px)"></i>
<i style="left:123px;top:480px;width:55px;background:linear-gradient(90deg,#0010ff 0px,#2207ff 27.5px,#5200ff 55px)"></i>
<i style="left:122px;top:482px;width:52px;background:linear-gradient(90deg,#000fff 0px,#1f07ff 26px,#4b00ff 52px)"></i>
<i style="left:122px;top:484px;width:48px;background:linear-gradient(90deg,#000eff 0px,#1c06ff 24px,#4400ff 48px)"></i>
<i style="left:121px;top:486px;width:44px;background:linear-gradient(90deg,#000cff 0px,#1905ff 22px,#3c00ff 44px)"></i>
<i style="left:120px;top:488px;width:41px;background:linear-gradient(90deg,#000bff 0px,#1605ff 20.5px,#3600ff 41px)"></i>
<i style="left:120px;top:490px;width:37px;background:linear-gradient(90deg,#000aff 0px,#3000ff 37px)"></i>
<i style="left:119px;top:492px;width:33px;background:linear-gradient(90deg,#0008ff 0px,#1103ff 16.5px,#2900ff 33px)"></i>
<i style="left:118px;top:494px;width:30px;background:linear-gradient(90deg,#0007ff 0px,#2300ff 30px)"></i>
<i style="left:118px;top:496px;width:26px;background:linear-gradient(90deg,#0006ff 0px,#1e00ff 26px)"></i>
<i style="left:117px;top:498px;width:22px;background:linear-gradient(90deg,#0005ff 0px,#1800ff 22px)"></i>
<i style="left:117px;top:500px;width:18px;background:linear-gradient(90deg,#0004ff 0px,#1300ff 18px)"></i>
<i style="left:116px;top:502px;width:15px;background:linear-gradient(90deg,#0003ff 0px,#0e00ff 15px)"></i>
<i style="left:115px;top:504px;width:11px;background:linear-gradient(90deg,#0002ff 0px,#0900ff 11px)"></i>
<i style="left:115px;top:506px;width:7px;background:linear-gradient(90deg,#0001ff 0px,#0500ff 7px)"></i></div>
<div class="a" style="left:1022.1px;top:687px;width:1.4px;height:6.5px;background:#c0c0c0"></div>
<div class="a" style="left:1016.5px;top:685.8px;width:6px;height:1.4px;background:#c0c0c0"></div>
<div class="a t16 ctr" style="left:1022.8px;top:696px">0</div>
<div class="a t16 rt" style="left:1016px;top:678.0px">0</div>
<div class="a" style="left:1099.3px;top:687px;width:1.4px;height:6.5px;background:#c0c0c0"></div>
<div class="a" style="left:1016.5px;top:620.9px;width:6px;height:1.4px;background:#c0c0c0"></div>
<div class="a t16 ctr" style="left:1099.2px;top:696px">0,1</div>
<div class="a t16 rt" style="left:1016px;top:614.1px">0,1</div>
<div class="a" style="left:1176.6px;top:687px;width:1.4px;height:6.5px;background:#c0c0c0"></div>
<div class="a" style="left:1016.5px;top:556.0px;width:6px;height:1.4px;background:#c0c0c0"></div>
<div class="a t16 ctr" style="left:1176.5px;top:696px">0,2</div>
<div class="a t16 rt" style="left:1016px;top:549.2px">0,2</div>
<div class="a" style="left:1253.8px;top:687px;width:1.4px;height:6.5px;background:#c0c0c0"></div>
<div class="a" style="left:1016.5px;top:491.0px;width:6px;height:1.4px;background:#c0c0c0"></div>
<div class="a t16 ctr" style="left:1253.8px;top:696px">0,3</div>
<div class="a t16 rt" style="left:1016px;top:484.2px">0,3</div>
<div class="a" style="left:1331.1px;top:687px;width:1.4px;height:6.5px;background:#c0c0c0"></div>
<div class="a" style="left:1016.5px;top:426.1px;width:6px;height:1.4px;background:#c0c0c0"></div>
<div class="a t16 ctr" style="left:1331.0px;top:696px">0,4</div>
<div class="a t16 rt" style="left:1016px;top:419.3px">0,4</div>
<div class="a" style="left:1408.3px;top:687px;width:1.4px;height:6.5px;background:#c0c0c0"></div>
<div class="a" style="left:1016.5px;top:361.2px;width:6px;height:1.4px;background:#c0c0c0"></div>
<div class="a t16 ctr" style="left:1408.2px;top:696px">0,5</div>
<div class="a t16 rt" style="left:1016px;top:354.4px">0,5</div>
<div class="a" style="left:1485.6px;top:687px;width:1.4px;height:6.5px;background:#c0c0c0"></div>
<div class="a" style="left:1016.5px;top:296.3px;width:6px;height:1.4px;background:#c0c0c0"></div>
<div class="a t16 ctr" style="left:1485.5px;top:696px">0,6</div>
<div class="a t16 rt" style="left:1016px;top:289.5px">0,6</div>
<div class="a" style="left:1562.8px;top:687px;width:1.4px;height:6.5px;background:#c0c0c0"></div>
<div class="a" style="left:1016.5px;top:231.4px;width:6px;height:1.4px;background:#c0c0c0"></div>
<div class="a t16 ctr" style="left:1562.8px;top:696px">0,7</div>
<div class="a t16 rt" style="left:1016px;top:224.6px">0,7</div>
<div class="a" style="left:1640.1px;top:687px;width:1.4px;height:6.5px;background:#c0c0c0"></div>
<div class="a" style="left:1016.5px;top:166.4px;width:6px;height:1.4px;background:#c0c0c0"></div>
<div class="a t16 ctr" style="left:1640.0px;top:696px">0,8</div>
<div class="a t16 rt" style="left:1016px;top:159.6px">0,8</div>
<svg class="a" style="left:0;top:0" width="1688" height="1028" viewBox="0 0 1688 1028"><rect x="1246.4" y="288.8" width="15" height="15" fill="none" stroke="#f2f2f2" stroke-width="1.5"/><rect x="1339.5" y="350.9" width="15" height="15" fill="none" stroke="#f2f2f2" stroke-width="1.5"/><rect x="1509.4" y="464.5" width="15" height="15" fill="none" stroke="#f2f2f2" stroke-width="1.5"/><rect x="1188.9" y="464.5" width="15" height="15" fill="none" stroke="#f2f2f2" stroke-width="1.5"/><rect x="1262.8" y="578.7" width="15" height="15" fill="none" stroke="#f2f2f2" stroke-width="1.5"/><rect x="1131.5" y="639.1" width="15" height="15" fill="none" stroke="#f2f2f2" stroke-width="1.5"/><circle cx="1251.4" cy="280.4" r="5" fill="#00b818" stroke="#000" stroke-width="1.3"/><circle cx="1348.3" cy="345.0" r="5" fill="#b8a800" stroke="#000" stroke-width="1.3"/><circle cx="1526.1" cy="470.8" r="5" fill="#d00000" stroke="#600000" stroke-width="1.3"/><circle cx="1196.0" cy="463.7" r="5" fill="#00b0b0" stroke="#000" stroke-width="1.3"/><circle cx="1242.2" cy="606.4" r="5" fill="#b000a0" stroke="#500050" stroke-width="1.3"/><circle cx="1141.5" cy="653.0" r="5" fill="#0000b0" stroke="#000040" stroke-width="1.3"/><circle cx="1253.1" cy="476.7" r="5" fill="#fff" stroke="#000" stroke-width="1.3"/><rect x="1258.0" y="465.1" width="14.3" height="14.3" fill="none" stroke="#000" stroke-width="1.9"/></svg>
<div class="a" style="left:1437.5px;top:141.5px;width:234.5px;height:204.3px;background:#2b2b2b"></div>
<div class="a" style="left:1439.6px;top:143.6px;width:231.4px;height:200.6px;background:#858585"></div>
<div class="a cie" style="left:1441px;top:145px;width:228px;height:198px;overflow:hidden"><i style="left:0;top:0px;width:228px;background:linear-gradient(90deg,#70ffc4 0px,#c4ffc0 114px,#f5ffbd 171px,#fffcbb 185.2px,#fff0b1 199.5px,#ffda9f 228px)"></i>
<i style="left:0;top:2px;width:228px;background:linear-gradient(90deg,#70ffc5 0px,#c5ffc1 114px,#f6ffbe 171px,#fffbbb 185.2px,#ffefb1 199.5px,#ffd9a0 228px)"></i>
<i style="left:0;top:4px;width:228px;background:linear-gradient(90deg,#71ffc6 0px,#c6ffc2 114px,#f7ffc0 171px,#fffabb 185.2px,#ffeeb1 199.5px,#ffd8a0 228px)"></i>
<i style="left:0;top:6px;width:228px;background:linear-gradient(90deg,#72ffc7 0px,#c7ffc3 114px,#f8ffc1 171px,#ffffc0 178.1px,#fff9bb 185.2px,#ffecb2 199.5px,#ffd6a0 228px)"></i>
<i style="left:0;top:8px;width:228px;background:linear-gradient(90deg,#72ffc8 0px,#c8ffc4 114px,#faffc2 171px,#fff7bb 185.2px,#ffebb2 199.5px,#ffd5a0 228px)"></i>
<i style="left:0;top:10px;width:228px;background:linear-gradient(90deg,#73ffc9 0px,#c9ffc5 114px,#fbffc3 171px,#ffd4a1 228px)"></i>
<i style="left:0;top:12px;width:228px;background:linear-gradient(90deg,#74ffca 0px,#caffc6 114px,#fcffc4 171px,#ffd3a1 228px)"></i>
<i style="left:0;top:14px;width:228px;background:linear-gradient(90deg,#75ffcb 0px,#cbffc7 114px,#feffc5 171px,#ffd2a1 228px)"></i>
<i style="left:0;top:16px;width:228px;background:linear-gradient(90deg,#75ffcc 0px,#ccffc9 114px,#ffffc7 171px,#ffd1a1 228px)"></i>
<i style="left:0;top:18px;width:228px;background:linear-gradient(90deg,#76ffcd 0px,#cdffca 114px,#fffec7 171px,#ffd0a1 228px)"></i>
<i style="left:0;top:20px;width:228px;background:linear-gradient(90deg,#77ffce 0px,#ceffcb 114px,#fffdc7 171px,#ffcfa2 228px)"></i>
<i style="left:0;top:22px;width:228px;background:linear-gradient(90deg,#78ffd0 0px,#d0ffcc 114px,#fffbc7 171px,#ffcea2 228px)"></i>
<i style="left:0;top:24px;width:228px;background:linear-gradient(90deg,#78ffd1 0px,#d1ffcd 114px,#eaffcc 142.5px,#f7ffcc 156.8px,#fffac7 171px,#ffcda2 228px)"></i>
<i style="left:0;top:26px;width:228px;background:linear-gradient(90deg,#79ffd2 0px,#d2ffcf 114px,#ebffce 142.5px,#f8ffcd 156.8px,#ffffcd 163.9px,#fff9c8 171px,#ffcca2 228px)"></i>
<i style="left:0;top:28px;width:228px;background:linear-gradient(90deg,#7affd3 0px,#d3ffd0 114px,#ecffcf 142.5px,#f9ffce 156.8px,#fff7c8 171px,#ffcba2 228px)"></i>
<i style="left:0;top:30px;width:228px;background:linear-gradient(90deg,#7bffd4 0px,#d4ffd1 114px,#edffd0 142.5px,#fbffd0 156.8px,#fff6c8 171px,#ffcaa3 228px)"></i>
<i style="left:0;top:32px;width:228px;background:linear-gradient(90deg,#7bffd5 0px,#d5ffd2 114px,#efffd1 142.5px,#fcffd1 156.8px,#fff5c8 171px,#ffc9a3 228px)"></i>
<i style="left:0;top:34px;width:228px;background:linear-gradient(90deg,#7cffd6 0px,#d6ffd3 114px,#f0ffd3 142.5px,#fdffd2 156.8px,#fff4c8 171px,#ffc8a3 228px)"></i>
<i style="left:0;top:36px;width:228px;background:linear-gradient(90deg,#7dffd7 0px,#d7ffd5 114px,#f1ffd4 142.5px,#feffd3 156.8px,#fff2c9 171px,#ffc7a3 228px)"></i>
<i style="left:0;top:38px;width:228px;background:linear-gradient(90deg,#7effd9 0px,#d9ffd6 114px,#f2ffd5 142.5px,#fffed4 156.8px,#fff1c9 171px,#ffc6a3 228px)"></i>
<i style="left:0;top:40px;width:228px;background:linear-gradient(90deg,#7effda 0px,#daffd7 114px,#f4ffd6 142.5px,#fffdd4 156.8px,#fff0c9 171px,#ffc5a4 228px)"></i>
<i style="left:0;top:42px;width:228px;background:linear-gradient(90deg,#7fffdb 0px,#dbffd8 114px,#f5ffd8 142.5px,#fffcd4 156.8px,#ffefc9 171px,#ffc4a4 228px)"></i>
<i style="left:0;top:44px;width:228px;background:linear-gradient(90deg,#80ffdc 0px,#dcffda 114px,#f6ffd9 142.5px,#fffad5 156.8px,#ffedc9 171px,#ffc3a4 228px)"></i>
<i style="left:0;top:46px;width:228px;background:linear-gradient(90deg,#81ffdd 0px,#ddffdb 114px,#f8ffda 142.5px,#fff9d5 156.8px,#ffecca 171px,#ffc2a4 228px)"></i>
<i style="left:0;top:48px;width:228px;background:linear-gradient(90deg,#82ffdf 0px,#deffdc 114px,#f9ffdc 142.5px,#fff8d5 156.8px,#ffebca 171px,#ffc1a5 228px)"></i>
<i style="left:0;top:50px;width:228px;background:linear-gradient(90deg,#82ffe0 0px,#e0ffdd 114px,#faffdd 142.5px,#fff6d5 156.8px,#ffeaca 171px,#ffc0a5 228px)"></i>
<i style="left:0;top:52px;width:228px;background:linear-gradient(90deg,#83ffe1 0px,#e1ffdf 114px,#fbffde 142.5px,#ffe9ca 171px,#ffbfa5 228px)"></i>
<i style="left:0;top:54px;width:228px;background:linear-gradient(90deg,#84ffe2 0px,#e2ffe0 114px,#fdffdf 142.5px,#ffe7ca 171px,#ffbea5 228px)"></i>
<i style="left:0;top:56px;width:228px;background:linear-gradient(90deg,#85ffe3 0px,#e3ffe1 114px,#feffe1 142.5px,#ffe6ca 171px,#ffbda5 228px)"></i>
<i style="left:0;top:58px;width:228px;background:linear-gradient(90deg,#86ffe5 0px,#e4ffe3 114px,#ffffe2 142.5px,#ffe5cb 171px,#ffbca6 228px)"></i>
<i style="left:0;top:60px;width:228px;background:linear-gradient(90deg,#86ffe6 0px,#e6ffe4 114px,#fffde2 142.5px,#ffe4cb 171px,#ffbba6 228px)"></i>
<i style="left:0;top:62px;width:228px;background:linear-gradient(90deg,#87ffe7 0px,#e7ffe5 114px,#fffce2 142.5px,#ffe3cb 171px,#ffbaa6 228px)"></i>
<i style="left:0;top:64px;width:228px;background:linear-gradient(90deg,#88ffe8 0px,#e8ffe7 114px,#f6ffe6 128.2px,#fffae2 142.5px,#ffe1cb 171px,#ffb9a6 228px)"></i>
<i style="left:0;top:66px;width:228px;background:linear-gradient(90deg,#89ffea 0px,#e9ffe8 114px,#f7ffe8 128.2px,#fff9e2 142.5px,#ffe0cb 171px,#ffb8a6 228px)"></i>
<i style="left:0;top:68px;width:228px;background:linear-gradient(90deg,#8affeb 0px,#ebffe9 114px,#f8ffe9 128.2px,#ffffe9 135.4px,#fff8e2 142.5px,#ffdfcb 171px,#ffb7a7 228px)"></i>
<i style="left:0;top:70px;width:228px;background:linear-gradient(90deg,#8bffec 0px,#ecffeb 114px,#faffeb 128.2px,#fff7e3 142.5px,#ffdecc 171px,#ffb6a7 228px)"></i>
<i style="left:0;top:72px;width:228px;background:linear-gradient(90deg,#8bffed 0px,#edffec 114px,#fbffec 128.2px,#fff5e3 142.5px,#ffddcc 171px,#ffb5a7 228px)"></i>
<i style="left:0;top:74px;width:228px;background:linear-gradient(90deg,#8cffef 0px,#efffee 114px,#fcffed 128.2px,#fff4e3 142.5px,#ffdccc 171px,#ffb4a7 228px)"></i>
<i style="left:0;top:76px;width:228px;background:linear-gradient(90deg,#8dfff0 0px,#f0ffef 114px,#feffef 128.2px,#fff3e3 142.5px,#ffdacc 171px,#ffb3a7 228px)"></i>
<i style="left:0;top:78px;width:228px;background:linear-gradient(90deg,#8efff1 0px,#f1fff0 114px,#fffff0 128.2px,#fff1e3 142.5px,#ffd9cc 171px,#ffb3a8 228px)"></i>
<i style="left:0;top:80px;width:228px;background:linear-gradient(90deg,#8ffff3 0px,#f3fff2 114px,#fffdf0 128.2px,#fff0e3 142.5px,#ffd8cc 171px,#ffb2a8 228px)"></i>
<i style="left:0;top:82px;width:228px;background:linear-gradient(90deg,#90fff4 0px,#f4fff3 114px,#fffcf0 128.2px,#ffefe4 142.5px,#ffd7cd 171px,#ffb1a8 228px)"></i>
<i style="left:0;top:84px;width:228px;background:linear-gradient(90deg,#91fff5 0px,#f5fff5 114px,#fffbf1 128.2px,#ffede4 142.5px,#ffd6cd 171px,#ffb0a8 228px)"></i>
<i style="left:0;top:86px;width:228px;background:linear-gradient(90deg,#92fff7 0px,#c1fff6 57px,#f7fff6 114px,#fff9f1 128.2px,#ffece4 142.5px,#ffd5cd 171px,#ffafa8 228px)"></i>
<i style="left:0;top:88px;width:228px;background:linear-gradient(90deg,#93fff8 0px,#c2fff8 57px,#f8fff8 114px,#fffff8 121.1px,#fff8f1 128.2px,#ffebe4 142.5px,#ffd3cd 171px,#ffaea9 228px)"></i>
<i style="left:0;top:90px;width:228px;background:linear-gradient(90deg,#93fff9 0px,#f9fff9 114px,#fff7f1 128.2px,#ffeae4 142.5px,#ffd2cd 171px,#ffada9 228px)"></i>
<i style="left:0;top:92px;width:228px;background:linear-gradient(90deg,#94fffb 0px,#fbfffb 114px,#ffd1ce 171px,#ffaca9 228px)"></i>
<i style="left:0;top:94px;width:228px;background:linear-gradient(90deg,#95fffc 0px,#fcfffc 114px,#ffd0ce 171px,#ffaba9 228px)"></i>
<i style="left:0;top:96px;width:228px;background:linear-gradient(90deg,#96fffd 0px,#fdfffe 114px,#ffcfce 171px,#ffaaa9 228px)"></i>
<i style="left:0;top:98px;width:228px;background:linear-gradient(90deg,#97ffff 0px,#ffffff 114px,#ffcece 171px,#ffa9a9 228px)"></i>
<i style="left:0;top:100px;width:228px;background:linear-gradient(90deg,#97feff 0px,#fffdff 114px,#ffcdce 171px,#ffa8aa 228px)"></i>
<i style="left:0;top:102px;width:228px;background:linear-gradient(90deg,#97fcff 0px,#fffcff 114px,#ffccce 171px,#ffa7aa 228px)"></i>
<i style="left:0;top:104px;width:228px;background:linear-gradient(90deg,#98fbff 0px,#fefaff 114px,#ffcbcf 171px,#ffa7aa 228px)"></i>
<i style="left:0;top:106px;width:228px;background:linear-gradient(90deg,#98faff 0px,#fef9ff 114px,#ffc9cf 171px,#ffa6aa 228px)"></i>
<i style="left:0;top:108px;width:228px;background:linear-gradient(90deg,#98f8ff 0px,#fef7ff 114px,#ffc8cf 171px,#ffa5aa 228px)"></i>
<i style="left:0;top:110px;width:228px;background:linear-gradient(90deg,#98f7ff 0px,#fef6ff 114px,#ffc7cf 171px,#ffa4ab 228px)"></i>
<i style="left:0;top:112px;width:228px;background:linear-gradient(90deg,#98f6ff 0px,#fef4ff 114px,#ffc6cf 171px,#ffa3ab 228px)"></i>
<i style="left:0;top:114px;width:228px;background:linear-gradient(90deg,#98f4ff 0px,#fef3ff 114px,#ffc5cf 171px,#ffa2ab 228px)"></i>
<i style="left:0;top:116px;width:228px;background:linear-gradient(90deg,#98f3ff 0px,#fef2ff 114px,#ffc4cf 171px,#ffa1ab 228px)"></i>
<i style="left:0;top:118px;width:228px;background:linear-gradient(90deg,#98f1ff 0px,#fef0ff 114px,#ffc3d0 171px,#ffa0ab 228px)"></i>
<i style="left:0;top:120px;width:228px;background:linear-gradient(90deg,#98f0ff 0px,#feefff 114px,#ffc2d0 171px,#ff9fac 228px)"></i>
<i style="left:0;top:122px;width:228px;background:linear-gradient(90deg,#98efff 0px,#fdedff 114px,#ffc1d0 171px,#ff9fac 228px)"></i>
<i style="left:0;top:124px;width:228px;background:linear-gradient(90deg,#99edff 0px,#fdecff 114px,#ffc0d0 171px,#ff9eac 228px)"></i>
<i style="left:0;top:126px;width:228px;background:linear-gradient(90deg,#99ecff 0px,#fdeaff 114px,#ffbfd0 171px,#ff9dac 228px)"></i>
<i style="left:0;top:128px;width:228px;background:linear-gradient(90deg,#99ebff 0px,#fde9ff 114px,#ffbed0 171px,#ff9cac 228px)"></i>
<i style="left:0;top:130px;width:228px;background:linear-gradient(90deg,#99eaff 0px,#fde8ff 114px,#ffbdd1 171px,#ff9bac 228px)"></i>
<i style="left:0;top:132px;width:228px;background:linear-gradient(90deg,#99e8ff 0px,#fde6ff 114px,#ffbcd1 171px,#ff9aad 228px)"></i>
<i style="left:0;top:134px;width:228px;background:linear-gradient(90deg,#99e7ff 0px,#fde5ff 114px,#ffbad1 171px,#ff99ad 228px)"></i>
<i style="left:0;top:136px;width:228px;background:linear-gradient(90deg,#99e6ff 0px,#fde3ff 114px,#ffb9d1 171px,#ff99ad 228px)"></i>
<i style="left:0;top:138px;width:228px;background:linear-gradient(90deg,#99e4ff 0px,#fde2ff 114px,#ffb8d1 171px,#ff98ad 228px)"></i>
<i style="left:0;top:140px;width:228px;background:linear-gradient(90deg,#99e3ff 0px,#fde1ff 114px,#ffb7d1 171px,#ff97ad 228px)"></i>
<i style="left:0;top:142px;width:228px;background:linear-gradient(90deg,#99e2ff 0px,#fcdfff 114px,#ffb6d2 171px,#ff96ae 228px)"></i>
<i style="left:0;top:144px;width:228px;background:linear-gradient(90deg,#9ae1ff 0px,#fcdeff 114px,#ffb5d2 171px,#ff95ae 228px)"></i>
<i style="left:0;top:146px;width:228px;background:linear-gradient(90deg,#9adfff 0px,#fcddff 114px,#ffb4d2 171px,#ff94ae 228px)"></i>
<i style="left:0;top:148px;width:228px;background:linear-gradient(90deg,#9adeff 0px,#fcdbff 114px,#ffb3d2 171px,#ff93ae 228px)"></i>
<i style="left:0;top:150px;width:228px;background:linear-gradient(90deg,#9addff 0px,#fcdaff 114px,#ffb2d2 171px,#ff93ae 228px)"></i>
<i style="left:0;top:152px;width:228px;background:linear-gradient(90deg,#9adcff 0px,#fcd9ff 114px,#ffb1d2 171px,#ff92ae 228px)"></i>
<i style="left:0;top:154px;width:228px;background:linear-gradient(90deg,#9adaff 0px,#fcd7ff 114px,#ffb0d2 171px,#ff91af 228px)"></i>
<i style="left:0;top:156px;width:228px;background:linear-gradient(90deg,#9ad9ff 0px,#fcd6ff 114px,#ffafd3 171px,#ff90af 228px)"></i>
<i style="left:0;top:158px;width:228px;background:linear-gradient(90deg,#9ad8ff 0px,#fcd5ff 114px,#ffaed3 171px,#ff8faf 228px)"></i>
<i style="left:0;top:160px;width:228px;background:linear-gradient(90deg,#9ad7ff 0px,#fcd3ff 114px,#ffadd3 171px,#ff8eaf 228px)"></i>
<i style="left:0;top:162px;width:228px;background:linear-gradient(90deg,#9ad5ff 0px,#fbd2ff 114px,#ffacd3 171px,#ff8eaf 228px)"></i>
<i style="left:0;top:164px;width:228px;background:linear-gradient(90deg,#9ad4ff 0px,#fbd1ff 114px,#ffabd3 171px,#ff8db0 228px)"></i>
<i style="left:0;top:166px;width:228px;background:linear-gradient(90deg,#9bd3ff 0px,#fbcfff 114px,#ffaad3 171px,#ff8cb0 228px)"></i>
<i style="left:0;top:168px;width:228px;background:linear-gradient(90deg,#9bd2ff 0px,#fbceff 114px,#ffa9d4 171px,#ff8bb0 228px)"></i>
<i style="left:0;top:170px;width:228px;background:linear-gradient(90deg,#9bd1ff 0px,#fbcdff 114px,#ffa8d4 171px,#ff8ab0 228px)"></i>
<i style="left:0;top:172px;width:228px;background:linear-gradient(90deg,#9bcfff 0px,#fbccff 114px,#ffa7d4 171px,#ff8ab0 228px)"></i>
<i style="left:0;top:174px;width:228px;background:linear-gradient(90deg,#9bceff 0px,#fbcaff 114px,#ffa6d4 171px,#ff89b0 228px)"></i>
<i style="left:0;top:176px;width:228px;background:linear-gradient(90deg,#9bcdff 0px,#fbc9ff 114px,#ffa5d4 171px,#ff88b1 228px)"></i>
<i style="left:0;top:178px;width:228px;background:linear-gradient(90deg,#9bccff 0px,#fbc8ff 114px,#ffa4d4 171px,#ff87b1 228px)"></i>
<i style="left:0;top:180px;width:228px;background:linear-gradient(90deg,#9bcbff 0px,#fbc7ff 114px,#ffa3d4 171px,#ff86b1 228px)"></i>
<i style="left:0;top:182px;width:228px;background:linear-gradient(90deg,#9bcaff 0px,#fbc5ff 114px,#ffa2d5 171px,#ff86b1 228px)"></i>
<i style="left:0;top:184px;width:228px;background:linear-gradient(90deg,#9bc8ff 0px,#fac4ff 114px,#ffbdf7 128.2px,#ffb3ea 142.5px,#ffa2d5 171px,#ff85b1 228px)"></i>
<i style="left:0;top:186px;width:228px;background:linear-gradient(90deg,#9cc7ff 0px,#fac3ff 114px,#ffbcf7 128.2px,#ffb2eb 142.5px,#ffa1d5 171px,#ff84b1 228px)"></i>
<i style="left:0;top:188px;width:228px;background:linear-gradient(90deg,#9cc6ff 0px,#fac2ff 114px,#ffbbf7 128.2px,#ffb1eb 142.5px,#ffa0d5 171px,#ff83b2 228px)"></i>
<i style="left:0;top:190px;width:228px;background:linear-gradient(90deg,#9cc5ff 0px,#fac0ff 114px,#ffbaf7 128.2px,#ffb0eb 142.5px,#ff9fd5 171px,#ff82b2 228px)"></i>
<i style="left:0;top:192px;width:228px;background:linear-gradient(90deg,#9cc4ff 0px,#fabfff 114px,#ffb9f7 128.2px,#ffafeb 142.5px,#ff9ed5 171px,#ff82b2 228px)"></i>
<i style="left:0;top:194px;width:228px;background:linear-gradient(90deg,#9cc3ff 0px,#fabeff 114px,#ffb7f7 128.2px,#ffaeeb 142.5px,#ff9dd5 171px,#ff81b2 228px)"></i>
<i style="left:0;top:196px;width:228px;background:linear-gradient(90deg,#9cc2ff 0px,#fabdff 114px,#ffb6f7 128.2px,#ffadeb 142.5px,#ff9cd6 171px,#ff80b2 228px)"></i></div>
<svg class="a" style="left:0;top:0" width="1688" height="1028"><circle cx="1489.2" cy="263.6" r="5" fill="#b8b8b8" stroke="#222" stroke-width="1.2"/><circle cx="1496.4" cy="266.5" r="5" fill="#fff" stroke="#000" stroke-width="1.2"/><rect x="1547" y="236.5" width="14" height="14" fill="#fff" stroke="#000" stroke-width="2"/></svg>
<div class="a" style="left:4px;top:962px;width:1680px;height:61.5px;background:linear-gradient(180deg,#454545 0,#3a3a3a 40%,#2a2a2a 100%)"></div>
<div class="a" style="left:5.3px;top:962px;width:149.3px;height:60.9px;border-radius:5px 5px 0 0;background:linear-gradient(180deg,#969696 0,#8a8a8a 12%,#7c7c7c 50%,#686868 100%);box-shadow:inset 0 1px 0 #a8a8a8"></div>
<div class="a" style="left:9.5px;top:966.6px;width:141.6px;height:37.2px;border-radius:5px;background:#c0c0c0;border:1px solid #a0a0a0;box-shadow:0 0 1.5px rgba(40,40,40,.8)"></div>
<div class="a ctr" style="left:80.0px;top:1008px;font-size:11.5px;font-weight:bold;color:#3c3c3c;white-space:nowrap">White</div>
<div class="a" style="left:157.3px;top:962px;width:149.3px;height:60.9px;border-radius:5px 5px 0 0;background:linear-gradient(180deg,#969696 0,#8a8a8a 12%,#7c7c7c 50%,#686868 100%);box-shadow:inset 0 1px 0 #a8a8a8"></div>
<div class="a" style="left:161.5px;top:966.6px;width:141.6px;height:37.2px;border-radius:5px;background:#c00000;border:1px solid #e06060;box-shadow:0 0 1.5px rgba(40,40,40,.8)"></div>
<div class="a ctr" style="left:232.0px;top:1008px;font-size:11.5px;font-weight:bold;color:#3c3c3c;white-space:nowrap">Red</div>
<div class="a" style="left:309.3px;top:962px;width:149.3px;height:60.9px;border-radius:5px 5px 0 0;background:linear-gradient(180deg,#969696 0,#8a8a8a 12%,#7c7c7c 50%,#686868 100%);box-shadow:inset 0 1px 0 #a8a8a8"></div>
<div class="a" style="left:313.5px;top:966.6px;width:141.6px;height:37.2px;border-radius:5px;background:#00c000;border:1px solid #60e060;box-shadow:0 0 1.5px rgba(40,40,40,.8)"></div>
<div class="a ctr" style="left:384.0px;top:1008px;font-size:11.5px;font-weight:bold;color:#3c3c3c;white-space:nowrap">Green</div>
<div class="a" style="left:461.3px;top:962px;width:149.3px;height:60.9px;border-radius:5px 5px 0 0;background:linear-gradient(180deg,#969696 0,#8a8a8a 12%,#7c7c7c 50%,#686868 100%);box-shadow:inset 0 1px 0 #a8a8a8"></div>
<div class="a" style="left:465.5px;top:966.6px;width:141.6px;height:37.2px;border-radius:5px;background:#0000c0;border:1px solid #6060e0;box-shadow:0 0 1.5px rgba(40,40,40,.8)"></div>
<div class="a ctr" style="left:536.0px;top:1008px;font-size:11.5px;font-weight:bold;color:#3c3c3c;white-space:nowrap">Blue</div>
<div class="a" style="left:613.3px;top:962px;width:149.3px;height:60.9px;border-radius:5px 5px 0 0;background:linear-gradient(180deg,#969696 0,#8a8a8a 12%,#7c7c7c 50%,#686868 100%);box-shadow:inset 0 1px 0 #a8a8a8"></div>
<div class="a" style="left:617.5px;top:966.6px;width:141.6px;height:37.2px;border-radius:5px;background:#00c0c0;border:1px solid #60e0e0;box-shadow:0 0 1.5px rgba(40,40,40,.8)"></div>
<div class="a ctr" style="left:688.0px;top:1008px;font-size:11.5px;font-weight:bold;color:#3c3c3c;white-space:nowrap">Cyan</div>
<div class="a" style="left:765.3px;top:962px;width:149.3px;height:60.9px;border-radius:5px 5px 0 0;background:linear-gradient(180deg,#969696 0,#8a8a8a 12%,#7c7c7c 50%,#686868 100%);box-shadow:inset 0 1px 0 #a8a8a8"></div>
<div class="a" style="left:769.5px;top:966.6px;width:141.6px;height:37.2px;border-radius:5px;background:#c000c0;border:1px solid #e060e0;box-shadow:0 0 1.5px rgba(40,40,40,.8)"></div>
<div class="a ctr" style="left:840.0px;top:1008px;font-size:11.5px;font-weight:bold;color:#3c3c3c;white-space:nowrap">Magenta</div>
<div class="a" style="left:917.3px;top:962px;width:149.3px;height:60.9px;border-radius:5px 5px 0 0;background:linear-gradient(180deg,#969696 0,#8a8a8a 12%,#7c7c7c 50%,#686868 100%);box-shadow:inset 0 1px 0 #a8a8a8"></div>
<div class="a" style="left:921.5px;top:966.6px;width:141.6px;height:37.2px;border-radius:5px;background:#c4c400;border:1px solid #e0e060;box-shadow:0 0 1.5px rgba(40,40,40,.8)"></div>
<div class="a ctr" style="left:992.0px;top:1008px;font-size:11.5px;font-weight:bold;color:#3c3c3c;white-space:nowrap">Yellow</div>
<div class="a" style="left:1069.3px;top:962px;width:149.3px;height:60.9px;border-radius:5px 5px 0 0;background:linear-gradient(180deg,#565656 0,#484848 30%,#3c3c3c 100%);box-shadow:inset 0 1px 0 #666"></div>
<div class="a" style="left:1073.5px;top:966.6px;width:141.6px;height:37.2px;border-radius:5px;background:#ffffff;border:1px solid #d8d8d8;box-shadow:0 0 1.5px rgba(40,40,40,.8)"></div>
<div class="a ctr" style="left:1144.0px;top:1008px;font-size:11.5px;font-weight:bold;color:#f4f4f4;white-space:nowrap">100W</div>
<div class="a" style="left:1361px;top:962px;width:48px;height:18px;border-radius:5px 5px 0 0;background:linear-gradient(180deg,#a2a2a2 0,#8e8e8e 30%,#7a7a7a 70%,#6c6c6c 100%)"></div>
<div class="a" style="left:1361px;top:981.3px;width:48px;height:42px;border-radius:0 0 4px 4px;background:linear-gradient(180deg,#a2a2a2 0,#8e8e8e 30%,#7a7a7a 70%,#6c6c6c 100%)"></div>
<div class="a" style="left:1410.3px;top:962px;width:45.7px;height:29.8px;border-radius:5px 0 0 0;background:linear-gradient(180deg,#a2a2a2 0,#8e8e8e 30%,#7a7a7a 70%,#6c6c6c 100%)"></div>
<div class="a" style="left:1457.0px;top:962px;width:44.0px;height:29.8px;background:linear-gradient(180deg,#a2a2a2 0,#8e8e8e 30%,#7a7a7a 70%,#6c6c6c 100%)"></div>
<div class="a" style="left:1502.1px;top:962px;width:44.0px;height:29.8px;background:linear-gradient(180deg,#a2a2a2 0,#8e8e8e 30%,#7a7a7a 70%,#6c6c6c 100%)"></div>
<div class="a" style="left:1547.1px;top:962px;width:44.0px;height:29.8px;background:linear-gradient(180deg,#a2a2a2 0,#8e8e8e 30%,#7a7a7a 70%,#6c6c6c 100%)"></div>
<div class="a" style="left:1592.2px;top:962px;width:44.0px;height:29.8px;background:linear-gradient(180deg,#a2a2a2 0,#8e8e8e 30%,#7a7a7a 70%,#6c6c6c 100%)"></div>
<div class="a" style="left:1636.5px;top:962px;width:47px;height:29.8px;border-radius:0 5px 0 0;background:linear-gradient(180deg,#4a4a4a,#2e2e2e)"></div>
<div class="a" style="left:1410px;top:993px;width:136px;height:30px;border-radius:5px 0 0 0;background:linear-gradient(180deg,#a2a2a2 0,#8e8e8e 30%,#7a7a7a 70%,#6c6c6c 100%)"></div>
<div class="a" style="left:1547px;top:993px;width:136.5px;height:30px;border-radius:0 5px 0 0;background:linear-gradient(180deg,#a2a2a2 0,#8e8e8e 30%,#7a7a7a 70%,#6c6c6c 100%)"></div>
<div class="a" id="bk" style="left:1466.7px;top:995.6px;font-size:22.5px;-webkit-text-stroke:0.7px #3a3a3a;line-height:26px;color:#3a3a3a;white-space:nowrap;transform-origin:0 0;transform:scaleX(0.985)">Back</div>
<div class="a" id="nx" style="left:1573px;top:995.6px;font-size:22.5px;-webkit-text-stroke:0.7px #3a3a3a;line-height:26px;color:#3a3a3a;white-space:nowrap;transform-origin:0 0;transform:scaleX(1.11)">Next</div>
<svg class="a" style="left:1340px;top:950px" width="348" height="78" viewBox="1340 950 348 78"><defs><linearGradient id="cg" x1="0" y1="0" x2="0" y2="1"><stop offset="0" stop-color="#6c6c6c"/><stop offset="1" stop-color="#aaaaaa"/></linearGradient><linearGradient id="cgd" x1="0" y1="0" x2="0" y2="1"><stop offset="0" stop-color="#2a2a2a"/><stop offset="1" stop-color="#3c3c3c"/></linearGradient></defs><circle cx="1432.8" cy="976.8" r="10" fill="url(#cg)"/><circle cx="1479.2" cy="976.8" r="10" fill="url(#cg)"/><circle cx="1524.1" cy="976.8" r="10" fill="url(#cg)"/><circle cx="1568.9" cy="976.8" r="10" fill="url(#cg)"/><circle cx="1614.2" cy="976.8" r="10" fill="url(#cg)"/><circle cx="1659.6" cy="976.8" r="10" fill="url(#cgd)"/><circle cx="1441" cy="1008.4" r="10" fill="url(#cg)"/><circle cx="1654" cy="1008.4" r="10" fill="url(#cg)"/><ellipse cx="1385" cy="970.5" rx="8" ry="6.5" fill="url(#cg)"/><path d="M1380.5 973h9l-4.5-5z" fill="#3a3a3a"/><rect x="1428.3" y="972.3" width="9" height="9" fill="#333"/><path d="M1475.5 971.3v11l9-5.5z" fill="#333"/><g fill="none" stroke="#333" stroke-width="2.1"><path d="M1520.6 972h-2.4v9.6h2.4M1527.6 972h2.4v9.6h-2.4"/></g><path d="M1521.6 976.8h1.7M1524.9 976.8h1.7" stroke="#333" stroke-width="2"/><path d="M1568.9 976.8c-1.3-1.9-2.6-2.6-3.8-2.6a2.6 2.6 0 0 0 0 5.2c1.2 0 2.5-.7 3.8-2.6c1.3-1.9 2.6-2.6 3.8-2.6a2.6 2.6 0 0 1 0 5.2c-1.2 0-2.5-.7-3.8-2.6z" fill="none" stroke="#333" stroke-width="1.5"/><g fill="none" stroke="#333" stroke-width="2"><path d="M1609 975.5a5.4 5.4 0 0 1 9.5-2"/><path d="M1619.4 978.1a5.4 5.4 0 0 1-9.5 2"/></g><path d="M1620.3 970.3v5h-5z" fill="#333"/><path d="M1608.1 983.3v-5h5z" fill="#333"/><g fill="none" stroke="#333" stroke-width="1.7"><path d="M1441.3 1004l-4 4.4 4 4.4M1446 1004l-4 4.4 4 4.4"/><path d="M1649.5 1004l4 4.4-4 4.4M1654.2 1004l4 4.4-4 4.4"/></g><rect x="1370.3" y="987.8" width="29" height="28.5" rx="3.5" fill="#8a8a8a"/><rect x="1370.3" y="987.8" width="29" height="14.2" rx="3" fill="#a4a4a4"/><rect x="1370.3" y="987.8" width="29" height="28.5" rx="3.5" fill="none" stroke="#1e1e1e" stroke-width="3"/><rect x="1368.2" y="985.7" width="33.2" height="32.7" rx="6" fill="none" stroke="#c0c0c0" stroke-width="0.9"/><rect x="1377.9" y="995" width="14.1" height="14" fill="#000"/><rect x="1377.9" y="995" width="14.1" height="7" fill="#242424"/></svg>
<div class="a" style="left:4px;top:1023.5px;width:1680px;height:5px;background:linear-gradient(90deg,#3a88ee 0,#3a88ee 1443px,#18a4f4 1443px)"></div>
<div class="a" style="left:4px;top:1023.5px;width:96px;height:5px;background:#58b058;border-radius:0 3px 0 0"></div>
</div>
</body></html>
